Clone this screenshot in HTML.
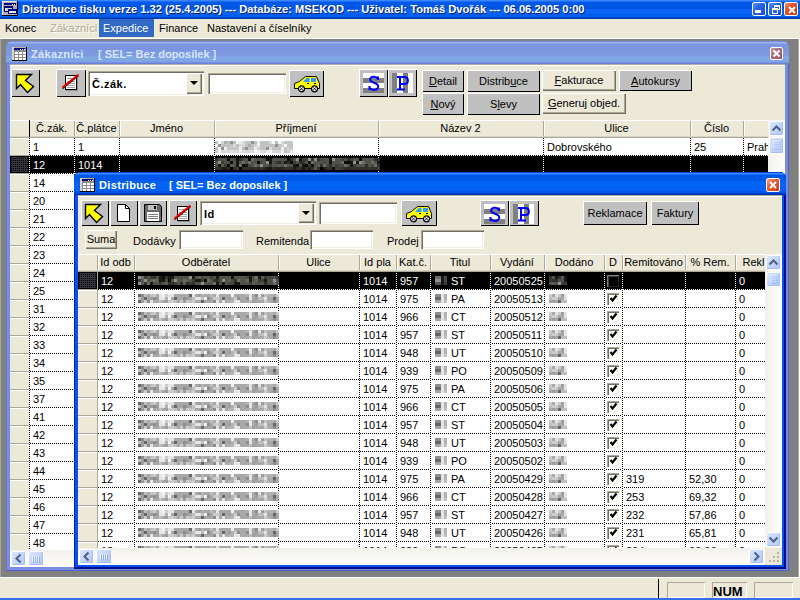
<!DOCTYPE html><html><head><meta charset="utf-8"><style>
*{margin:0;padding:0;box-sizing:border-box}
html,body{width:800px;height:600px;overflow:hidden;background:#ECE9D8;position:relative;font-family:"Liberation Sans",sans-serif;font-size:11px;color:#000}
.t{position:absolute;white-space:nowrap;line-height:13px;font-size:11px}
.b{font-weight:bold}
</style></head><body>
<div style="position:absolute;left:0px;top:0px;width:800px;height:19px;background:linear-gradient(#3A86FF 0px,#3A86FF 1px,#1C6DF8 1px,#1C6DF8 2px,#0058E8 2px,#0058E8 7px,#0052DE 7px,#0052DE 9px,#0766F8 9px,#0766F8 14px,#005EEE 14px,#005EEE 17px,#0048D0 17px,#0048D0 18px,#0038B0 18px);"></div>
<svg style="position:absolute;left:2px;top:1px" width="16" height="15"><rect x="0" y="0" width="16" height="15" fill="#ECE9D8"/><rect x="1" y="1" width="14" height="13" fill="#B0B0B0"/><rect x="15" y="0" width="1" height="15" fill="#000"/><rect x="0" y="14" width="16" height="1" fill="#000"/><rect x="2" y="2" width="12" height="2" fill="#000080"/><rect x="10" y="3" width="1" height="1" fill="#fff"/><rect x="12" y="3" width="1" height="1" fill="#fff"/><rect x="2" y="5" width="9" height="6" fill="#000080"/><rect x="3" y="7" width="7" height="3" fill="#D0D0D0"/><rect x="3" y="7" width="1" height="3" fill="#fff"/><rect x="6" y="8" width="9" height="5" fill="#000080"/><rect x="7" y="10" width="7" height="2" fill="#E8E8E8"/></svg>
<div class="t b" style="left:23px;top:4px;color:#0A1E6E;transform:scaleX(1.0127);transform-origin:0 0">Distribuce tisku verze 1.32 (25.4.2005) --- Databáze: MSEKOD --- Uživatel: Tomáš Dvořák --- 06.06.2005 0:00</div>
<div class="t b" style="left:22px;top:3px;color:#fff;transform:scaleX(1.0127);transform-origin:0 0">Distribuce tisku verze 1.32 (25.4.2005) --- Databáze: MSEKOD --- Uživatel: Tomáš Dvořák --- 06.06.2005 0:00</div>
<div style="position:absolute;left:752px;top:2px;width:14px;height:14px;background:linear-gradient(135deg,#5A95FF 0%,#2663E6 40%,#1A50D0 100%);border:1px solid #fff;border-radius:2px;"><div style="position:absolute;left:2px;top:7px;width:6px;height:3px;background:#fff"></div></div>
<div style="position:absolute;left:768px;top:2px;width:14px;height:14px;background:linear-gradient(135deg,#5A95FF 0%,#2663E6 40%,#1A50D0 100%);border:1px solid #fff;border-radius:2px;"><div style="position:absolute;left:5px;top:2px;width:6px;height:5px;border:1px solid #fff;border-top-width:2px"></div><div style="position:absolute;left:3px;top:5px;width:6px;height:6px;border:1px solid #fff;border-top-width:2px;background:#2663E6"></div></div>
<div style="position:absolute;left:784px;top:2px;width:14px;height:14px;background:linear-gradient(135deg,#F0A080 0%,#E0542C 35%,#C83A12 100%);border:1px solid #fff;border-radius:2px;"><svg width="14" height="14" style="position:absolute;left:0;top:0"><path d="M4 4L10 10M10 4L4 10" stroke="#fff" stroke-width="2"/></svg></div>
<div style="position:absolute;left:0px;top:19px;width:800px;height:19px;background:#ECE9D8;"></div>
<div class="t" style="left:5px;top:22px;">Konec</div>
<div class="t" style="left:50px;top:22px;color:#ACA899;text-shadow:1px 1px #fff;">Zákazníci</div>
<div style="position:absolute;left:99px;top:19px;width:55px;height:18px;background:#316AC5;"></div>
<div class="t" style="left:103px;top:22px;color:#fff;">Expedice</div>
<div class="t" style="left:159px;top:22px;">Finance</div>
<div class="t" style="left:207px;top:22px;">Nastavení a číselníky</div>
<div style="position:absolute;left:0px;top:38px;width:800px;height:1px;background:#fff;"></div>
<div style="position:absolute;left:0px;top:39px;width:800px;height:539px;background:#808080;box-shadow:inset 1px 0 #ACA899, inset -1px 0 #fff, inset -2px 0 #ACA899;"></div>
<div style="position:absolute;left:0px;top:577px;width:800px;height:1px;background:#fff;"></div>
<div style="position:absolute;left:0px;top:578px;width:800px;height:20px;background:#ECE9D8;"></div>
<div style="position:absolute;left:658px;top:579px;width:1px;height:19px;background:#000;"></div>
<div style="position:absolute;left:667px;top:582px;width:38px;height:16px;box-shadow:inset 1px 1px #ACA899, inset -1px -1px #fff;"></div>
<div style="position:absolute;left:712px;top:582px;width:35px;height:16px;box-shadow:inset 1px 1px #ACA899, inset -1px -1px #fff;"></div>
<div style="position:absolute;left:754px;top:582px;width:39px;height:16px;box-shadow:inset 1px 1px #ACA899, inset -1px -1px #fff;"></div>
<div class="t" style="left:713px;top:585px;font-weight:bold;font-size:13px;line-height:14px;">NUM</div>
<div style="position:absolute;left:0px;top:598px;width:800px;height:2px;background:#3A6EE8;"></div>
<div style="position:absolute;left:6px;top:41px;width:783px;height:530px;background:#7A8CE0;border-radius:6px 6px 0 0;box-shadow:inset 1px 0 #6A78D0, inset -1px 0 #5060C8, inset 0 -1px #5060C8;"></div>
<div style="position:absolute;left:6px;top:41px;width:783px;height:23px;background:linear-gradient(#7C8FE0 0px,#7C8FE0 1px,#9CB4EE 1px,#9CB4EE 2px,#8AA6E8 2px,#8AA6E8 3px,#7B95DF 3px,#7B95DF 10px,#7D9AE2 10px,#7D9AE2 15px,#80A6E6 15px,#80A6E6 21px,#7690E0 21px,#7690E0 22px,#6E80D8 22px);border-radius:6px 6px 0 0;"></div>
<svg style="position:absolute;left:12px;top:47px" width="15" height="14"><rect x="0" y="0" width="15" height="14" fill="#8C8C8C"/><rect x="0" y="0" width="15" height="1" fill="#B8B4A0"/><rect x="0" y="0" width="2" height="13" fill="#D8D4C0"/><rect x="14" y="0" width="1" height="14" fill="#000"/><rect x="0" y="13" width="15" height="1" fill="#000"/><rect x="2" y="1" width="11" height="2" fill="#000080"/><rect x="8" y="2" width="1" height="1" fill="#fff"/><rect x="10" y="2" width="1" height="1" fill="#fff"/><rect x="12" y="2" width="1" height="1" fill="#fff"/><rect x="3" y="5" width="3" height="2" fill="#fff"/><rect x="7" y="5" width="3" height="2" fill="#fff"/><rect x="11" y="5" width="3" height="2" fill="#fff"/><rect x="3" y="8" width="3" height="2" fill="#fff"/><rect x="7" y="8" width="3" height="2" fill="#fff"/><rect x="11" y="8" width="3" height="2" fill="#fff"/><rect x="3" y="11" width="3" height="2" fill="#fff"/><rect x="7" y="11" width="3" height="2" fill="#fff"/><rect x="11" y="11" width="3" height="2" fill="#fff"/></svg>
<div class="t b" style="left:31px;top:48px;color:#D8E4F8;font-size:11px;letter-spacing:0.35px">Zákazníci</div>
<div class="t b" style="left:98px;top:48px;color:#D8E4F8;font-size:11px">[ SEL= Bez doposílek ]</div>
<div style="position:absolute;left:770px;top:47px;width:13px;height:13px;background:linear-gradient(135deg,#C8A0B0 0%,#A86878 45%,#985868 100%);border:1px solid #fff;border-radius:2px;"><svg width="11" height="11" style="position:absolute;left:0;top:0"><path d="M2.5 2.5L8.5 8.5M8.5 2.5L2.5 8.5" stroke="#fff" stroke-width="2"/></svg></div>
<div style="position:absolute;left:10px;top:64px;width:775px;height:503px;background:#ECE9D8;box-shadow:inset 0 1px #B0AEA0, inset 0 2px #fff;"></div>
<div style="position:absolute;left:11px;top:69px;width:29px;height:28px;background:#C0C0C0;box-shadow:inset 1px 1px #fff, inset -1px -1px #000;"></div>
<svg style="position:absolute;left:15px;top:73px" width="22" height="22"><path d="M1.5 1.5H16.5L10.5 7.5L18.5 13.5L12.5 19.5L5.5 11.5L1.5 15.5Z" fill="#FFFF00" stroke="#000" stroke-width="1.4" stroke-linejoin="miter"/></svg>
<div style="position:absolute;left:56px;top:69px;width:30px;height:28px;background:#C0C0C0;box-shadow:inset 1px 1px #fff, inset -1px -1px #000;"></div>
<svg style="position:absolute;left:61px;top:72px" width="20" height="20"><rect x="5" y="4" width="12" height="15" fill="#909090"/><rect x="4.5" y="3.5" width="11" height="14" fill="#fff" stroke="#000" stroke-width="1"/><rect x="6" y="6" width="8" height="1" fill="#A0A0A0"/><rect x="6" y="9" width="8" height="1" fill="#A0A0A0"/><rect x="6" y="11" width="8" height="1" fill="#A0A0A0"/><rect x="6" y="13" width="8" height="1" fill="#A0A0A0"/><rect x="6" y="15" width="8" height="1" fill="#A0A0A0"/><path d="M1.5 16.5L17.5 3.5" stroke="#000" stroke-width="1.5"/><path d="M1.5 15.5L17.5 2.5" stroke="#F00000" stroke-width="2"/></svg>
<div style="position:absolute;left:88px;top:71px;width:116px;height:25px;background:#fff;box-shadow:inset 1px 1px #ACA899, inset 2px 2px #716F64, inset -1px -1px #fff, inset -2px -2px #F1EFE2;"></div>
<div style="position:absolute;left:186px;top:73px;width:16px;height:21px;background:#ECE9D8;box-shadow:inset 1px 1px #fff, inset -1px -1px #716F64, inset -2px -2px #ACA899;"><div style="position:absolute;left:4px;top:8px;width:0;height:0;border-left:4px solid transparent;border-right:4px solid transparent;border-top:4px solid #000"></div></div>
<div class="t b" style="left:92px;top:78px;letter-spacing:0.5px">Č.zák.</div>
<div style="position:absolute;left:208px;top:73px;width:78px;height:21px;background:#fff;box-shadow:inset 1px 1px #ACA899, inset 2px 2px #716F64, inset -1px -1px #fff, inset -2px -2px #F1EFE2;"></div>
<div style="position:absolute;left:289px;top:70px;width:35px;height:27px;background:#C0C0C0;box-shadow:inset 1px 1px #fff, inset -1px -1px #000;"></div>
<svg style="position:absolute;left:293px;top:75px" width="30" height="19"><path d="M12.5 1.5H23.5L26.5 8.5V13.5H1.5V8.5L6.5 6.5Z" fill="#FFFF00" stroke="#000" stroke-linejoin="round"/><path d="M10 7L13.5 3H16.5V7Z" fill="#3399FF"/><path d="M18 3H23V7H18Z" fill="#3399FF"/><rect x="14" y="8" width="2" height="1" fill="#000"/><rect x="21" y="8" width="2" height="1" fill="#000"/><circle cx="8.5" cy="13.8" r="3" fill="#fff" stroke="#000" stroke-width="1.2"/><path d="M6.7 12L10.3 15.6M10.3 12L6.7 15.6" stroke="#000" stroke-width="0.8"/><circle cx="21.5" cy="13.8" r="3" fill="#fff" stroke="#000" stroke-width="1.2"/><path d="M19.7 12L23.3 15.6M23.3 12L19.7 15.6" stroke="#000" stroke-width="0.8"/></svg>
<div style="position:absolute;left:359px;top:69px;width:29px;height:28px;background:#C0C0C0;box-shadow:inset 1px 1px #fff, inset -1px -1px #000;"></div>
<svg style="position:absolute;left:363px;top:73px" width="21" height="20"><rect x="0" y="0" width="21" height="20" fill="#fff"/><rect x="0" y="5" width="21" height="5" fill="#808080"/><rect x="0" y="15" width="21" height="5" fill="#808080"/><path d="M15 3.5V7M15 6C13.5 3.5 9 3 7.5 5C6 7.5 8.5 9 11 9.8C14 10.6 16 12 15 15C13.5 17.8 8.5 17.5 6.5 14.8M6.5 13V17" fill="none" stroke="#0000FF" stroke-width="2"/></svg>
<div style="position:absolute;left:388px;top:69px;width:29px;height:28px;background:#C0C0C0;box-shadow:inset 1px 1px #fff, inset -1px -1px #000;"></div>
<svg style="position:absolute;left:392px;top:73px" width="21" height="20"><rect x="0" y="0" width="21" height="20" fill="#fff"/><rect x="0" y="0" width="5" height="20" fill="#808080"/><rect x="11" y="0" width="5" height="20" fill="#808080"/><path d="M5 4H12.5C17 4 17 11 12.5 11H8M8 4V16.5M5 16.5H13" fill="none" stroke="#0000FF" stroke-width="2"/></svg>
<div style="position:absolute;left:422px;top:70px;width:42px;height:22px;background:#C0C0C0;box-shadow:inset 1px 1px #fff, inset -1px -1px #000;"><div class="t" style="left:0;width:42px;text-align:center;top:5px"><u>D</u>etail</div></div>
<div style="position:absolute;left:467px;top:70px;width:73px;height:22px;background:#C0C0C0;box-shadow:inset 1px 1px #fff, inset -1px -1px #000;"><div class="t" style="left:0;width:73px;text-align:center;top:5px">Distrib<u>u</u>ce</div></div>
<div style="position:absolute;left:422px;top:93px;width:42px;height:22px;background:#C0C0C0;box-shadow:inset 1px 1px #fff, inset -1px -1px #000;"><div class="t" style="left:0;width:42px;text-align:center;top:5px"><u>N</u>ový</div></div>
<div style="position:absolute;left:467px;top:93px;width:73px;height:22px;background:#C0C0C0;box-shadow:inset 1px 1px #fff, inset -1px -1px #000;"><div class="t" style="left:0;width:73px;text-align:center;top:5px">S<u>l</u>evy</div></div>
<div style="position:absolute;left:542px;top:70px;width:74px;height:21px;background:#ECE9D8;box-shadow:inset 1px 1px #fff, inset -1px -1px #716F64, inset -2px -2px #ACA899;"><div class="t" style="left:0;width:74px;text-align:center;top:4px"><u>F</u>akturace</div></div>
<div style="position:absolute;left:619px;top:70px;width:73px;height:21px;background:#C0C0C0;box-shadow:inset 1px 1px #fff, inset -1px -1px #000;"><div class="t" style="left:0;width:73px;text-align:center;top:5px"><u>A</u>utokursy</div></div>
<div style="position:absolute;left:542px;top:93px;width:84px;height:21px;background:#ECE9D8;box-shadow:inset 1px 1px #fff, inset -1px -1px #716F64, inset -2px -2px #ACA899;"><div class="t" style="left:0;width:84px;text-align:center;top:4px"><u>G</u>eneruj objed.</div></div>
<div style="position:absolute;left:10px;top:120px;width:758px;height:430px;overflow:hidden;background:#fff">
<div style="position:absolute;left:0px;top:0px;width:758px;height:18px;background:#ECE9D8;box-shadow:inset 0 1px #fff, inset 0 -1px #ACA899, inset 0 -2px #D8D4C4;"></div>
<div style="position:absolute;left:19px;top:0px;width:1px;height:17px;background:#000;"></div>
<div style="position:absolute;left:64px;top:1px;width:1px;height:15px;background:#ACA899;"></div>
<div style="position:absolute;left:65px;top:1px;width:1px;height:15px;background:#fff;"></div>
<div style="position:absolute;left:109px;top:1px;width:1px;height:15px;background:#ACA899;"></div>
<div style="position:absolute;left:110px;top:1px;width:1px;height:15px;background:#fff;"></div>
<div style="position:absolute;left:204px;top:1px;width:1px;height:15px;background:#ACA899;"></div>
<div style="position:absolute;left:205px;top:1px;width:1px;height:15px;background:#fff;"></div>
<div style="position:absolute;left:368px;top:1px;width:1px;height:15px;background:#ACA899;"></div>
<div style="position:absolute;left:369px;top:1px;width:1px;height:15px;background:#fff;"></div>
<div style="position:absolute;left:533px;top:1px;width:1px;height:15px;background:#ACA899;"></div>
<div style="position:absolute;left:534px;top:1px;width:1px;height:15px;background:#fff;"></div>
<div style="position:absolute;left:680px;top:1px;width:1px;height:15px;background:#ACA899;"></div>
<div style="position:absolute;left:681px;top:1px;width:1px;height:15px;background:#fff;"></div>
<div style="position:absolute;left:733px;top:1px;width:1px;height:15px;background:#ACA899;"></div>
<div style="position:absolute;left:734px;top:1px;width:1px;height:15px;background:#fff;"></div>
<div style="position:absolute;left:19px;top:2px;width:45px;height:13px;"><div class="t" style="left:0;top:0;width:45px;text-align:center">Č.zák.</div></div>
<div style="position:absolute;left:64px;top:2px;width:45px;height:13px;"><div class="t" style="left:0;top:0;width:45px;text-align:center">Č.plátce</div></div>
<div style="position:absolute;left:109px;top:2px;width:95px;height:13px;"><div class="t" style="left:0;top:0;width:95px;text-align:center">Jméno</div></div>
<div style="position:absolute;left:204px;top:2px;width:164px;height:13px;"><div class="t" style="left:0;top:0;width:164px;text-align:center">Příjmení</div></div>
<div style="position:absolute;left:368px;top:2px;width:165px;height:13px;"><div class="t" style="left:0;top:0;width:165px;text-align:center">Název 2</div></div>
<div style="position:absolute;left:533px;top:2px;width:147px;height:13px;"><div class="t" style="left:0;top:0;width:147px;text-align:center">Ulice</div></div>
<div style="position:absolute;left:680px;top:2px;width:53px;height:13px;"><div class="t" style="left:0;top:0;width:53px;text-align:center">Číslo</div></div>
<div style="position:absolute;left:0px;top:18px;width:19px;height:17px;background:#ECE9D8;box-shadow:inset 0 1px #fff;"></div>
<div style="position:absolute;left:0px;top:35px;width:19px;height:1px;background:#ACA899;"></div>
<div style="position:absolute;left:19px;top:18px;width:1px;height:18px;background:repeating-linear-gradient(180deg,#000 0 1px,#fff 1px 2px);"></div>
<div style="position:absolute;left:20px;top:35px;width:738px;height:1px;background:repeating-linear-gradient(90deg,#000 0 1px,#fff 1px 2px);"></div>
<div style="position:absolute;left:64px;top:18px;width:1px;height:18px;background:repeating-linear-gradient(180deg,#000 0 1px,#fff 1px 2px);"></div>
<div style="position:absolute;left:109px;top:18px;width:1px;height:18px;background:repeating-linear-gradient(180deg,#000 0 1px,#fff 1px 2px);"></div>
<div style="position:absolute;left:204px;top:18px;width:1px;height:18px;background:repeating-linear-gradient(180deg,#000 0 1px,#fff 1px 2px);"></div>
<div style="position:absolute;left:368px;top:18px;width:1px;height:18px;background:repeating-linear-gradient(180deg,#000 0 1px,#fff 1px 2px);"></div>
<div style="position:absolute;left:533px;top:18px;width:1px;height:18px;background:repeating-linear-gradient(180deg,#000 0 1px,#fff 1px 2px);"></div>
<div style="position:absolute;left:680px;top:18px;width:1px;height:18px;background:repeating-linear-gradient(180deg,#000 0 1px,#fff 1px 2px);"></div>
<div style="position:absolute;left:733px;top:18px;width:1px;height:18px;background:repeating-linear-gradient(180deg,#000 0 1px,#fff 1px 2px);"></div>
<div style="position:absolute;left:23px;top:21px;width:200px;height:13px;"><div class="t" style="left:0;top:0;color:#000">1</div></div>
<div style="position:absolute;left:68px;top:21px;width:200px;height:13px;"><div class="t" style="left:0;top:0;color:#000">1</div></div>
<svg style="position:absolute;left:205px;top:21px" width="78" height="12"><use href="#zp1_l"/></svg>
<div style="position:absolute;left:537px;top:21px;width:200px;height:13px;"><div class="t" style="left:0;top:0;color:#000">Dobrovského</div></div>
<div style="position:absolute;left:684px;top:21px;width:200px;height:13px;"><div class="t" style="left:0;top:0;color:#000">25</div></div>
<div style="position:absolute;left:737px;top:21px;width:200px;height:13px;"><div class="t" style="left:0;top:0;color:#000">Prah</div></div>
<div style="position:absolute;left:0px;top:36px;width:19px;height:17px;background:conic-gradient(#000 25%,#34343C 0) 0 0/2px 2px;box-shadow:inset 0 0 0 1px #000;"></div>
<div style="position:absolute;left:20px;top:36px;width:738px;height:17px;background:#000;"></div>
<div style="position:absolute;left:0px;top:53px;width:19px;height:1px;background:#ACA899;"></div>
<div style="position:absolute;left:19px;top:36px;width:1px;height:18px;background:repeating-linear-gradient(180deg,#000 0 1px,#fff 1px 2px);"></div>
<div style="position:absolute;left:20px;top:53px;width:738px;height:1px;background:repeating-linear-gradient(90deg,#000 0 1px,#fff 1px 2px);"></div>
<div style="position:absolute;left:64px;top:36px;width:1px;height:18px;background:repeating-linear-gradient(180deg,#000 0 1px,#fff 1px 2px);"></div>
<div style="position:absolute;left:109px;top:36px;width:1px;height:18px;background:repeating-linear-gradient(180deg,#000 0 1px,#fff 1px 2px);"></div>
<div style="position:absolute;left:204px;top:36px;width:1px;height:18px;background:repeating-linear-gradient(180deg,#000 0 1px,#fff 1px 2px);"></div>
<div style="position:absolute;left:368px;top:36px;width:1px;height:18px;background:repeating-linear-gradient(180deg,#000 0 1px,#fff 1px 2px);"></div>
<div style="position:absolute;left:533px;top:36px;width:1px;height:18px;background:repeating-linear-gradient(180deg,#000 0 1px,#fff 1px 2px);"></div>
<div style="position:absolute;left:680px;top:36px;width:1px;height:18px;background:repeating-linear-gradient(180deg,#000 0 1px,#fff 1px 2px);"></div>
<div style="position:absolute;left:733px;top:36px;width:1px;height:18px;background:repeating-linear-gradient(180deg,#000 0 1px,#fff 1px 2px);"></div>
<div style="position:absolute;left:23px;top:39px;width:200px;height:13px;"><div class="t" style="left:0;top:0;color:#fff">12</div></div>
<div style="position:absolute;left:68px;top:39px;width:200px;height:13px;"><div class="t" style="left:0;top:0;color:#fff">1014</div></div>
<svg style="position:absolute;left:205px;top:38px" width="165" height="12"><use href="#zp2_d"/></svg>
<div style="position:absolute;left:0px;top:54px;width:19px;height:17px;background:#ECE9D8;box-shadow:inset 0 1px #fff;"></div>
<div style="position:absolute;left:0px;top:71px;width:19px;height:1px;background:#ACA899;"></div>
<div style="position:absolute;left:19px;top:54px;width:1px;height:18px;background:repeating-linear-gradient(180deg,#000 0 1px,#fff 1px 2px);"></div>
<div style="position:absolute;left:20px;top:71px;width:738px;height:1px;background:repeating-linear-gradient(90deg,#000 0 1px,#fff 1px 2px);"></div>
<div style="position:absolute;left:64px;top:54px;width:1px;height:18px;background:repeating-linear-gradient(180deg,#000 0 1px,#fff 1px 2px);"></div>
<div style="position:absolute;left:109px;top:54px;width:1px;height:18px;background:repeating-linear-gradient(180deg,#000 0 1px,#fff 1px 2px);"></div>
<div style="position:absolute;left:204px;top:54px;width:1px;height:18px;background:repeating-linear-gradient(180deg,#000 0 1px,#fff 1px 2px);"></div>
<div style="position:absolute;left:368px;top:54px;width:1px;height:18px;background:repeating-linear-gradient(180deg,#000 0 1px,#fff 1px 2px);"></div>
<div style="position:absolute;left:533px;top:54px;width:1px;height:18px;background:repeating-linear-gradient(180deg,#000 0 1px,#fff 1px 2px);"></div>
<div style="position:absolute;left:680px;top:54px;width:1px;height:18px;background:repeating-linear-gradient(180deg,#000 0 1px,#fff 1px 2px);"></div>
<div style="position:absolute;left:733px;top:54px;width:1px;height:18px;background:repeating-linear-gradient(180deg,#000 0 1px,#fff 1px 2px);"></div>
<div style="position:absolute;left:23px;top:57px;width:200px;height:13px;"><div class="t" style="left:0;top:0;color:#000">14</div></div>
<div style="position:absolute;left:0px;top:72px;width:19px;height:17px;background:#ECE9D8;box-shadow:inset 0 1px #fff;"></div>
<div style="position:absolute;left:0px;top:89px;width:19px;height:1px;background:#ACA899;"></div>
<div style="position:absolute;left:19px;top:72px;width:1px;height:18px;background:repeating-linear-gradient(180deg,#000 0 1px,#fff 1px 2px);"></div>
<div style="position:absolute;left:20px;top:89px;width:738px;height:1px;background:repeating-linear-gradient(90deg,#000 0 1px,#fff 1px 2px);"></div>
<div style="position:absolute;left:64px;top:72px;width:1px;height:18px;background:repeating-linear-gradient(180deg,#000 0 1px,#fff 1px 2px);"></div>
<div style="position:absolute;left:109px;top:72px;width:1px;height:18px;background:repeating-linear-gradient(180deg,#000 0 1px,#fff 1px 2px);"></div>
<div style="position:absolute;left:204px;top:72px;width:1px;height:18px;background:repeating-linear-gradient(180deg,#000 0 1px,#fff 1px 2px);"></div>
<div style="position:absolute;left:368px;top:72px;width:1px;height:18px;background:repeating-linear-gradient(180deg,#000 0 1px,#fff 1px 2px);"></div>
<div style="position:absolute;left:533px;top:72px;width:1px;height:18px;background:repeating-linear-gradient(180deg,#000 0 1px,#fff 1px 2px);"></div>
<div style="position:absolute;left:680px;top:72px;width:1px;height:18px;background:repeating-linear-gradient(180deg,#000 0 1px,#fff 1px 2px);"></div>
<div style="position:absolute;left:733px;top:72px;width:1px;height:18px;background:repeating-linear-gradient(180deg,#000 0 1px,#fff 1px 2px);"></div>
<div style="position:absolute;left:23px;top:75px;width:200px;height:13px;"><div class="t" style="left:0;top:0;color:#000">20</div></div>
<div style="position:absolute;left:0px;top:90px;width:19px;height:17px;background:#ECE9D8;box-shadow:inset 0 1px #fff;"></div>
<div style="position:absolute;left:0px;top:107px;width:19px;height:1px;background:#ACA899;"></div>
<div style="position:absolute;left:19px;top:90px;width:1px;height:18px;background:repeating-linear-gradient(180deg,#000 0 1px,#fff 1px 2px);"></div>
<div style="position:absolute;left:20px;top:107px;width:738px;height:1px;background:repeating-linear-gradient(90deg,#000 0 1px,#fff 1px 2px);"></div>
<div style="position:absolute;left:64px;top:90px;width:1px;height:18px;background:repeating-linear-gradient(180deg,#000 0 1px,#fff 1px 2px);"></div>
<div style="position:absolute;left:109px;top:90px;width:1px;height:18px;background:repeating-linear-gradient(180deg,#000 0 1px,#fff 1px 2px);"></div>
<div style="position:absolute;left:204px;top:90px;width:1px;height:18px;background:repeating-linear-gradient(180deg,#000 0 1px,#fff 1px 2px);"></div>
<div style="position:absolute;left:368px;top:90px;width:1px;height:18px;background:repeating-linear-gradient(180deg,#000 0 1px,#fff 1px 2px);"></div>
<div style="position:absolute;left:533px;top:90px;width:1px;height:18px;background:repeating-linear-gradient(180deg,#000 0 1px,#fff 1px 2px);"></div>
<div style="position:absolute;left:680px;top:90px;width:1px;height:18px;background:repeating-linear-gradient(180deg,#000 0 1px,#fff 1px 2px);"></div>
<div style="position:absolute;left:733px;top:90px;width:1px;height:18px;background:repeating-linear-gradient(180deg,#000 0 1px,#fff 1px 2px);"></div>
<div style="position:absolute;left:23px;top:93px;width:200px;height:13px;"><div class="t" style="left:0;top:0;color:#000">21</div></div>
<div style="position:absolute;left:0px;top:108px;width:19px;height:17px;background:#ECE9D8;box-shadow:inset 0 1px #fff;"></div>
<div style="position:absolute;left:0px;top:125px;width:19px;height:1px;background:#ACA899;"></div>
<div style="position:absolute;left:19px;top:108px;width:1px;height:18px;background:repeating-linear-gradient(180deg,#000 0 1px,#fff 1px 2px);"></div>
<div style="position:absolute;left:20px;top:125px;width:738px;height:1px;background:repeating-linear-gradient(90deg,#000 0 1px,#fff 1px 2px);"></div>
<div style="position:absolute;left:64px;top:108px;width:1px;height:18px;background:repeating-linear-gradient(180deg,#000 0 1px,#fff 1px 2px);"></div>
<div style="position:absolute;left:109px;top:108px;width:1px;height:18px;background:repeating-linear-gradient(180deg,#000 0 1px,#fff 1px 2px);"></div>
<div style="position:absolute;left:204px;top:108px;width:1px;height:18px;background:repeating-linear-gradient(180deg,#000 0 1px,#fff 1px 2px);"></div>
<div style="position:absolute;left:368px;top:108px;width:1px;height:18px;background:repeating-linear-gradient(180deg,#000 0 1px,#fff 1px 2px);"></div>
<div style="position:absolute;left:533px;top:108px;width:1px;height:18px;background:repeating-linear-gradient(180deg,#000 0 1px,#fff 1px 2px);"></div>
<div style="position:absolute;left:680px;top:108px;width:1px;height:18px;background:repeating-linear-gradient(180deg,#000 0 1px,#fff 1px 2px);"></div>
<div style="position:absolute;left:733px;top:108px;width:1px;height:18px;background:repeating-linear-gradient(180deg,#000 0 1px,#fff 1px 2px);"></div>
<div style="position:absolute;left:23px;top:111px;width:200px;height:13px;"><div class="t" style="left:0;top:0;color:#000">22</div></div>
<div style="position:absolute;left:0px;top:126px;width:19px;height:17px;background:#ECE9D8;box-shadow:inset 0 1px #fff;"></div>
<div style="position:absolute;left:0px;top:143px;width:19px;height:1px;background:#ACA899;"></div>
<div style="position:absolute;left:19px;top:126px;width:1px;height:18px;background:repeating-linear-gradient(180deg,#000 0 1px,#fff 1px 2px);"></div>
<div style="position:absolute;left:20px;top:143px;width:738px;height:1px;background:repeating-linear-gradient(90deg,#000 0 1px,#fff 1px 2px);"></div>
<div style="position:absolute;left:64px;top:126px;width:1px;height:18px;background:repeating-linear-gradient(180deg,#000 0 1px,#fff 1px 2px);"></div>
<div style="position:absolute;left:109px;top:126px;width:1px;height:18px;background:repeating-linear-gradient(180deg,#000 0 1px,#fff 1px 2px);"></div>
<div style="position:absolute;left:204px;top:126px;width:1px;height:18px;background:repeating-linear-gradient(180deg,#000 0 1px,#fff 1px 2px);"></div>
<div style="position:absolute;left:368px;top:126px;width:1px;height:18px;background:repeating-linear-gradient(180deg,#000 0 1px,#fff 1px 2px);"></div>
<div style="position:absolute;left:533px;top:126px;width:1px;height:18px;background:repeating-linear-gradient(180deg,#000 0 1px,#fff 1px 2px);"></div>
<div style="position:absolute;left:680px;top:126px;width:1px;height:18px;background:repeating-linear-gradient(180deg,#000 0 1px,#fff 1px 2px);"></div>
<div style="position:absolute;left:733px;top:126px;width:1px;height:18px;background:repeating-linear-gradient(180deg,#000 0 1px,#fff 1px 2px);"></div>
<div style="position:absolute;left:23px;top:129px;width:200px;height:13px;"><div class="t" style="left:0;top:0;color:#000">23</div></div>
<div style="position:absolute;left:0px;top:144px;width:19px;height:17px;background:#ECE9D8;box-shadow:inset 0 1px #fff;"></div>
<div style="position:absolute;left:0px;top:161px;width:19px;height:1px;background:#ACA899;"></div>
<div style="position:absolute;left:19px;top:144px;width:1px;height:18px;background:repeating-linear-gradient(180deg,#000 0 1px,#fff 1px 2px);"></div>
<div style="position:absolute;left:20px;top:161px;width:738px;height:1px;background:repeating-linear-gradient(90deg,#000 0 1px,#fff 1px 2px);"></div>
<div style="position:absolute;left:64px;top:144px;width:1px;height:18px;background:repeating-linear-gradient(180deg,#000 0 1px,#fff 1px 2px);"></div>
<div style="position:absolute;left:109px;top:144px;width:1px;height:18px;background:repeating-linear-gradient(180deg,#000 0 1px,#fff 1px 2px);"></div>
<div style="position:absolute;left:204px;top:144px;width:1px;height:18px;background:repeating-linear-gradient(180deg,#000 0 1px,#fff 1px 2px);"></div>
<div style="position:absolute;left:368px;top:144px;width:1px;height:18px;background:repeating-linear-gradient(180deg,#000 0 1px,#fff 1px 2px);"></div>
<div style="position:absolute;left:533px;top:144px;width:1px;height:18px;background:repeating-linear-gradient(180deg,#000 0 1px,#fff 1px 2px);"></div>
<div style="position:absolute;left:680px;top:144px;width:1px;height:18px;background:repeating-linear-gradient(180deg,#000 0 1px,#fff 1px 2px);"></div>
<div style="position:absolute;left:733px;top:144px;width:1px;height:18px;background:repeating-linear-gradient(180deg,#000 0 1px,#fff 1px 2px);"></div>
<div style="position:absolute;left:23px;top:147px;width:200px;height:13px;"><div class="t" style="left:0;top:0;color:#000">24</div></div>
<div style="position:absolute;left:0px;top:162px;width:19px;height:17px;background:#ECE9D8;box-shadow:inset 0 1px #fff;"></div>
<div style="position:absolute;left:0px;top:179px;width:19px;height:1px;background:#ACA899;"></div>
<div style="position:absolute;left:19px;top:162px;width:1px;height:18px;background:repeating-linear-gradient(180deg,#000 0 1px,#fff 1px 2px);"></div>
<div style="position:absolute;left:20px;top:179px;width:738px;height:1px;background:repeating-linear-gradient(90deg,#000 0 1px,#fff 1px 2px);"></div>
<div style="position:absolute;left:64px;top:162px;width:1px;height:18px;background:repeating-linear-gradient(180deg,#000 0 1px,#fff 1px 2px);"></div>
<div style="position:absolute;left:109px;top:162px;width:1px;height:18px;background:repeating-linear-gradient(180deg,#000 0 1px,#fff 1px 2px);"></div>
<div style="position:absolute;left:204px;top:162px;width:1px;height:18px;background:repeating-linear-gradient(180deg,#000 0 1px,#fff 1px 2px);"></div>
<div style="position:absolute;left:368px;top:162px;width:1px;height:18px;background:repeating-linear-gradient(180deg,#000 0 1px,#fff 1px 2px);"></div>
<div style="position:absolute;left:533px;top:162px;width:1px;height:18px;background:repeating-linear-gradient(180deg,#000 0 1px,#fff 1px 2px);"></div>
<div style="position:absolute;left:680px;top:162px;width:1px;height:18px;background:repeating-linear-gradient(180deg,#000 0 1px,#fff 1px 2px);"></div>
<div style="position:absolute;left:733px;top:162px;width:1px;height:18px;background:repeating-linear-gradient(180deg,#000 0 1px,#fff 1px 2px);"></div>
<div style="position:absolute;left:23px;top:165px;width:200px;height:13px;"><div class="t" style="left:0;top:0;color:#000">25</div></div>
<div style="position:absolute;left:0px;top:180px;width:19px;height:17px;background:#ECE9D8;box-shadow:inset 0 1px #fff;"></div>
<div style="position:absolute;left:0px;top:197px;width:19px;height:1px;background:#ACA899;"></div>
<div style="position:absolute;left:19px;top:180px;width:1px;height:18px;background:repeating-linear-gradient(180deg,#000 0 1px,#fff 1px 2px);"></div>
<div style="position:absolute;left:20px;top:197px;width:738px;height:1px;background:repeating-linear-gradient(90deg,#000 0 1px,#fff 1px 2px);"></div>
<div style="position:absolute;left:64px;top:180px;width:1px;height:18px;background:repeating-linear-gradient(180deg,#000 0 1px,#fff 1px 2px);"></div>
<div style="position:absolute;left:109px;top:180px;width:1px;height:18px;background:repeating-linear-gradient(180deg,#000 0 1px,#fff 1px 2px);"></div>
<div style="position:absolute;left:204px;top:180px;width:1px;height:18px;background:repeating-linear-gradient(180deg,#000 0 1px,#fff 1px 2px);"></div>
<div style="position:absolute;left:368px;top:180px;width:1px;height:18px;background:repeating-linear-gradient(180deg,#000 0 1px,#fff 1px 2px);"></div>
<div style="position:absolute;left:533px;top:180px;width:1px;height:18px;background:repeating-linear-gradient(180deg,#000 0 1px,#fff 1px 2px);"></div>
<div style="position:absolute;left:680px;top:180px;width:1px;height:18px;background:repeating-linear-gradient(180deg,#000 0 1px,#fff 1px 2px);"></div>
<div style="position:absolute;left:733px;top:180px;width:1px;height:18px;background:repeating-linear-gradient(180deg,#000 0 1px,#fff 1px 2px);"></div>
<div style="position:absolute;left:23px;top:183px;width:200px;height:13px;"><div class="t" style="left:0;top:0;color:#000">31</div></div>
<div style="position:absolute;left:0px;top:198px;width:19px;height:17px;background:#ECE9D8;box-shadow:inset 0 1px #fff;"></div>
<div style="position:absolute;left:0px;top:215px;width:19px;height:1px;background:#ACA899;"></div>
<div style="position:absolute;left:19px;top:198px;width:1px;height:18px;background:repeating-linear-gradient(180deg,#000 0 1px,#fff 1px 2px);"></div>
<div style="position:absolute;left:20px;top:215px;width:738px;height:1px;background:repeating-linear-gradient(90deg,#000 0 1px,#fff 1px 2px);"></div>
<div style="position:absolute;left:64px;top:198px;width:1px;height:18px;background:repeating-linear-gradient(180deg,#000 0 1px,#fff 1px 2px);"></div>
<div style="position:absolute;left:109px;top:198px;width:1px;height:18px;background:repeating-linear-gradient(180deg,#000 0 1px,#fff 1px 2px);"></div>
<div style="position:absolute;left:204px;top:198px;width:1px;height:18px;background:repeating-linear-gradient(180deg,#000 0 1px,#fff 1px 2px);"></div>
<div style="position:absolute;left:368px;top:198px;width:1px;height:18px;background:repeating-linear-gradient(180deg,#000 0 1px,#fff 1px 2px);"></div>
<div style="position:absolute;left:533px;top:198px;width:1px;height:18px;background:repeating-linear-gradient(180deg,#000 0 1px,#fff 1px 2px);"></div>
<div style="position:absolute;left:680px;top:198px;width:1px;height:18px;background:repeating-linear-gradient(180deg,#000 0 1px,#fff 1px 2px);"></div>
<div style="position:absolute;left:733px;top:198px;width:1px;height:18px;background:repeating-linear-gradient(180deg,#000 0 1px,#fff 1px 2px);"></div>
<div style="position:absolute;left:23px;top:201px;width:200px;height:13px;"><div class="t" style="left:0;top:0;color:#000">32</div></div>
<div style="position:absolute;left:0px;top:216px;width:19px;height:17px;background:#ECE9D8;box-shadow:inset 0 1px #fff;"></div>
<div style="position:absolute;left:0px;top:233px;width:19px;height:1px;background:#ACA899;"></div>
<div style="position:absolute;left:19px;top:216px;width:1px;height:18px;background:repeating-linear-gradient(180deg,#000 0 1px,#fff 1px 2px);"></div>
<div style="position:absolute;left:20px;top:233px;width:738px;height:1px;background:repeating-linear-gradient(90deg,#000 0 1px,#fff 1px 2px);"></div>
<div style="position:absolute;left:64px;top:216px;width:1px;height:18px;background:repeating-linear-gradient(180deg,#000 0 1px,#fff 1px 2px);"></div>
<div style="position:absolute;left:109px;top:216px;width:1px;height:18px;background:repeating-linear-gradient(180deg,#000 0 1px,#fff 1px 2px);"></div>
<div style="position:absolute;left:204px;top:216px;width:1px;height:18px;background:repeating-linear-gradient(180deg,#000 0 1px,#fff 1px 2px);"></div>
<div style="position:absolute;left:368px;top:216px;width:1px;height:18px;background:repeating-linear-gradient(180deg,#000 0 1px,#fff 1px 2px);"></div>
<div style="position:absolute;left:533px;top:216px;width:1px;height:18px;background:repeating-linear-gradient(180deg,#000 0 1px,#fff 1px 2px);"></div>
<div style="position:absolute;left:680px;top:216px;width:1px;height:18px;background:repeating-linear-gradient(180deg,#000 0 1px,#fff 1px 2px);"></div>
<div style="position:absolute;left:733px;top:216px;width:1px;height:18px;background:repeating-linear-gradient(180deg,#000 0 1px,#fff 1px 2px);"></div>
<div style="position:absolute;left:23px;top:219px;width:200px;height:13px;"><div class="t" style="left:0;top:0;color:#000">33</div></div>
<div style="position:absolute;left:0px;top:234px;width:19px;height:17px;background:#ECE9D8;box-shadow:inset 0 1px #fff;"></div>
<div style="position:absolute;left:0px;top:251px;width:19px;height:1px;background:#ACA899;"></div>
<div style="position:absolute;left:19px;top:234px;width:1px;height:18px;background:repeating-linear-gradient(180deg,#000 0 1px,#fff 1px 2px);"></div>
<div style="position:absolute;left:20px;top:251px;width:738px;height:1px;background:repeating-linear-gradient(90deg,#000 0 1px,#fff 1px 2px);"></div>
<div style="position:absolute;left:64px;top:234px;width:1px;height:18px;background:repeating-linear-gradient(180deg,#000 0 1px,#fff 1px 2px);"></div>
<div style="position:absolute;left:109px;top:234px;width:1px;height:18px;background:repeating-linear-gradient(180deg,#000 0 1px,#fff 1px 2px);"></div>
<div style="position:absolute;left:204px;top:234px;width:1px;height:18px;background:repeating-linear-gradient(180deg,#000 0 1px,#fff 1px 2px);"></div>
<div style="position:absolute;left:368px;top:234px;width:1px;height:18px;background:repeating-linear-gradient(180deg,#000 0 1px,#fff 1px 2px);"></div>
<div style="position:absolute;left:533px;top:234px;width:1px;height:18px;background:repeating-linear-gradient(180deg,#000 0 1px,#fff 1px 2px);"></div>
<div style="position:absolute;left:680px;top:234px;width:1px;height:18px;background:repeating-linear-gradient(180deg,#000 0 1px,#fff 1px 2px);"></div>
<div style="position:absolute;left:733px;top:234px;width:1px;height:18px;background:repeating-linear-gradient(180deg,#000 0 1px,#fff 1px 2px);"></div>
<div style="position:absolute;left:23px;top:237px;width:200px;height:13px;"><div class="t" style="left:0;top:0;color:#000">34</div></div>
<div style="position:absolute;left:0px;top:252px;width:19px;height:17px;background:#ECE9D8;box-shadow:inset 0 1px #fff;"></div>
<div style="position:absolute;left:0px;top:269px;width:19px;height:1px;background:#ACA899;"></div>
<div style="position:absolute;left:19px;top:252px;width:1px;height:18px;background:repeating-linear-gradient(180deg,#000 0 1px,#fff 1px 2px);"></div>
<div style="position:absolute;left:20px;top:269px;width:738px;height:1px;background:repeating-linear-gradient(90deg,#000 0 1px,#fff 1px 2px);"></div>
<div style="position:absolute;left:64px;top:252px;width:1px;height:18px;background:repeating-linear-gradient(180deg,#000 0 1px,#fff 1px 2px);"></div>
<div style="position:absolute;left:109px;top:252px;width:1px;height:18px;background:repeating-linear-gradient(180deg,#000 0 1px,#fff 1px 2px);"></div>
<div style="position:absolute;left:204px;top:252px;width:1px;height:18px;background:repeating-linear-gradient(180deg,#000 0 1px,#fff 1px 2px);"></div>
<div style="position:absolute;left:368px;top:252px;width:1px;height:18px;background:repeating-linear-gradient(180deg,#000 0 1px,#fff 1px 2px);"></div>
<div style="position:absolute;left:533px;top:252px;width:1px;height:18px;background:repeating-linear-gradient(180deg,#000 0 1px,#fff 1px 2px);"></div>
<div style="position:absolute;left:680px;top:252px;width:1px;height:18px;background:repeating-linear-gradient(180deg,#000 0 1px,#fff 1px 2px);"></div>
<div style="position:absolute;left:733px;top:252px;width:1px;height:18px;background:repeating-linear-gradient(180deg,#000 0 1px,#fff 1px 2px);"></div>
<div style="position:absolute;left:23px;top:255px;width:200px;height:13px;"><div class="t" style="left:0;top:0;color:#000">35</div></div>
<div style="position:absolute;left:0px;top:270px;width:19px;height:17px;background:#ECE9D8;box-shadow:inset 0 1px #fff;"></div>
<div style="position:absolute;left:0px;top:287px;width:19px;height:1px;background:#ACA899;"></div>
<div style="position:absolute;left:19px;top:270px;width:1px;height:18px;background:repeating-linear-gradient(180deg,#000 0 1px,#fff 1px 2px);"></div>
<div style="position:absolute;left:20px;top:287px;width:738px;height:1px;background:repeating-linear-gradient(90deg,#000 0 1px,#fff 1px 2px);"></div>
<div style="position:absolute;left:64px;top:270px;width:1px;height:18px;background:repeating-linear-gradient(180deg,#000 0 1px,#fff 1px 2px);"></div>
<div style="position:absolute;left:109px;top:270px;width:1px;height:18px;background:repeating-linear-gradient(180deg,#000 0 1px,#fff 1px 2px);"></div>
<div style="position:absolute;left:204px;top:270px;width:1px;height:18px;background:repeating-linear-gradient(180deg,#000 0 1px,#fff 1px 2px);"></div>
<div style="position:absolute;left:368px;top:270px;width:1px;height:18px;background:repeating-linear-gradient(180deg,#000 0 1px,#fff 1px 2px);"></div>
<div style="position:absolute;left:533px;top:270px;width:1px;height:18px;background:repeating-linear-gradient(180deg,#000 0 1px,#fff 1px 2px);"></div>
<div style="position:absolute;left:680px;top:270px;width:1px;height:18px;background:repeating-linear-gradient(180deg,#000 0 1px,#fff 1px 2px);"></div>
<div style="position:absolute;left:733px;top:270px;width:1px;height:18px;background:repeating-linear-gradient(180deg,#000 0 1px,#fff 1px 2px);"></div>
<div style="position:absolute;left:23px;top:273px;width:200px;height:13px;"><div class="t" style="left:0;top:0;color:#000">37</div></div>
<div style="position:absolute;left:0px;top:288px;width:19px;height:17px;background:#ECE9D8;box-shadow:inset 0 1px #fff;"></div>
<div style="position:absolute;left:0px;top:305px;width:19px;height:1px;background:#ACA899;"></div>
<div style="position:absolute;left:19px;top:288px;width:1px;height:18px;background:repeating-linear-gradient(180deg,#000 0 1px,#fff 1px 2px);"></div>
<div style="position:absolute;left:20px;top:305px;width:738px;height:1px;background:repeating-linear-gradient(90deg,#000 0 1px,#fff 1px 2px);"></div>
<div style="position:absolute;left:64px;top:288px;width:1px;height:18px;background:repeating-linear-gradient(180deg,#000 0 1px,#fff 1px 2px);"></div>
<div style="position:absolute;left:109px;top:288px;width:1px;height:18px;background:repeating-linear-gradient(180deg,#000 0 1px,#fff 1px 2px);"></div>
<div style="position:absolute;left:204px;top:288px;width:1px;height:18px;background:repeating-linear-gradient(180deg,#000 0 1px,#fff 1px 2px);"></div>
<div style="position:absolute;left:368px;top:288px;width:1px;height:18px;background:repeating-linear-gradient(180deg,#000 0 1px,#fff 1px 2px);"></div>
<div style="position:absolute;left:533px;top:288px;width:1px;height:18px;background:repeating-linear-gradient(180deg,#000 0 1px,#fff 1px 2px);"></div>
<div style="position:absolute;left:680px;top:288px;width:1px;height:18px;background:repeating-linear-gradient(180deg,#000 0 1px,#fff 1px 2px);"></div>
<div style="position:absolute;left:733px;top:288px;width:1px;height:18px;background:repeating-linear-gradient(180deg,#000 0 1px,#fff 1px 2px);"></div>
<div style="position:absolute;left:23px;top:291px;width:200px;height:13px;"><div class="t" style="left:0;top:0;color:#000">41</div></div>
<div style="position:absolute;left:0px;top:306px;width:19px;height:17px;background:#ECE9D8;box-shadow:inset 0 1px #fff;"></div>
<div style="position:absolute;left:0px;top:323px;width:19px;height:1px;background:#ACA899;"></div>
<div style="position:absolute;left:19px;top:306px;width:1px;height:18px;background:repeating-linear-gradient(180deg,#000 0 1px,#fff 1px 2px);"></div>
<div style="position:absolute;left:20px;top:323px;width:738px;height:1px;background:repeating-linear-gradient(90deg,#000 0 1px,#fff 1px 2px);"></div>
<div style="position:absolute;left:64px;top:306px;width:1px;height:18px;background:repeating-linear-gradient(180deg,#000 0 1px,#fff 1px 2px);"></div>
<div style="position:absolute;left:109px;top:306px;width:1px;height:18px;background:repeating-linear-gradient(180deg,#000 0 1px,#fff 1px 2px);"></div>
<div style="position:absolute;left:204px;top:306px;width:1px;height:18px;background:repeating-linear-gradient(180deg,#000 0 1px,#fff 1px 2px);"></div>
<div style="position:absolute;left:368px;top:306px;width:1px;height:18px;background:repeating-linear-gradient(180deg,#000 0 1px,#fff 1px 2px);"></div>
<div style="position:absolute;left:533px;top:306px;width:1px;height:18px;background:repeating-linear-gradient(180deg,#000 0 1px,#fff 1px 2px);"></div>
<div style="position:absolute;left:680px;top:306px;width:1px;height:18px;background:repeating-linear-gradient(180deg,#000 0 1px,#fff 1px 2px);"></div>
<div style="position:absolute;left:733px;top:306px;width:1px;height:18px;background:repeating-linear-gradient(180deg,#000 0 1px,#fff 1px 2px);"></div>
<div style="position:absolute;left:23px;top:309px;width:200px;height:13px;"><div class="t" style="left:0;top:0;color:#000">42</div></div>
<div style="position:absolute;left:0px;top:324px;width:19px;height:17px;background:#ECE9D8;box-shadow:inset 0 1px #fff;"></div>
<div style="position:absolute;left:0px;top:341px;width:19px;height:1px;background:#ACA899;"></div>
<div style="position:absolute;left:19px;top:324px;width:1px;height:18px;background:repeating-linear-gradient(180deg,#000 0 1px,#fff 1px 2px);"></div>
<div style="position:absolute;left:20px;top:341px;width:738px;height:1px;background:repeating-linear-gradient(90deg,#000 0 1px,#fff 1px 2px);"></div>
<div style="position:absolute;left:64px;top:324px;width:1px;height:18px;background:repeating-linear-gradient(180deg,#000 0 1px,#fff 1px 2px);"></div>
<div style="position:absolute;left:109px;top:324px;width:1px;height:18px;background:repeating-linear-gradient(180deg,#000 0 1px,#fff 1px 2px);"></div>
<div style="position:absolute;left:204px;top:324px;width:1px;height:18px;background:repeating-linear-gradient(180deg,#000 0 1px,#fff 1px 2px);"></div>
<div style="position:absolute;left:368px;top:324px;width:1px;height:18px;background:repeating-linear-gradient(180deg,#000 0 1px,#fff 1px 2px);"></div>
<div style="position:absolute;left:533px;top:324px;width:1px;height:18px;background:repeating-linear-gradient(180deg,#000 0 1px,#fff 1px 2px);"></div>
<div style="position:absolute;left:680px;top:324px;width:1px;height:18px;background:repeating-linear-gradient(180deg,#000 0 1px,#fff 1px 2px);"></div>
<div style="position:absolute;left:733px;top:324px;width:1px;height:18px;background:repeating-linear-gradient(180deg,#000 0 1px,#fff 1px 2px);"></div>
<div style="position:absolute;left:23px;top:327px;width:200px;height:13px;"><div class="t" style="left:0;top:0;color:#000">43</div></div>
<div style="position:absolute;left:0px;top:342px;width:19px;height:17px;background:#ECE9D8;box-shadow:inset 0 1px #fff;"></div>
<div style="position:absolute;left:0px;top:359px;width:19px;height:1px;background:#ACA899;"></div>
<div style="position:absolute;left:19px;top:342px;width:1px;height:18px;background:repeating-linear-gradient(180deg,#000 0 1px,#fff 1px 2px);"></div>
<div style="position:absolute;left:20px;top:359px;width:738px;height:1px;background:repeating-linear-gradient(90deg,#000 0 1px,#fff 1px 2px);"></div>
<div style="position:absolute;left:64px;top:342px;width:1px;height:18px;background:repeating-linear-gradient(180deg,#000 0 1px,#fff 1px 2px);"></div>
<div style="position:absolute;left:109px;top:342px;width:1px;height:18px;background:repeating-linear-gradient(180deg,#000 0 1px,#fff 1px 2px);"></div>
<div style="position:absolute;left:204px;top:342px;width:1px;height:18px;background:repeating-linear-gradient(180deg,#000 0 1px,#fff 1px 2px);"></div>
<div style="position:absolute;left:368px;top:342px;width:1px;height:18px;background:repeating-linear-gradient(180deg,#000 0 1px,#fff 1px 2px);"></div>
<div style="position:absolute;left:533px;top:342px;width:1px;height:18px;background:repeating-linear-gradient(180deg,#000 0 1px,#fff 1px 2px);"></div>
<div style="position:absolute;left:680px;top:342px;width:1px;height:18px;background:repeating-linear-gradient(180deg,#000 0 1px,#fff 1px 2px);"></div>
<div style="position:absolute;left:733px;top:342px;width:1px;height:18px;background:repeating-linear-gradient(180deg,#000 0 1px,#fff 1px 2px);"></div>
<div style="position:absolute;left:23px;top:345px;width:200px;height:13px;"><div class="t" style="left:0;top:0;color:#000">44</div></div>
<div style="position:absolute;left:0px;top:360px;width:19px;height:17px;background:#ECE9D8;box-shadow:inset 0 1px #fff;"></div>
<div style="position:absolute;left:0px;top:377px;width:19px;height:1px;background:#ACA899;"></div>
<div style="position:absolute;left:19px;top:360px;width:1px;height:18px;background:repeating-linear-gradient(180deg,#000 0 1px,#fff 1px 2px);"></div>
<div style="position:absolute;left:20px;top:377px;width:738px;height:1px;background:repeating-linear-gradient(90deg,#000 0 1px,#fff 1px 2px);"></div>
<div style="position:absolute;left:64px;top:360px;width:1px;height:18px;background:repeating-linear-gradient(180deg,#000 0 1px,#fff 1px 2px);"></div>
<div style="position:absolute;left:109px;top:360px;width:1px;height:18px;background:repeating-linear-gradient(180deg,#000 0 1px,#fff 1px 2px);"></div>
<div style="position:absolute;left:204px;top:360px;width:1px;height:18px;background:repeating-linear-gradient(180deg,#000 0 1px,#fff 1px 2px);"></div>
<div style="position:absolute;left:368px;top:360px;width:1px;height:18px;background:repeating-linear-gradient(180deg,#000 0 1px,#fff 1px 2px);"></div>
<div style="position:absolute;left:533px;top:360px;width:1px;height:18px;background:repeating-linear-gradient(180deg,#000 0 1px,#fff 1px 2px);"></div>
<div style="position:absolute;left:680px;top:360px;width:1px;height:18px;background:repeating-linear-gradient(180deg,#000 0 1px,#fff 1px 2px);"></div>
<div style="position:absolute;left:733px;top:360px;width:1px;height:18px;background:repeating-linear-gradient(180deg,#000 0 1px,#fff 1px 2px);"></div>
<div style="position:absolute;left:23px;top:363px;width:200px;height:13px;"><div class="t" style="left:0;top:0;color:#000">45</div></div>
<div style="position:absolute;left:0px;top:378px;width:19px;height:17px;background:#ECE9D8;box-shadow:inset 0 1px #fff;"></div>
<div style="position:absolute;left:0px;top:395px;width:19px;height:1px;background:#ACA899;"></div>
<div style="position:absolute;left:19px;top:378px;width:1px;height:18px;background:repeating-linear-gradient(180deg,#000 0 1px,#fff 1px 2px);"></div>
<div style="position:absolute;left:20px;top:395px;width:738px;height:1px;background:repeating-linear-gradient(90deg,#000 0 1px,#fff 1px 2px);"></div>
<div style="position:absolute;left:64px;top:378px;width:1px;height:18px;background:repeating-linear-gradient(180deg,#000 0 1px,#fff 1px 2px);"></div>
<div style="position:absolute;left:109px;top:378px;width:1px;height:18px;background:repeating-linear-gradient(180deg,#000 0 1px,#fff 1px 2px);"></div>
<div style="position:absolute;left:204px;top:378px;width:1px;height:18px;background:repeating-linear-gradient(180deg,#000 0 1px,#fff 1px 2px);"></div>
<div style="position:absolute;left:368px;top:378px;width:1px;height:18px;background:repeating-linear-gradient(180deg,#000 0 1px,#fff 1px 2px);"></div>
<div style="position:absolute;left:533px;top:378px;width:1px;height:18px;background:repeating-linear-gradient(180deg,#000 0 1px,#fff 1px 2px);"></div>
<div style="position:absolute;left:680px;top:378px;width:1px;height:18px;background:repeating-linear-gradient(180deg,#000 0 1px,#fff 1px 2px);"></div>
<div style="position:absolute;left:733px;top:378px;width:1px;height:18px;background:repeating-linear-gradient(180deg,#000 0 1px,#fff 1px 2px);"></div>
<div style="position:absolute;left:23px;top:381px;width:200px;height:13px;"><div class="t" style="left:0;top:0;color:#000">46</div></div>
<div style="position:absolute;left:0px;top:396px;width:19px;height:17px;background:#ECE9D8;box-shadow:inset 0 1px #fff;"></div>
<div style="position:absolute;left:0px;top:413px;width:19px;height:1px;background:#ACA899;"></div>
<div style="position:absolute;left:19px;top:396px;width:1px;height:18px;background:repeating-linear-gradient(180deg,#000 0 1px,#fff 1px 2px);"></div>
<div style="position:absolute;left:20px;top:413px;width:738px;height:1px;background:repeating-linear-gradient(90deg,#000 0 1px,#fff 1px 2px);"></div>
<div style="position:absolute;left:64px;top:396px;width:1px;height:18px;background:repeating-linear-gradient(180deg,#000 0 1px,#fff 1px 2px);"></div>
<div style="position:absolute;left:109px;top:396px;width:1px;height:18px;background:repeating-linear-gradient(180deg,#000 0 1px,#fff 1px 2px);"></div>
<div style="position:absolute;left:204px;top:396px;width:1px;height:18px;background:repeating-linear-gradient(180deg,#000 0 1px,#fff 1px 2px);"></div>
<div style="position:absolute;left:368px;top:396px;width:1px;height:18px;background:repeating-linear-gradient(180deg,#000 0 1px,#fff 1px 2px);"></div>
<div style="position:absolute;left:533px;top:396px;width:1px;height:18px;background:repeating-linear-gradient(180deg,#000 0 1px,#fff 1px 2px);"></div>
<div style="position:absolute;left:680px;top:396px;width:1px;height:18px;background:repeating-linear-gradient(180deg,#000 0 1px,#fff 1px 2px);"></div>
<div style="position:absolute;left:733px;top:396px;width:1px;height:18px;background:repeating-linear-gradient(180deg,#000 0 1px,#fff 1px 2px);"></div>
<div style="position:absolute;left:23px;top:399px;width:200px;height:13px;"><div class="t" style="left:0;top:0;color:#000">47</div></div>
<div style="position:absolute;left:0px;top:414px;width:19px;height:17px;background:#ECE9D8;box-shadow:inset 0 1px #fff;"></div>
<div style="position:absolute;left:0px;top:431px;width:19px;height:1px;background:#ACA899;"></div>
<div style="position:absolute;left:19px;top:414px;width:1px;height:18px;background:repeating-linear-gradient(180deg,#000 0 1px,#fff 1px 2px);"></div>
<div style="position:absolute;left:20px;top:431px;width:738px;height:1px;background:repeating-linear-gradient(90deg,#000 0 1px,#fff 1px 2px);"></div>
<div style="position:absolute;left:64px;top:414px;width:1px;height:18px;background:repeating-linear-gradient(180deg,#000 0 1px,#fff 1px 2px);"></div>
<div style="position:absolute;left:109px;top:414px;width:1px;height:18px;background:repeating-linear-gradient(180deg,#000 0 1px,#fff 1px 2px);"></div>
<div style="position:absolute;left:204px;top:414px;width:1px;height:18px;background:repeating-linear-gradient(180deg,#000 0 1px,#fff 1px 2px);"></div>
<div style="position:absolute;left:368px;top:414px;width:1px;height:18px;background:repeating-linear-gradient(180deg,#000 0 1px,#fff 1px 2px);"></div>
<div style="position:absolute;left:533px;top:414px;width:1px;height:18px;background:repeating-linear-gradient(180deg,#000 0 1px,#fff 1px 2px);"></div>
<div style="position:absolute;left:680px;top:414px;width:1px;height:18px;background:repeating-linear-gradient(180deg,#000 0 1px,#fff 1px 2px);"></div>
<div style="position:absolute;left:733px;top:414px;width:1px;height:18px;background:repeating-linear-gradient(180deg,#000 0 1px,#fff 1px 2px);"></div>
<div style="position:absolute;left:23px;top:417px;width:200px;height:13px;"><div class="t" style="left:0;top:0;color:#000">48</div></div>
</div>
<div style="position:absolute;left:768px;top:120px;width:17px;height:430px;background:linear-gradient(90deg,#F3F1EC,#FEFEFB);"></div>
<div style="position:absolute;left:769px;top:121px;width:15px;height:15px;background:linear-gradient(135deg,#DCE6FD 0%,#C4D5FC 50%,#B6CAF8 100%);border:1px solid #fff;border-radius:2px;box-shadow:inset -1px -1px #A9BCEC;"><svg width="15" height="15" style="position:absolute;left:-1px;top:-1px"><path d="M3.5 9.5L7.5 5.5L11.5 9.5" fill="none" stroke="#4D6185" stroke-width="2"/></svg></div>
<div style="position:absolute;left:769px;top:137px;width:15px;height:17px;background:linear-gradient(135deg,#DCE6FD 0%,#C4D5FC 50%,#B6CAF8 100%);border:1px solid #fff;border-radius:2px;box-shadow:inset -1px -1px #A9BCEC;"><svg width="15" height="17" style="position:absolute;left:-1px;top:-1px"><rect x="4.5" y="4.5" width="6" height="1" fill="#EEF4FE"/><rect x="5.5" y="5.5" width="6" height="1" fill="#8CB0F8"/><rect x="4.5" y="6.5" width="6" height="1" fill="#EEF4FE"/><rect x="5.5" y="7.5" width="6" height="1" fill="#8CB0F8"/><rect x="4.5" y="8.5" width="6" height="1" fill="#EEF4FE"/><rect x="5.5" y="9.5" width="6" height="1" fill="#8CB0F8"/><rect x="4.5" y="10.5" width="6" height="1" fill="#EEF4FE"/><rect x="5.5" y="11.5" width="6" height="1" fill="#8CB0F8"/></svg></div>
<div style="position:absolute;left:10px;top:550px;width:758px;height:17px;background:linear-gradient(#F3F1EC,#FEFEFB);"></div>
<div style="position:absolute;left:11px;top:551px;width:15px;height:15px;background:linear-gradient(135deg,#DCE6FD 0%,#C4D5FC 50%,#B6CAF8 100%);border:1px solid #fff;border-radius:2px;box-shadow:inset -1px -1px #A9BCEC;"><svg width="15" height="15" style="position:absolute;left:-1px;top:-1px"><path d="M9.5 3.5L5.5 7.5L9.5 11.5" fill="none" stroke="#4D6185" stroke-width="2"/></svg></div>
<div style="position:absolute;left:28px;top:551px;width:16px;height:15px;background:linear-gradient(135deg,#DCE6FD 0%,#C4D5FC 50%,#B6CAF8 100%);border:1px solid #fff;border-radius:2px;box-shadow:inset -1px -1px #A9BCEC;"><svg width="16" height="15" style="position:absolute;left:-1px;top:-1px"><rect x="4.0" y="4.5" width="1" height="6" fill="#EEF4FE"/><rect x="5.0" y="5.5" width="1" height="6" fill="#8CB0F8"/><rect x="6.0" y="4.5" width="1" height="6" fill="#EEF4FE"/><rect x="7.0" y="5.5" width="1" height="6" fill="#8CB0F8"/><rect x="8.0" y="4.5" width="1" height="6" fill="#EEF4FE"/><rect x="9.0" y="5.5" width="1" height="6" fill="#8CB0F8"/><rect x="10.0" y="4.5" width="1" height="6" fill="#EEF4FE"/><rect x="11.0" y="5.5" width="1" height="6" fill="#8CB0F8"/></svg></div>
<div style="position:absolute;left:768px;top:550px;width:17px;height:17px;background:#ECE9D8;"></div>
<div style="position:absolute;left:74px;top:172px;width:712px;height:397px;background:#0A50F0;border-radius:6px 6px 0 0;box-shadow:inset 1px 0 #0020B8, inset -2px 0 #000E8C, inset 0 -2px #000E8C;"></div>
<div style="position:absolute;left:74px;top:172px;width:712px;height:23px;background:linear-gradient(#0842C8 0px,#0842C8 1px,#3B8CFF 1px,#3B8CFF 2px,#1A70FA 2px,#1A70FA 3px,#0058E8 3px,#0058E8 9px,#0262F6 9px,#0262F6 19px,#0052E2 19px,#0052E2 21px,#0040C8 21px,#0040C8 22px,#0030B0 22px);border-radius:6px 6px 0 0;"></div>
<svg style="position:absolute;left:80px;top:178px" width="15" height="14"><rect x="0" y="0" width="15" height="14" fill="#8C8C8C"/><rect x="0" y="0" width="15" height="1" fill="#B8B4A0"/><rect x="0" y="0" width="2" height="13" fill="#D8D4C0"/><rect x="14" y="0" width="1" height="14" fill="#000"/><rect x="0" y="13" width="15" height="1" fill="#000"/><rect x="2" y="1" width="11" height="2" fill="#000080"/><rect x="8" y="2" width="1" height="1" fill="#fff"/><rect x="10" y="2" width="1" height="1" fill="#fff"/><rect x="12" y="2" width="1" height="1" fill="#fff"/><rect x="3" y="5" width="3" height="2" fill="#fff"/><rect x="7" y="5" width="3" height="2" fill="#fff"/><rect x="11" y="5" width="3" height="2" fill="#fff"/><rect x="3" y="8" width="3" height="2" fill="#fff"/><rect x="7" y="8" width="3" height="2" fill="#fff"/><rect x="11" y="8" width="3" height="2" fill="#fff"/><rect x="3" y="11" width="3" height="2" fill="#fff"/><rect x="7" y="11" width="3" height="2" fill="#fff"/><rect x="11" y="11" width="3" height="2" fill="#fff"/></svg>
<div class="t b" style="left:99px;top:179px;color:#fff;font-size:11px;letter-spacing:0.35px">Distribuce</div>
<div class="t b" style="left:169px;top:179px;color:#fff;font-size:11px">[ SEL= Bez doposílek ]</div>
<div style="position:absolute;left:766px;top:178px;width:14px;height:14px;background:linear-gradient(135deg,#F4A888 0%,#E45C34 40%,#CC3C14 100%);border:1px solid #fff;border-radius:2px;"><svg width="12" height="12" style="position:absolute;left:0;top:0"><path d="M3 3L9 9M9 3L3 9" stroke="#fff" stroke-width="2"/></svg></div>
<div style="position:absolute;left:78px;top:195px;width:704px;height:370px;background:#ECE9D8;box-shadow:inset 0 1px #B0AEA0, inset 0 2px #fff;"></div>
<div style="position:absolute;left:81px;top:200px;width:28px;height:26px;background:#C0C0C0;box-shadow:inset 1px 1px #fff, inset -1px -1px #000;"></div>
<svg style="position:absolute;left:84px;top:203px" width="22" height="22"><path d="M1.5 1.5H16.5L10.5 7.5L18.5 13.5L12.5 19.5L5.5 11.5L1.5 15.5Z" fill="#FFFF00" stroke="#000" stroke-width="1.4" stroke-linejoin="miter"/></svg>
<div style="position:absolute;left:110px;top:200px;width:28px;height:26px;background:#C0C0C0;box-shadow:inset 1px 1px #fff, inset -1px -1px #000;"></div>
<svg style="position:absolute;left:114px;top:203px" width="20" height="20"><path d="M3.5 1.5H11.5L15.5 5.5V18.5H3.5Z" fill="#fff" stroke="#000"/><path d="M11.5 1.5V5.5H15.5" fill="none" stroke="#000"/></svg>
<div style="position:absolute;left:139px;top:200px;width:28px;height:26px;background:#C0C0C0;box-shadow:inset 1px 1px #fff, inset -1px -1px #000;"></div>
<svg style="position:absolute;left:143px;top:203px" width="20" height="20"><path d="M1.5 1.5H16.5L18.5 3.5V18.5H1.5Z" fill="#686868" stroke="#000"/><rect x="5" y="2" width="9" height="5" fill="#C0C0C0"/><rect x="11" y="3" width="2" height="3" fill="#000"/><rect x="4" y="9" width="12" height="9" fill="#fff"/><rect x="5" y="11" width="10" height="1" fill="#808080"/><rect x="5" y="13" width="10" height="1" fill="#808080"/><rect x="5" y="15" width="10" height="1" fill="#808080"/></svg>
<div style="position:absolute;left:169px;top:200px;width:28px;height:26px;background:#C0C0C0;box-shadow:inset 1px 1px #fff, inset -1px -1px #000;"></div>
<svg style="position:absolute;left:173px;top:203px" width="20" height="20"><rect x="5" y="4" width="12" height="15" fill="#909090"/><rect x="4.5" y="3.5" width="11" height="14" fill="#fff" stroke="#000" stroke-width="1"/><rect x="6" y="6" width="8" height="1" fill="#A0A0A0"/><rect x="6" y="9" width="8" height="1" fill="#A0A0A0"/><rect x="6" y="11" width="8" height="1" fill="#A0A0A0"/><rect x="6" y="13" width="8" height="1" fill="#A0A0A0"/><rect x="6" y="15" width="8" height="1" fill="#A0A0A0"/><path d="M1.5 16.5L17.5 3.5" stroke="#000" stroke-width="1.5"/><path d="M1.5 15.5L17.5 2.5" stroke="#F00000" stroke-width="2"/></svg>
<div style="position:absolute;left:200px;top:201px;width:116px;height:24px;background:#fff;box-shadow:inset 1px 1px #ACA899, inset 2px 2px #716F64, inset -1px -1px #fff, inset -2px -2px #F1EFE2;"></div>
<div style="position:absolute;left:298px;top:203px;width:16px;height:20px;background:#ECE9D8;box-shadow:inset 1px 1px #fff, inset -1px -1px #716F64, inset -2px -2px #ACA899;"><div style="position:absolute;left:4px;top:8px;width:0;height:0;border-left:4px solid transparent;border-right:4px solid transparent;border-top:4px solid #000"></div></div>
<div class="t b" style="left:204px;top:208px;letter-spacing:0.5px">Id</div>
<div style="position:absolute;left:319px;top:202px;width:78px;height:22px;background:#fff;box-shadow:inset 1px 1px #ACA899, inset 2px 2px #716F64, inset -1px -1px #fff, inset -2px -2px #F1EFE2;"></div>
<div style="position:absolute;left:401px;top:200px;width:36px;height:26px;background:#C0C0C0;box-shadow:inset 1px 1px #fff, inset -1px -1px #000;"></div>
<svg style="position:absolute;left:405px;top:205px" width="30" height="19"><path d="M12.5 1.5H23.5L26.5 8.5V13.5H1.5V8.5L6.5 6.5Z" fill="#FFFF00" stroke="#000" stroke-linejoin="round"/><path d="M10 7L13.5 3H16.5V7Z" fill="#3399FF"/><path d="M18 3H23V7H18Z" fill="#3399FF"/><rect x="14" y="8" width="2" height="1" fill="#000"/><rect x="21" y="8" width="2" height="1" fill="#000"/><circle cx="8.5" cy="13.8" r="3" fill="#fff" stroke="#000" stroke-width="1.2"/><path d="M6.7 12L10.3 15.6M10.3 12L6.7 15.6" stroke="#000" stroke-width="0.8"/><circle cx="21.5" cy="13.8" r="3" fill="#fff" stroke="#000" stroke-width="1.2"/><path d="M19.7 12L23.3 15.6M23.3 12L19.7 15.6" stroke="#000" stroke-width="0.8"/></svg>
<div style="position:absolute;left:480px;top:200px;width:29px;height:26px;background:#C0C0C0;box-shadow:inset 1px 1px #fff, inset -1px -1px #000;"></div>
<svg style="position:absolute;left:484px;top:204px" width="21" height="20"><rect x="0" y="0" width="21" height="20" fill="#fff"/><rect x="0" y="5" width="21" height="5" fill="#808080"/><rect x="0" y="15" width="21" height="5" fill="#808080"/><path d="M15 3.5V7M15 6C13.5 3.5 9 3 7.5 5C6 7.5 8.5 9 11 9.8C14 10.6 16 12 15 15C13.5 17.8 8.5 17.5 6.5 14.8M6.5 13V17" fill="none" stroke="#0000FF" stroke-width="2"/></svg>
<div style="position:absolute;left:509px;top:200px;width:30px;height:26px;background:#C0C0C0;box-shadow:inset 1px 1px #fff, inset -1px -1px #000;"></div>
<svg style="position:absolute;left:513px;top:204px" width="21" height="20"><rect x="0" y="0" width="21" height="20" fill="#fff"/><rect x="0" y="0" width="5" height="20" fill="#808080"/><rect x="11" y="0" width="5" height="20" fill="#808080"/><path d="M5 4H12.5C17 4 17 11 12.5 11H8M8 4V16.5M5 16.5H13" fill="none" stroke="#0000FF" stroke-width="2"/></svg>
<div style="position:absolute;left:583px;top:201px;width:64px;height:24px;background:#C0C0C0;box-shadow:inset 1px 1px #fff, inset -1px -1px #000;"><div class="t" style="left:0;width:64px;text-align:center;top:6px">Reklamace</div></div>
<div style="position:absolute;left:651px;top:201px;width:48px;height:24px;background:#C0C0C0;box-shadow:inset 1px 1px #fff, inset -1px -1px #000;"><div class="t" style="left:0;width:48px;text-align:center;top:6px">Faktury</div></div>
<div style="position:absolute;left:85px;top:230px;width:32px;height:19px;background:#ECE9D8;box-shadow:inset 1px 1px #fff, inset -1px -1px #716F64, inset -2px -2px #ACA899;"><div class="t" style="left:0;width:32px;text-align:center;top:3px">Suma</div></div>
<div class="t" style="left:133px;top:235px;">Dodávky</div>
<div style="position:absolute;left:179px;top:230px;width:64px;height:19px;background:#fff;box-shadow:inset 1px 1px #ACA899, inset 2px 2px #716F64, inset -1px -1px #fff, inset -2px -2px #F1EFE2;"></div>
<div class="t" style="left:256px;top:235px;">Remitenda</div>
<div style="position:absolute;left:310px;top:230px;width:63px;height:19px;background:#fff;box-shadow:inset 1px 1px #ACA899, inset 2px 2px #716F64, inset -1px -1px #fff, inset -2px -2px #F1EFE2;"></div>
<div class="t" style="left:387px;top:235px;">Prodej</div>
<div style="position:absolute;left:421px;top:230px;width:63px;height:19px;background:#fff;box-shadow:inset 1px 1px #ACA899, inset 2px 2px #716F64, inset -1px -1px #fff, inset -2px -2px #F1EFE2;"></div>
<div style="position:absolute;left:78px;top:254px;width:687px;height:294px;overflow:hidden;background:#fff">
<div style="position:absolute;left:0px;top:0px;width:687px;height:18px;background:#ECE9D8;box-shadow:inset 0 1px #fff, inset 0 -1px #ACA899, inset 0 -2px #D8D4C4;"></div>
<div style="position:absolute;left:19px;top:1px;width:1px;height:15px;background:#ACA899;"></div>
<div style="position:absolute;left:20px;top:1px;width:1px;height:15px;background:#fff;"></div>
<div style="position:absolute;left:56px;top:1px;width:1px;height:15px;background:#ACA899;"></div>
<div style="position:absolute;left:57px;top:1px;width:1px;height:15px;background:#fff;"></div>
<div style="position:absolute;left:200px;top:1px;width:1px;height:15px;background:#ACA899;"></div>
<div style="position:absolute;left:201px;top:1px;width:1px;height:15px;background:#fff;"></div>
<div style="position:absolute;left:281px;top:1px;width:1px;height:15px;background:#ACA899;"></div>
<div style="position:absolute;left:282px;top:1px;width:1px;height:15px;background:#fff;"></div>
<div style="position:absolute;left:318px;top:1px;width:1px;height:15px;background:#ACA899;"></div>
<div style="position:absolute;left:319px;top:1px;width:1px;height:15px;background:#fff;"></div>
<div style="position:absolute;left:352px;top:1px;width:1px;height:15px;background:#ACA899;"></div>
<div style="position:absolute;left:353px;top:1px;width:1px;height:15px;background:#fff;"></div>
<div style="position:absolute;left:412px;top:1px;width:1px;height:15px;background:#ACA899;"></div>
<div style="position:absolute;left:413px;top:1px;width:1px;height:15px;background:#fff;"></div>
<div style="position:absolute;left:466px;top:1px;width:1px;height:15px;background:#ACA899;"></div>
<div style="position:absolute;left:467px;top:1px;width:1px;height:15px;background:#fff;"></div>
<div style="position:absolute;left:526px;top:1px;width:1px;height:15px;background:#ACA899;"></div>
<div style="position:absolute;left:527px;top:1px;width:1px;height:15px;background:#fff;"></div>
<div style="position:absolute;left:544px;top:1px;width:1px;height:15px;background:#ACA899;"></div>
<div style="position:absolute;left:545px;top:1px;width:1px;height:15px;background:#fff;"></div>
<div style="position:absolute;left:607px;top:1px;width:1px;height:15px;background:#ACA899;"></div>
<div style="position:absolute;left:608px;top:1px;width:1px;height:15px;background:#fff;"></div>
<div style="position:absolute;left:657px;top:1px;width:1px;height:15px;background:#ACA899;"></div>
<div style="position:absolute;left:658px;top:1px;width:1px;height:15px;background:#fff;"></div>
<div style="position:absolute;left:19px;top:2px;width:37px;height:13px;"><div class="t" style="left:0;top:0;width:37px;text-align:center">Id odb</div></div>
<div style="position:absolute;left:56px;top:2px;width:144px;height:13px;"><div class="t" style="left:0;top:0;width:144px;text-align:center">Odběratel</div></div>
<div style="position:absolute;left:200px;top:2px;width:81px;height:13px;"><div class="t" style="left:0;top:0;width:81px;text-align:center">Ulice</div></div>
<div style="position:absolute;left:281px;top:2px;width:37px;height:13px;"><div class="t" style="left:0;top:0;width:37px;text-align:center">Id pla</div></div>
<div style="position:absolute;left:318px;top:2px;width:34px;height:13px;"><div class="t" style="left:0;top:0;width:34px;text-align:center">Kat.č.</div></div>
<div style="position:absolute;left:352px;top:2px;width:60px;height:13px;"><div class="t" style="left:0;top:0;width:60px;text-align:center">Titul</div></div>
<div style="position:absolute;left:412px;top:2px;width:54px;height:13px;"><div class="t" style="left:0;top:0;width:54px;text-align:center">Vydání</div></div>
<div style="position:absolute;left:466px;top:2px;width:60px;height:13px;"><div class="t" style="left:0;top:0;width:60px;text-align:center">Dodáno</div></div>
<div style="position:absolute;left:526px;top:2px;width:18px;height:13px;"><div class="t" style="left:0;top:0;width:18px;text-align:center">D</div></div>
<div style="position:absolute;left:544px;top:2px;width:63px;height:13px;"><div class="t" style="left:0;top:0;width:63px;text-align:center">Remitováno</div></div>
<div style="position:absolute;left:607px;top:2px;width:50px;height:13px;"><div class="t" style="left:0;top:0;width:50px;text-align:center">% Rem.</div></div>
<div style="position:absolute;left:657px;top:2px;width:40px;height:13px;"><div class="t" style="left:0;top:0;width:40px;text-align:center">Rekl.</div></div>
<div style="position:absolute;left:0px;top:18px;width:19px;height:17px;background:conic-gradient(#000 25%,#34343C 0) 0 0/2px 2px;box-shadow:inset 0 0 0 1px #000;"></div>
<div style="position:absolute;left:20px;top:18px;width:667px;height:17px;background:#000;"></div>
<div style="position:absolute;left:0px;top:35px;width:19px;height:1px;background:#ACA899;"></div>
<div style="position:absolute;left:19px;top:18px;width:1px;height:18px;background:#ACA899;"></div>
<div style="position:absolute;left:20px;top:35px;width:667px;height:1px;background:repeating-linear-gradient(90deg,#000 0 1px,#fff 1px 2px);"></div>
<div style="position:absolute;left:56px;top:18px;width:1px;height:18px;background:repeating-linear-gradient(180deg,#000 0 1px,#fff 1px 2px);"></div>
<div style="position:absolute;left:200px;top:18px;width:1px;height:18px;background:repeating-linear-gradient(180deg,#000 0 1px,#fff 1px 2px);"></div>
<div style="position:absolute;left:281px;top:18px;width:1px;height:18px;background:repeating-linear-gradient(180deg,#000 0 1px,#fff 1px 2px);"></div>
<div style="position:absolute;left:318px;top:18px;width:1px;height:18px;background:repeating-linear-gradient(180deg,#000 0 1px,#fff 1px 2px);"></div>
<div style="position:absolute;left:352px;top:18px;width:1px;height:18px;background:repeating-linear-gradient(180deg,#000 0 1px,#fff 1px 2px);"></div>
<div style="position:absolute;left:412px;top:18px;width:1px;height:18px;background:repeating-linear-gradient(180deg,#000 0 1px,#fff 1px 2px);"></div>
<div style="position:absolute;left:466px;top:18px;width:1px;height:18px;background:repeating-linear-gradient(180deg,#000 0 1px,#fff 1px 2px);"></div>
<div style="position:absolute;left:526px;top:18px;width:1px;height:18px;background:repeating-linear-gradient(180deg,#000 0 1px,#fff 1px 2px);"></div>
<div style="position:absolute;left:544px;top:18px;width:1px;height:18px;background:repeating-linear-gradient(180deg,#000 0 1px,#fff 1px 2px);"></div>
<div style="position:absolute;left:607px;top:18px;width:1px;height:18px;background:repeating-linear-gradient(180deg,#000 0 1px,#fff 1px 2px);"></div>
<div style="position:absolute;left:657px;top:18px;width:1px;height:18px;background:repeating-linear-gradient(180deg,#000 0 1px,#fff 1px 2px);"></div>
<div style="position:absolute;left:23px;top:21px;width:200px;height:13px;"><div class="t" style="left:0;top:0;color:#fff">12</div></div>
<svg style="position:absolute;left:60px;top:22px" width="141" height="9"><use href="#odb_d"/></svg>
<div style="position:absolute;left:285px;top:21px;width:200px;height:13px;"><div class="t" style="left:0;top:0;color:#fff">1014</div></div>
<div style="position:absolute;left:322px;top:21px;width:200px;height:13px;"><div class="t" style="left:0;top:0;color:#fff">957</div></div>
<svg style="position:absolute;left:357px;top:22px" width="12" height="9"><use href="#tit_d"/></svg>
<div style="position:absolute;left:373px;top:21px;width:40px;height:13px;"><div class="t" style="left:0;top:0;color:#fff">ST</div></div>
<div style="position:absolute;left:416px;top:21px;width:200px;height:13px;"><div class="t" style="left:0;top:0;color:#fff">20050525</div></div>
<svg style="position:absolute;left:471px;top:22px" width="18" height="9"><use href="#dod_d"/></svg>
<div style="position:absolute;left:529px;top:21px;width:12px;height:12px;background:#000;box-shadow:inset 1px 1px #808080, inset 2px 2px #404040, inset -1px -1px #202020;"></div>
<div style="position:absolute;left:661px;top:21px;width:200px;height:13px;"><div class="t" style="left:0;top:0;color:#fff">0</div></div>
<div style="position:absolute;left:0px;top:36px;width:19px;height:17px;background:#ECE9D8;box-shadow:inset 0 1px #fff;"></div>
<div style="position:absolute;left:0px;top:53px;width:19px;height:1px;background:#ACA899;"></div>
<div style="position:absolute;left:19px;top:36px;width:1px;height:18px;background:#ACA899;"></div>
<div style="position:absolute;left:20px;top:53px;width:667px;height:1px;background:repeating-linear-gradient(90deg,#000 0 1px,#fff 1px 2px);"></div>
<div style="position:absolute;left:56px;top:36px;width:1px;height:18px;background:repeating-linear-gradient(180deg,#000 0 1px,#fff 1px 2px);"></div>
<div style="position:absolute;left:200px;top:36px;width:1px;height:18px;background:repeating-linear-gradient(180deg,#000 0 1px,#fff 1px 2px);"></div>
<div style="position:absolute;left:281px;top:36px;width:1px;height:18px;background:repeating-linear-gradient(180deg,#000 0 1px,#fff 1px 2px);"></div>
<div style="position:absolute;left:318px;top:36px;width:1px;height:18px;background:repeating-linear-gradient(180deg,#000 0 1px,#fff 1px 2px);"></div>
<div style="position:absolute;left:352px;top:36px;width:1px;height:18px;background:repeating-linear-gradient(180deg,#000 0 1px,#fff 1px 2px);"></div>
<div style="position:absolute;left:412px;top:36px;width:1px;height:18px;background:repeating-linear-gradient(180deg,#000 0 1px,#fff 1px 2px);"></div>
<div style="position:absolute;left:466px;top:36px;width:1px;height:18px;background:repeating-linear-gradient(180deg,#000 0 1px,#fff 1px 2px);"></div>
<div style="position:absolute;left:526px;top:36px;width:1px;height:18px;background:repeating-linear-gradient(180deg,#000 0 1px,#fff 1px 2px);"></div>
<div style="position:absolute;left:544px;top:36px;width:1px;height:18px;background:repeating-linear-gradient(180deg,#000 0 1px,#fff 1px 2px);"></div>
<div style="position:absolute;left:607px;top:36px;width:1px;height:18px;background:repeating-linear-gradient(180deg,#000 0 1px,#fff 1px 2px);"></div>
<div style="position:absolute;left:657px;top:36px;width:1px;height:18px;background:repeating-linear-gradient(180deg,#000 0 1px,#fff 1px 2px);"></div>
<div style="position:absolute;left:23px;top:39px;width:200px;height:13px;"><div class="t" style="left:0;top:0;color:#000">12</div></div>
<svg style="position:absolute;left:60px;top:40px" width="141" height="9"><use href="#odb_l"/></svg>
<div style="position:absolute;left:285px;top:39px;width:200px;height:13px;"><div class="t" style="left:0;top:0;color:#000">1014</div></div>
<div style="position:absolute;left:322px;top:39px;width:200px;height:13px;"><div class="t" style="left:0;top:0;color:#000">975</div></div>
<svg style="position:absolute;left:357px;top:40px" width="12" height="9"><use href="#tit_l"/></svg>
<div style="position:absolute;left:373px;top:39px;width:40px;height:13px;"><div class="t" style="left:0;top:0;color:#000">PA</div></div>
<div style="position:absolute;left:416px;top:39px;width:200px;height:13px;"><div class="t" style="left:0;top:0;color:#000">20050513</div></div>
<svg style="position:absolute;left:471px;top:40px" width="18" height="9"><use href="#dod_l"/></svg>
<div style="position:absolute;left:529px;top:39px;width:12px;height:12px;background:#fff;box-shadow:inset 1px 1px #ACA899, inset 2px 2px #716F64, inset -1px -1px #fff, inset -2px -2px #F1EFE2;"><svg width="12" height="12" style="position:absolute;left:0;top:0"><path d="M3.5 5L5.5 7.5L9.5 2.5" fill="none" stroke="#000" stroke-width="2.2"/></svg></div>
<div style="position:absolute;left:661px;top:39px;width:200px;height:13px;"><div class="t" style="left:0;top:0;color:#000">0</div></div>
<div style="position:absolute;left:0px;top:54px;width:19px;height:17px;background:#ECE9D8;box-shadow:inset 0 1px #fff;"></div>
<div style="position:absolute;left:0px;top:71px;width:19px;height:1px;background:#ACA899;"></div>
<div style="position:absolute;left:19px;top:54px;width:1px;height:18px;background:#ACA899;"></div>
<div style="position:absolute;left:20px;top:71px;width:667px;height:1px;background:repeating-linear-gradient(90deg,#000 0 1px,#fff 1px 2px);"></div>
<div style="position:absolute;left:56px;top:54px;width:1px;height:18px;background:repeating-linear-gradient(180deg,#000 0 1px,#fff 1px 2px);"></div>
<div style="position:absolute;left:200px;top:54px;width:1px;height:18px;background:repeating-linear-gradient(180deg,#000 0 1px,#fff 1px 2px);"></div>
<div style="position:absolute;left:281px;top:54px;width:1px;height:18px;background:repeating-linear-gradient(180deg,#000 0 1px,#fff 1px 2px);"></div>
<div style="position:absolute;left:318px;top:54px;width:1px;height:18px;background:repeating-linear-gradient(180deg,#000 0 1px,#fff 1px 2px);"></div>
<div style="position:absolute;left:352px;top:54px;width:1px;height:18px;background:repeating-linear-gradient(180deg,#000 0 1px,#fff 1px 2px);"></div>
<div style="position:absolute;left:412px;top:54px;width:1px;height:18px;background:repeating-linear-gradient(180deg,#000 0 1px,#fff 1px 2px);"></div>
<div style="position:absolute;left:466px;top:54px;width:1px;height:18px;background:repeating-linear-gradient(180deg,#000 0 1px,#fff 1px 2px);"></div>
<div style="position:absolute;left:526px;top:54px;width:1px;height:18px;background:repeating-linear-gradient(180deg,#000 0 1px,#fff 1px 2px);"></div>
<div style="position:absolute;left:544px;top:54px;width:1px;height:18px;background:repeating-linear-gradient(180deg,#000 0 1px,#fff 1px 2px);"></div>
<div style="position:absolute;left:607px;top:54px;width:1px;height:18px;background:repeating-linear-gradient(180deg,#000 0 1px,#fff 1px 2px);"></div>
<div style="position:absolute;left:657px;top:54px;width:1px;height:18px;background:repeating-linear-gradient(180deg,#000 0 1px,#fff 1px 2px);"></div>
<div style="position:absolute;left:23px;top:57px;width:200px;height:13px;"><div class="t" style="left:0;top:0;color:#000">12</div></div>
<svg style="position:absolute;left:60px;top:58px" width="141" height="9"><use href="#odb_l"/></svg>
<div style="position:absolute;left:285px;top:57px;width:200px;height:13px;"><div class="t" style="left:0;top:0;color:#000">1014</div></div>
<div style="position:absolute;left:322px;top:57px;width:200px;height:13px;"><div class="t" style="left:0;top:0;color:#000">966</div></div>
<svg style="position:absolute;left:357px;top:58px" width="12" height="9"><use href="#tit_l"/></svg>
<div style="position:absolute;left:373px;top:57px;width:40px;height:13px;"><div class="t" style="left:0;top:0;color:#000">CT</div></div>
<div style="position:absolute;left:416px;top:57px;width:200px;height:13px;"><div class="t" style="left:0;top:0;color:#000">20050512</div></div>
<svg style="position:absolute;left:471px;top:58px" width="18" height="9"><use href="#dod_l"/></svg>
<div style="position:absolute;left:529px;top:57px;width:12px;height:12px;background:#fff;box-shadow:inset 1px 1px #ACA899, inset 2px 2px #716F64, inset -1px -1px #fff, inset -2px -2px #F1EFE2;"><svg width="12" height="12" style="position:absolute;left:0;top:0"><path d="M3.5 5L5.5 7.5L9.5 2.5" fill="none" stroke="#000" stroke-width="2.2"/></svg></div>
<div style="position:absolute;left:661px;top:57px;width:200px;height:13px;"><div class="t" style="left:0;top:0;color:#000">0</div></div>
<div style="position:absolute;left:0px;top:72px;width:19px;height:17px;background:#ECE9D8;box-shadow:inset 0 1px #fff;"></div>
<div style="position:absolute;left:0px;top:89px;width:19px;height:1px;background:#ACA899;"></div>
<div style="position:absolute;left:19px;top:72px;width:1px;height:18px;background:#ACA899;"></div>
<div style="position:absolute;left:20px;top:89px;width:667px;height:1px;background:repeating-linear-gradient(90deg,#000 0 1px,#fff 1px 2px);"></div>
<div style="position:absolute;left:56px;top:72px;width:1px;height:18px;background:repeating-linear-gradient(180deg,#000 0 1px,#fff 1px 2px);"></div>
<div style="position:absolute;left:200px;top:72px;width:1px;height:18px;background:repeating-linear-gradient(180deg,#000 0 1px,#fff 1px 2px);"></div>
<div style="position:absolute;left:281px;top:72px;width:1px;height:18px;background:repeating-linear-gradient(180deg,#000 0 1px,#fff 1px 2px);"></div>
<div style="position:absolute;left:318px;top:72px;width:1px;height:18px;background:repeating-linear-gradient(180deg,#000 0 1px,#fff 1px 2px);"></div>
<div style="position:absolute;left:352px;top:72px;width:1px;height:18px;background:repeating-linear-gradient(180deg,#000 0 1px,#fff 1px 2px);"></div>
<div style="position:absolute;left:412px;top:72px;width:1px;height:18px;background:repeating-linear-gradient(180deg,#000 0 1px,#fff 1px 2px);"></div>
<div style="position:absolute;left:466px;top:72px;width:1px;height:18px;background:repeating-linear-gradient(180deg,#000 0 1px,#fff 1px 2px);"></div>
<div style="position:absolute;left:526px;top:72px;width:1px;height:18px;background:repeating-linear-gradient(180deg,#000 0 1px,#fff 1px 2px);"></div>
<div style="position:absolute;left:544px;top:72px;width:1px;height:18px;background:repeating-linear-gradient(180deg,#000 0 1px,#fff 1px 2px);"></div>
<div style="position:absolute;left:607px;top:72px;width:1px;height:18px;background:repeating-linear-gradient(180deg,#000 0 1px,#fff 1px 2px);"></div>
<div style="position:absolute;left:657px;top:72px;width:1px;height:18px;background:repeating-linear-gradient(180deg,#000 0 1px,#fff 1px 2px);"></div>
<div style="position:absolute;left:23px;top:75px;width:200px;height:13px;"><div class="t" style="left:0;top:0;color:#000">12</div></div>
<svg style="position:absolute;left:60px;top:76px" width="141" height="9"><use href="#odb_l"/></svg>
<div style="position:absolute;left:285px;top:75px;width:200px;height:13px;"><div class="t" style="left:0;top:0;color:#000">1014</div></div>
<div style="position:absolute;left:322px;top:75px;width:200px;height:13px;"><div class="t" style="left:0;top:0;color:#000">957</div></div>
<svg style="position:absolute;left:357px;top:76px" width="12" height="9"><use href="#tit_l"/></svg>
<div style="position:absolute;left:373px;top:75px;width:40px;height:13px;"><div class="t" style="left:0;top:0;color:#000">ST</div></div>
<div style="position:absolute;left:416px;top:75px;width:200px;height:13px;"><div class="t" style="left:0;top:0;color:#000">20050511</div></div>
<svg style="position:absolute;left:471px;top:76px" width="18" height="9"><use href="#dod_l"/></svg>
<div style="position:absolute;left:529px;top:75px;width:12px;height:12px;background:#fff;box-shadow:inset 1px 1px #ACA899, inset 2px 2px #716F64, inset -1px -1px #fff, inset -2px -2px #F1EFE2;"><svg width="12" height="12" style="position:absolute;left:0;top:0"><path d="M3.5 5L5.5 7.5L9.5 2.5" fill="none" stroke="#000" stroke-width="2.2"/></svg></div>
<div style="position:absolute;left:661px;top:75px;width:200px;height:13px;"><div class="t" style="left:0;top:0;color:#000">0</div></div>
<div style="position:absolute;left:0px;top:90px;width:19px;height:17px;background:#ECE9D8;box-shadow:inset 0 1px #fff;"></div>
<div style="position:absolute;left:0px;top:107px;width:19px;height:1px;background:#ACA899;"></div>
<div style="position:absolute;left:19px;top:90px;width:1px;height:18px;background:#ACA899;"></div>
<div style="position:absolute;left:20px;top:107px;width:667px;height:1px;background:repeating-linear-gradient(90deg,#000 0 1px,#fff 1px 2px);"></div>
<div style="position:absolute;left:56px;top:90px;width:1px;height:18px;background:repeating-linear-gradient(180deg,#000 0 1px,#fff 1px 2px);"></div>
<div style="position:absolute;left:200px;top:90px;width:1px;height:18px;background:repeating-linear-gradient(180deg,#000 0 1px,#fff 1px 2px);"></div>
<div style="position:absolute;left:281px;top:90px;width:1px;height:18px;background:repeating-linear-gradient(180deg,#000 0 1px,#fff 1px 2px);"></div>
<div style="position:absolute;left:318px;top:90px;width:1px;height:18px;background:repeating-linear-gradient(180deg,#000 0 1px,#fff 1px 2px);"></div>
<div style="position:absolute;left:352px;top:90px;width:1px;height:18px;background:repeating-linear-gradient(180deg,#000 0 1px,#fff 1px 2px);"></div>
<div style="position:absolute;left:412px;top:90px;width:1px;height:18px;background:repeating-linear-gradient(180deg,#000 0 1px,#fff 1px 2px);"></div>
<div style="position:absolute;left:466px;top:90px;width:1px;height:18px;background:repeating-linear-gradient(180deg,#000 0 1px,#fff 1px 2px);"></div>
<div style="position:absolute;left:526px;top:90px;width:1px;height:18px;background:repeating-linear-gradient(180deg,#000 0 1px,#fff 1px 2px);"></div>
<div style="position:absolute;left:544px;top:90px;width:1px;height:18px;background:repeating-linear-gradient(180deg,#000 0 1px,#fff 1px 2px);"></div>
<div style="position:absolute;left:607px;top:90px;width:1px;height:18px;background:repeating-linear-gradient(180deg,#000 0 1px,#fff 1px 2px);"></div>
<div style="position:absolute;left:657px;top:90px;width:1px;height:18px;background:repeating-linear-gradient(180deg,#000 0 1px,#fff 1px 2px);"></div>
<div style="position:absolute;left:23px;top:93px;width:200px;height:13px;"><div class="t" style="left:0;top:0;color:#000">12</div></div>
<svg style="position:absolute;left:60px;top:94px" width="141" height="9"><use href="#odb_l"/></svg>
<div style="position:absolute;left:285px;top:93px;width:200px;height:13px;"><div class="t" style="left:0;top:0;color:#000">1014</div></div>
<div style="position:absolute;left:322px;top:93px;width:200px;height:13px;"><div class="t" style="left:0;top:0;color:#000">948</div></div>
<svg style="position:absolute;left:357px;top:94px" width="12" height="9"><use href="#tit_l"/></svg>
<div style="position:absolute;left:373px;top:93px;width:40px;height:13px;"><div class="t" style="left:0;top:0;color:#000">UT</div></div>
<div style="position:absolute;left:416px;top:93px;width:200px;height:13px;"><div class="t" style="left:0;top:0;color:#000">20050510</div></div>
<svg style="position:absolute;left:471px;top:94px" width="18" height="9"><use href="#dod_l"/></svg>
<div style="position:absolute;left:529px;top:93px;width:12px;height:12px;background:#fff;box-shadow:inset 1px 1px #ACA899, inset 2px 2px #716F64, inset -1px -1px #fff, inset -2px -2px #F1EFE2;"><svg width="12" height="12" style="position:absolute;left:0;top:0"><path d="M3.5 5L5.5 7.5L9.5 2.5" fill="none" stroke="#000" stroke-width="2.2"/></svg></div>
<div style="position:absolute;left:661px;top:93px;width:200px;height:13px;"><div class="t" style="left:0;top:0;color:#000">0</div></div>
<div style="position:absolute;left:0px;top:108px;width:19px;height:17px;background:#ECE9D8;box-shadow:inset 0 1px #fff;"></div>
<div style="position:absolute;left:0px;top:125px;width:19px;height:1px;background:#ACA899;"></div>
<div style="position:absolute;left:19px;top:108px;width:1px;height:18px;background:#ACA899;"></div>
<div style="position:absolute;left:20px;top:125px;width:667px;height:1px;background:repeating-linear-gradient(90deg,#000 0 1px,#fff 1px 2px);"></div>
<div style="position:absolute;left:56px;top:108px;width:1px;height:18px;background:repeating-linear-gradient(180deg,#000 0 1px,#fff 1px 2px);"></div>
<div style="position:absolute;left:200px;top:108px;width:1px;height:18px;background:repeating-linear-gradient(180deg,#000 0 1px,#fff 1px 2px);"></div>
<div style="position:absolute;left:281px;top:108px;width:1px;height:18px;background:repeating-linear-gradient(180deg,#000 0 1px,#fff 1px 2px);"></div>
<div style="position:absolute;left:318px;top:108px;width:1px;height:18px;background:repeating-linear-gradient(180deg,#000 0 1px,#fff 1px 2px);"></div>
<div style="position:absolute;left:352px;top:108px;width:1px;height:18px;background:repeating-linear-gradient(180deg,#000 0 1px,#fff 1px 2px);"></div>
<div style="position:absolute;left:412px;top:108px;width:1px;height:18px;background:repeating-linear-gradient(180deg,#000 0 1px,#fff 1px 2px);"></div>
<div style="position:absolute;left:466px;top:108px;width:1px;height:18px;background:repeating-linear-gradient(180deg,#000 0 1px,#fff 1px 2px);"></div>
<div style="position:absolute;left:526px;top:108px;width:1px;height:18px;background:repeating-linear-gradient(180deg,#000 0 1px,#fff 1px 2px);"></div>
<div style="position:absolute;left:544px;top:108px;width:1px;height:18px;background:repeating-linear-gradient(180deg,#000 0 1px,#fff 1px 2px);"></div>
<div style="position:absolute;left:607px;top:108px;width:1px;height:18px;background:repeating-linear-gradient(180deg,#000 0 1px,#fff 1px 2px);"></div>
<div style="position:absolute;left:657px;top:108px;width:1px;height:18px;background:repeating-linear-gradient(180deg,#000 0 1px,#fff 1px 2px);"></div>
<div style="position:absolute;left:23px;top:111px;width:200px;height:13px;"><div class="t" style="left:0;top:0;color:#000">12</div></div>
<svg style="position:absolute;left:60px;top:112px" width="141" height="9"><use href="#odb_l"/></svg>
<div style="position:absolute;left:285px;top:111px;width:200px;height:13px;"><div class="t" style="left:0;top:0;color:#000">1014</div></div>
<div style="position:absolute;left:322px;top:111px;width:200px;height:13px;"><div class="t" style="left:0;top:0;color:#000">939</div></div>
<svg style="position:absolute;left:357px;top:112px" width="12" height="9"><use href="#tit_l"/></svg>
<div style="position:absolute;left:373px;top:111px;width:40px;height:13px;"><div class="t" style="left:0;top:0;color:#000">PO</div></div>
<div style="position:absolute;left:416px;top:111px;width:200px;height:13px;"><div class="t" style="left:0;top:0;color:#000">20050509</div></div>
<svg style="position:absolute;left:471px;top:112px" width="18" height="9"><use href="#dod_l"/></svg>
<div style="position:absolute;left:529px;top:111px;width:12px;height:12px;background:#fff;box-shadow:inset 1px 1px #ACA899, inset 2px 2px #716F64, inset -1px -1px #fff, inset -2px -2px #F1EFE2;"><svg width="12" height="12" style="position:absolute;left:0;top:0"><path d="M3.5 5L5.5 7.5L9.5 2.5" fill="none" stroke="#000" stroke-width="2.2"/></svg></div>
<div style="position:absolute;left:661px;top:111px;width:200px;height:13px;"><div class="t" style="left:0;top:0;color:#000">0</div></div>
<div style="position:absolute;left:0px;top:126px;width:19px;height:17px;background:#ECE9D8;box-shadow:inset 0 1px #fff;"></div>
<div style="position:absolute;left:0px;top:143px;width:19px;height:1px;background:#ACA899;"></div>
<div style="position:absolute;left:19px;top:126px;width:1px;height:18px;background:#ACA899;"></div>
<div style="position:absolute;left:20px;top:143px;width:667px;height:1px;background:repeating-linear-gradient(90deg,#000 0 1px,#fff 1px 2px);"></div>
<div style="position:absolute;left:56px;top:126px;width:1px;height:18px;background:repeating-linear-gradient(180deg,#000 0 1px,#fff 1px 2px);"></div>
<div style="position:absolute;left:200px;top:126px;width:1px;height:18px;background:repeating-linear-gradient(180deg,#000 0 1px,#fff 1px 2px);"></div>
<div style="position:absolute;left:281px;top:126px;width:1px;height:18px;background:repeating-linear-gradient(180deg,#000 0 1px,#fff 1px 2px);"></div>
<div style="position:absolute;left:318px;top:126px;width:1px;height:18px;background:repeating-linear-gradient(180deg,#000 0 1px,#fff 1px 2px);"></div>
<div style="position:absolute;left:352px;top:126px;width:1px;height:18px;background:repeating-linear-gradient(180deg,#000 0 1px,#fff 1px 2px);"></div>
<div style="position:absolute;left:412px;top:126px;width:1px;height:18px;background:repeating-linear-gradient(180deg,#000 0 1px,#fff 1px 2px);"></div>
<div style="position:absolute;left:466px;top:126px;width:1px;height:18px;background:repeating-linear-gradient(180deg,#000 0 1px,#fff 1px 2px);"></div>
<div style="position:absolute;left:526px;top:126px;width:1px;height:18px;background:repeating-linear-gradient(180deg,#000 0 1px,#fff 1px 2px);"></div>
<div style="position:absolute;left:544px;top:126px;width:1px;height:18px;background:repeating-linear-gradient(180deg,#000 0 1px,#fff 1px 2px);"></div>
<div style="position:absolute;left:607px;top:126px;width:1px;height:18px;background:repeating-linear-gradient(180deg,#000 0 1px,#fff 1px 2px);"></div>
<div style="position:absolute;left:657px;top:126px;width:1px;height:18px;background:repeating-linear-gradient(180deg,#000 0 1px,#fff 1px 2px);"></div>
<div style="position:absolute;left:23px;top:129px;width:200px;height:13px;"><div class="t" style="left:0;top:0;color:#000">12</div></div>
<svg style="position:absolute;left:60px;top:130px" width="141" height="9"><use href="#odb_l"/></svg>
<div style="position:absolute;left:285px;top:129px;width:200px;height:13px;"><div class="t" style="left:0;top:0;color:#000">1014</div></div>
<div style="position:absolute;left:322px;top:129px;width:200px;height:13px;"><div class="t" style="left:0;top:0;color:#000">975</div></div>
<svg style="position:absolute;left:357px;top:130px" width="12" height="9"><use href="#tit_l"/></svg>
<div style="position:absolute;left:373px;top:129px;width:40px;height:13px;"><div class="t" style="left:0;top:0;color:#000">PA</div></div>
<div style="position:absolute;left:416px;top:129px;width:200px;height:13px;"><div class="t" style="left:0;top:0;color:#000">20050506</div></div>
<svg style="position:absolute;left:471px;top:130px" width="18" height="9"><use href="#dod_l"/></svg>
<div style="position:absolute;left:529px;top:129px;width:12px;height:12px;background:#fff;box-shadow:inset 1px 1px #ACA899, inset 2px 2px #716F64, inset -1px -1px #fff, inset -2px -2px #F1EFE2;"><svg width="12" height="12" style="position:absolute;left:0;top:0"><path d="M3.5 5L5.5 7.5L9.5 2.5" fill="none" stroke="#000" stroke-width="2.2"/></svg></div>
<div style="position:absolute;left:661px;top:129px;width:200px;height:13px;"><div class="t" style="left:0;top:0;color:#000">0</div></div>
<div style="position:absolute;left:0px;top:144px;width:19px;height:17px;background:#ECE9D8;box-shadow:inset 0 1px #fff;"></div>
<div style="position:absolute;left:0px;top:161px;width:19px;height:1px;background:#ACA899;"></div>
<div style="position:absolute;left:19px;top:144px;width:1px;height:18px;background:#ACA899;"></div>
<div style="position:absolute;left:20px;top:161px;width:667px;height:1px;background:repeating-linear-gradient(90deg,#000 0 1px,#fff 1px 2px);"></div>
<div style="position:absolute;left:56px;top:144px;width:1px;height:18px;background:repeating-linear-gradient(180deg,#000 0 1px,#fff 1px 2px);"></div>
<div style="position:absolute;left:200px;top:144px;width:1px;height:18px;background:repeating-linear-gradient(180deg,#000 0 1px,#fff 1px 2px);"></div>
<div style="position:absolute;left:281px;top:144px;width:1px;height:18px;background:repeating-linear-gradient(180deg,#000 0 1px,#fff 1px 2px);"></div>
<div style="position:absolute;left:318px;top:144px;width:1px;height:18px;background:repeating-linear-gradient(180deg,#000 0 1px,#fff 1px 2px);"></div>
<div style="position:absolute;left:352px;top:144px;width:1px;height:18px;background:repeating-linear-gradient(180deg,#000 0 1px,#fff 1px 2px);"></div>
<div style="position:absolute;left:412px;top:144px;width:1px;height:18px;background:repeating-linear-gradient(180deg,#000 0 1px,#fff 1px 2px);"></div>
<div style="position:absolute;left:466px;top:144px;width:1px;height:18px;background:repeating-linear-gradient(180deg,#000 0 1px,#fff 1px 2px);"></div>
<div style="position:absolute;left:526px;top:144px;width:1px;height:18px;background:repeating-linear-gradient(180deg,#000 0 1px,#fff 1px 2px);"></div>
<div style="position:absolute;left:544px;top:144px;width:1px;height:18px;background:repeating-linear-gradient(180deg,#000 0 1px,#fff 1px 2px);"></div>
<div style="position:absolute;left:607px;top:144px;width:1px;height:18px;background:repeating-linear-gradient(180deg,#000 0 1px,#fff 1px 2px);"></div>
<div style="position:absolute;left:657px;top:144px;width:1px;height:18px;background:repeating-linear-gradient(180deg,#000 0 1px,#fff 1px 2px);"></div>
<div style="position:absolute;left:23px;top:147px;width:200px;height:13px;"><div class="t" style="left:0;top:0;color:#000">12</div></div>
<svg style="position:absolute;left:60px;top:148px" width="141" height="9"><use href="#odb_l"/></svg>
<div style="position:absolute;left:285px;top:147px;width:200px;height:13px;"><div class="t" style="left:0;top:0;color:#000">1014</div></div>
<div style="position:absolute;left:322px;top:147px;width:200px;height:13px;"><div class="t" style="left:0;top:0;color:#000">966</div></div>
<svg style="position:absolute;left:357px;top:148px" width="12" height="9"><use href="#tit_l"/></svg>
<div style="position:absolute;left:373px;top:147px;width:40px;height:13px;"><div class="t" style="left:0;top:0;color:#000">CT</div></div>
<div style="position:absolute;left:416px;top:147px;width:200px;height:13px;"><div class="t" style="left:0;top:0;color:#000">20050505</div></div>
<svg style="position:absolute;left:471px;top:148px" width="18" height="9"><use href="#dod_l"/></svg>
<div style="position:absolute;left:529px;top:147px;width:12px;height:12px;background:#fff;box-shadow:inset 1px 1px #ACA899, inset 2px 2px #716F64, inset -1px -1px #fff, inset -2px -2px #F1EFE2;"><svg width="12" height="12" style="position:absolute;left:0;top:0"><path d="M3.5 5L5.5 7.5L9.5 2.5" fill="none" stroke="#000" stroke-width="2.2"/></svg></div>
<div style="position:absolute;left:661px;top:147px;width:200px;height:13px;"><div class="t" style="left:0;top:0;color:#000">0</div></div>
<div style="position:absolute;left:0px;top:162px;width:19px;height:17px;background:#ECE9D8;box-shadow:inset 0 1px #fff;"></div>
<div style="position:absolute;left:0px;top:179px;width:19px;height:1px;background:#ACA899;"></div>
<div style="position:absolute;left:19px;top:162px;width:1px;height:18px;background:#ACA899;"></div>
<div style="position:absolute;left:20px;top:179px;width:667px;height:1px;background:repeating-linear-gradient(90deg,#000 0 1px,#fff 1px 2px);"></div>
<div style="position:absolute;left:56px;top:162px;width:1px;height:18px;background:repeating-linear-gradient(180deg,#000 0 1px,#fff 1px 2px);"></div>
<div style="position:absolute;left:200px;top:162px;width:1px;height:18px;background:repeating-linear-gradient(180deg,#000 0 1px,#fff 1px 2px);"></div>
<div style="position:absolute;left:281px;top:162px;width:1px;height:18px;background:repeating-linear-gradient(180deg,#000 0 1px,#fff 1px 2px);"></div>
<div style="position:absolute;left:318px;top:162px;width:1px;height:18px;background:repeating-linear-gradient(180deg,#000 0 1px,#fff 1px 2px);"></div>
<div style="position:absolute;left:352px;top:162px;width:1px;height:18px;background:repeating-linear-gradient(180deg,#000 0 1px,#fff 1px 2px);"></div>
<div style="position:absolute;left:412px;top:162px;width:1px;height:18px;background:repeating-linear-gradient(180deg,#000 0 1px,#fff 1px 2px);"></div>
<div style="position:absolute;left:466px;top:162px;width:1px;height:18px;background:repeating-linear-gradient(180deg,#000 0 1px,#fff 1px 2px);"></div>
<div style="position:absolute;left:526px;top:162px;width:1px;height:18px;background:repeating-linear-gradient(180deg,#000 0 1px,#fff 1px 2px);"></div>
<div style="position:absolute;left:544px;top:162px;width:1px;height:18px;background:repeating-linear-gradient(180deg,#000 0 1px,#fff 1px 2px);"></div>
<div style="position:absolute;left:607px;top:162px;width:1px;height:18px;background:repeating-linear-gradient(180deg,#000 0 1px,#fff 1px 2px);"></div>
<div style="position:absolute;left:657px;top:162px;width:1px;height:18px;background:repeating-linear-gradient(180deg,#000 0 1px,#fff 1px 2px);"></div>
<div style="position:absolute;left:23px;top:165px;width:200px;height:13px;"><div class="t" style="left:0;top:0;color:#000">12</div></div>
<svg style="position:absolute;left:60px;top:166px" width="141" height="9"><use href="#odb_l"/></svg>
<div style="position:absolute;left:285px;top:165px;width:200px;height:13px;"><div class="t" style="left:0;top:0;color:#000">1014</div></div>
<div style="position:absolute;left:322px;top:165px;width:200px;height:13px;"><div class="t" style="left:0;top:0;color:#000">957</div></div>
<svg style="position:absolute;left:357px;top:166px" width="12" height="9"><use href="#tit_l"/></svg>
<div style="position:absolute;left:373px;top:165px;width:40px;height:13px;"><div class="t" style="left:0;top:0;color:#000">ST</div></div>
<div style="position:absolute;left:416px;top:165px;width:200px;height:13px;"><div class="t" style="left:0;top:0;color:#000">20050504</div></div>
<svg style="position:absolute;left:471px;top:166px" width="18" height="9"><use href="#dod_l"/></svg>
<div style="position:absolute;left:529px;top:165px;width:12px;height:12px;background:#fff;box-shadow:inset 1px 1px #ACA899, inset 2px 2px #716F64, inset -1px -1px #fff, inset -2px -2px #F1EFE2;"><svg width="12" height="12" style="position:absolute;left:0;top:0"><path d="M3.5 5L5.5 7.5L9.5 2.5" fill="none" stroke="#000" stroke-width="2.2"/></svg></div>
<div style="position:absolute;left:661px;top:165px;width:200px;height:13px;"><div class="t" style="left:0;top:0;color:#000">0</div></div>
<div style="position:absolute;left:0px;top:180px;width:19px;height:17px;background:#ECE9D8;box-shadow:inset 0 1px #fff;"></div>
<div style="position:absolute;left:0px;top:197px;width:19px;height:1px;background:#ACA899;"></div>
<div style="position:absolute;left:19px;top:180px;width:1px;height:18px;background:#ACA899;"></div>
<div style="position:absolute;left:20px;top:197px;width:667px;height:1px;background:repeating-linear-gradient(90deg,#000 0 1px,#fff 1px 2px);"></div>
<div style="position:absolute;left:56px;top:180px;width:1px;height:18px;background:repeating-linear-gradient(180deg,#000 0 1px,#fff 1px 2px);"></div>
<div style="position:absolute;left:200px;top:180px;width:1px;height:18px;background:repeating-linear-gradient(180deg,#000 0 1px,#fff 1px 2px);"></div>
<div style="position:absolute;left:281px;top:180px;width:1px;height:18px;background:repeating-linear-gradient(180deg,#000 0 1px,#fff 1px 2px);"></div>
<div style="position:absolute;left:318px;top:180px;width:1px;height:18px;background:repeating-linear-gradient(180deg,#000 0 1px,#fff 1px 2px);"></div>
<div style="position:absolute;left:352px;top:180px;width:1px;height:18px;background:repeating-linear-gradient(180deg,#000 0 1px,#fff 1px 2px);"></div>
<div style="position:absolute;left:412px;top:180px;width:1px;height:18px;background:repeating-linear-gradient(180deg,#000 0 1px,#fff 1px 2px);"></div>
<div style="position:absolute;left:466px;top:180px;width:1px;height:18px;background:repeating-linear-gradient(180deg,#000 0 1px,#fff 1px 2px);"></div>
<div style="position:absolute;left:526px;top:180px;width:1px;height:18px;background:repeating-linear-gradient(180deg,#000 0 1px,#fff 1px 2px);"></div>
<div style="position:absolute;left:544px;top:180px;width:1px;height:18px;background:repeating-linear-gradient(180deg,#000 0 1px,#fff 1px 2px);"></div>
<div style="position:absolute;left:607px;top:180px;width:1px;height:18px;background:repeating-linear-gradient(180deg,#000 0 1px,#fff 1px 2px);"></div>
<div style="position:absolute;left:657px;top:180px;width:1px;height:18px;background:repeating-linear-gradient(180deg,#000 0 1px,#fff 1px 2px);"></div>
<div style="position:absolute;left:23px;top:183px;width:200px;height:13px;"><div class="t" style="left:0;top:0;color:#000">12</div></div>
<svg style="position:absolute;left:60px;top:184px" width="141" height="9"><use href="#odb_l"/></svg>
<div style="position:absolute;left:285px;top:183px;width:200px;height:13px;"><div class="t" style="left:0;top:0;color:#000">1014</div></div>
<div style="position:absolute;left:322px;top:183px;width:200px;height:13px;"><div class="t" style="left:0;top:0;color:#000">948</div></div>
<svg style="position:absolute;left:357px;top:184px" width="12" height="9"><use href="#tit_l"/></svg>
<div style="position:absolute;left:373px;top:183px;width:40px;height:13px;"><div class="t" style="left:0;top:0;color:#000">UT</div></div>
<div style="position:absolute;left:416px;top:183px;width:200px;height:13px;"><div class="t" style="left:0;top:0;color:#000">20050503</div></div>
<svg style="position:absolute;left:471px;top:184px" width="18" height="9"><use href="#dod_l"/></svg>
<div style="position:absolute;left:529px;top:183px;width:12px;height:12px;background:#fff;box-shadow:inset 1px 1px #ACA899, inset 2px 2px #716F64, inset -1px -1px #fff, inset -2px -2px #F1EFE2;"><svg width="12" height="12" style="position:absolute;left:0;top:0"><path d="M3.5 5L5.5 7.5L9.5 2.5" fill="none" stroke="#000" stroke-width="2.2"/></svg></div>
<div style="position:absolute;left:661px;top:183px;width:200px;height:13px;"><div class="t" style="left:0;top:0;color:#000">0</div></div>
<div style="position:absolute;left:0px;top:198px;width:19px;height:17px;background:#ECE9D8;box-shadow:inset 0 1px #fff;"></div>
<div style="position:absolute;left:0px;top:215px;width:19px;height:1px;background:#ACA899;"></div>
<div style="position:absolute;left:19px;top:198px;width:1px;height:18px;background:#ACA899;"></div>
<div style="position:absolute;left:20px;top:215px;width:667px;height:1px;background:repeating-linear-gradient(90deg,#000 0 1px,#fff 1px 2px);"></div>
<div style="position:absolute;left:56px;top:198px;width:1px;height:18px;background:repeating-linear-gradient(180deg,#000 0 1px,#fff 1px 2px);"></div>
<div style="position:absolute;left:200px;top:198px;width:1px;height:18px;background:repeating-linear-gradient(180deg,#000 0 1px,#fff 1px 2px);"></div>
<div style="position:absolute;left:281px;top:198px;width:1px;height:18px;background:repeating-linear-gradient(180deg,#000 0 1px,#fff 1px 2px);"></div>
<div style="position:absolute;left:318px;top:198px;width:1px;height:18px;background:repeating-linear-gradient(180deg,#000 0 1px,#fff 1px 2px);"></div>
<div style="position:absolute;left:352px;top:198px;width:1px;height:18px;background:repeating-linear-gradient(180deg,#000 0 1px,#fff 1px 2px);"></div>
<div style="position:absolute;left:412px;top:198px;width:1px;height:18px;background:repeating-linear-gradient(180deg,#000 0 1px,#fff 1px 2px);"></div>
<div style="position:absolute;left:466px;top:198px;width:1px;height:18px;background:repeating-linear-gradient(180deg,#000 0 1px,#fff 1px 2px);"></div>
<div style="position:absolute;left:526px;top:198px;width:1px;height:18px;background:repeating-linear-gradient(180deg,#000 0 1px,#fff 1px 2px);"></div>
<div style="position:absolute;left:544px;top:198px;width:1px;height:18px;background:repeating-linear-gradient(180deg,#000 0 1px,#fff 1px 2px);"></div>
<div style="position:absolute;left:607px;top:198px;width:1px;height:18px;background:repeating-linear-gradient(180deg,#000 0 1px,#fff 1px 2px);"></div>
<div style="position:absolute;left:657px;top:198px;width:1px;height:18px;background:repeating-linear-gradient(180deg,#000 0 1px,#fff 1px 2px);"></div>
<div style="position:absolute;left:23px;top:201px;width:200px;height:13px;"><div class="t" style="left:0;top:0;color:#000">12</div></div>
<svg style="position:absolute;left:60px;top:202px" width="141" height="9"><use href="#odb_l"/></svg>
<div style="position:absolute;left:285px;top:201px;width:200px;height:13px;"><div class="t" style="left:0;top:0;color:#000">1014</div></div>
<div style="position:absolute;left:322px;top:201px;width:200px;height:13px;"><div class="t" style="left:0;top:0;color:#000">939</div></div>
<svg style="position:absolute;left:357px;top:202px" width="12" height="9"><use href="#tit_l"/></svg>
<div style="position:absolute;left:373px;top:201px;width:40px;height:13px;"><div class="t" style="left:0;top:0;color:#000">PO</div></div>
<div style="position:absolute;left:416px;top:201px;width:200px;height:13px;"><div class="t" style="left:0;top:0;color:#000">20050502</div></div>
<svg style="position:absolute;left:471px;top:202px" width="18" height="9"><use href="#dod_l"/></svg>
<div style="position:absolute;left:529px;top:201px;width:12px;height:12px;background:#fff;box-shadow:inset 1px 1px #ACA899, inset 2px 2px #716F64, inset -1px -1px #fff, inset -2px -2px #F1EFE2;"><svg width="12" height="12" style="position:absolute;left:0;top:0"><path d="M3.5 5L5.5 7.5L9.5 2.5" fill="none" stroke="#000" stroke-width="2.2"/></svg></div>
<div style="position:absolute;left:661px;top:201px;width:200px;height:13px;"><div class="t" style="left:0;top:0;color:#000">0</div></div>
<div style="position:absolute;left:0px;top:216px;width:19px;height:17px;background:#ECE9D8;box-shadow:inset 0 1px #fff;"></div>
<div style="position:absolute;left:0px;top:233px;width:19px;height:1px;background:#ACA899;"></div>
<div style="position:absolute;left:19px;top:216px;width:1px;height:18px;background:#ACA899;"></div>
<div style="position:absolute;left:20px;top:233px;width:667px;height:1px;background:repeating-linear-gradient(90deg,#000 0 1px,#fff 1px 2px);"></div>
<div style="position:absolute;left:56px;top:216px;width:1px;height:18px;background:repeating-linear-gradient(180deg,#000 0 1px,#fff 1px 2px);"></div>
<div style="position:absolute;left:200px;top:216px;width:1px;height:18px;background:repeating-linear-gradient(180deg,#000 0 1px,#fff 1px 2px);"></div>
<div style="position:absolute;left:281px;top:216px;width:1px;height:18px;background:repeating-linear-gradient(180deg,#000 0 1px,#fff 1px 2px);"></div>
<div style="position:absolute;left:318px;top:216px;width:1px;height:18px;background:repeating-linear-gradient(180deg,#000 0 1px,#fff 1px 2px);"></div>
<div style="position:absolute;left:352px;top:216px;width:1px;height:18px;background:repeating-linear-gradient(180deg,#000 0 1px,#fff 1px 2px);"></div>
<div style="position:absolute;left:412px;top:216px;width:1px;height:18px;background:repeating-linear-gradient(180deg,#000 0 1px,#fff 1px 2px);"></div>
<div style="position:absolute;left:466px;top:216px;width:1px;height:18px;background:repeating-linear-gradient(180deg,#000 0 1px,#fff 1px 2px);"></div>
<div style="position:absolute;left:526px;top:216px;width:1px;height:18px;background:repeating-linear-gradient(180deg,#000 0 1px,#fff 1px 2px);"></div>
<div style="position:absolute;left:544px;top:216px;width:1px;height:18px;background:repeating-linear-gradient(180deg,#000 0 1px,#fff 1px 2px);"></div>
<div style="position:absolute;left:607px;top:216px;width:1px;height:18px;background:repeating-linear-gradient(180deg,#000 0 1px,#fff 1px 2px);"></div>
<div style="position:absolute;left:657px;top:216px;width:1px;height:18px;background:repeating-linear-gradient(180deg,#000 0 1px,#fff 1px 2px);"></div>
<div style="position:absolute;left:23px;top:219px;width:200px;height:13px;"><div class="t" style="left:0;top:0;color:#000">12</div></div>
<svg style="position:absolute;left:60px;top:220px" width="141" height="9"><use href="#odb_l"/></svg>
<div style="position:absolute;left:285px;top:219px;width:200px;height:13px;"><div class="t" style="left:0;top:0;color:#000">1014</div></div>
<div style="position:absolute;left:322px;top:219px;width:200px;height:13px;"><div class="t" style="left:0;top:0;color:#000">975</div></div>
<svg style="position:absolute;left:357px;top:220px" width="12" height="9"><use href="#tit_l"/></svg>
<div style="position:absolute;left:373px;top:219px;width:40px;height:13px;"><div class="t" style="left:0;top:0;color:#000">PA</div></div>
<div style="position:absolute;left:416px;top:219px;width:200px;height:13px;"><div class="t" style="left:0;top:0;color:#000">20050429</div></div>
<svg style="position:absolute;left:471px;top:220px" width="18" height="9"><use href="#dod_l"/></svg>
<div style="position:absolute;left:529px;top:219px;width:12px;height:12px;background:#fff;box-shadow:inset 1px 1px #ACA899, inset 2px 2px #716F64, inset -1px -1px #fff, inset -2px -2px #F1EFE2;"><svg width="12" height="12" style="position:absolute;left:0;top:0"><path d="M3.5 5L5.5 7.5L9.5 2.5" fill="none" stroke="#000" stroke-width="2.2"/></svg></div>
<div style="position:absolute;left:548px;top:219px;width:200px;height:13px;"><div class="t" style="left:0;top:0;color:#000">319</div></div>
<div style="position:absolute;left:611px;top:219px;width:200px;height:13px;"><div class="t" style="left:0;top:0;color:#000">52,30</div></div>
<div style="position:absolute;left:661px;top:219px;width:200px;height:13px;"><div class="t" style="left:0;top:0;color:#000">0</div></div>
<div style="position:absolute;left:0px;top:234px;width:19px;height:17px;background:#ECE9D8;box-shadow:inset 0 1px #fff;"></div>
<div style="position:absolute;left:0px;top:251px;width:19px;height:1px;background:#ACA899;"></div>
<div style="position:absolute;left:19px;top:234px;width:1px;height:18px;background:#ACA899;"></div>
<div style="position:absolute;left:20px;top:251px;width:667px;height:1px;background:repeating-linear-gradient(90deg,#000 0 1px,#fff 1px 2px);"></div>
<div style="position:absolute;left:56px;top:234px;width:1px;height:18px;background:repeating-linear-gradient(180deg,#000 0 1px,#fff 1px 2px);"></div>
<div style="position:absolute;left:200px;top:234px;width:1px;height:18px;background:repeating-linear-gradient(180deg,#000 0 1px,#fff 1px 2px);"></div>
<div style="position:absolute;left:281px;top:234px;width:1px;height:18px;background:repeating-linear-gradient(180deg,#000 0 1px,#fff 1px 2px);"></div>
<div style="position:absolute;left:318px;top:234px;width:1px;height:18px;background:repeating-linear-gradient(180deg,#000 0 1px,#fff 1px 2px);"></div>
<div style="position:absolute;left:352px;top:234px;width:1px;height:18px;background:repeating-linear-gradient(180deg,#000 0 1px,#fff 1px 2px);"></div>
<div style="position:absolute;left:412px;top:234px;width:1px;height:18px;background:repeating-linear-gradient(180deg,#000 0 1px,#fff 1px 2px);"></div>
<div style="position:absolute;left:466px;top:234px;width:1px;height:18px;background:repeating-linear-gradient(180deg,#000 0 1px,#fff 1px 2px);"></div>
<div style="position:absolute;left:526px;top:234px;width:1px;height:18px;background:repeating-linear-gradient(180deg,#000 0 1px,#fff 1px 2px);"></div>
<div style="position:absolute;left:544px;top:234px;width:1px;height:18px;background:repeating-linear-gradient(180deg,#000 0 1px,#fff 1px 2px);"></div>
<div style="position:absolute;left:607px;top:234px;width:1px;height:18px;background:repeating-linear-gradient(180deg,#000 0 1px,#fff 1px 2px);"></div>
<div style="position:absolute;left:657px;top:234px;width:1px;height:18px;background:repeating-linear-gradient(180deg,#000 0 1px,#fff 1px 2px);"></div>
<div style="position:absolute;left:23px;top:237px;width:200px;height:13px;"><div class="t" style="left:0;top:0;color:#000">12</div></div>
<svg style="position:absolute;left:60px;top:238px" width="141" height="9"><use href="#odb_l"/></svg>
<div style="position:absolute;left:285px;top:237px;width:200px;height:13px;"><div class="t" style="left:0;top:0;color:#000">1014</div></div>
<div style="position:absolute;left:322px;top:237px;width:200px;height:13px;"><div class="t" style="left:0;top:0;color:#000">966</div></div>
<svg style="position:absolute;left:357px;top:238px" width="12" height="9"><use href="#tit_l"/></svg>
<div style="position:absolute;left:373px;top:237px;width:40px;height:13px;"><div class="t" style="left:0;top:0;color:#000">CT</div></div>
<div style="position:absolute;left:416px;top:237px;width:200px;height:13px;"><div class="t" style="left:0;top:0;color:#000">20050428</div></div>
<svg style="position:absolute;left:471px;top:238px" width="18" height="9"><use href="#dod_l"/></svg>
<div style="position:absolute;left:529px;top:237px;width:12px;height:12px;background:#fff;box-shadow:inset 1px 1px #ACA899, inset 2px 2px #716F64, inset -1px -1px #fff, inset -2px -2px #F1EFE2;"><svg width="12" height="12" style="position:absolute;left:0;top:0"><path d="M3.5 5L5.5 7.5L9.5 2.5" fill="none" stroke="#000" stroke-width="2.2"/></svg></div>
<div style="position:absolute;left:548px;top:237px;width:200px;height:13px;"><div class="t" style="left:0;top:0;color:#000">253</div></div>
<div style="position:absolute;left:611px;top:237px;width:200px;height:13px;"><div class="t" style="left:0;top:0;color:#000">69,32</div></div>
<div style="position:absolute;left:661px;top:237px;width:200px;height:13px;"><div class="t" style="left:0;top:0;color:#000">0</div></div>
<div style="position:absolute;left:0px;top:252px;width:19px;height:17px;background:#ECE9D8;box-shadow:inset 0 1px #fff;"></div>
<div style="position:absolute;left:0px;top:269px;width:19px;height:1px;background:#ACA899;"></div>
<div style="position:absolute;left:19px;top:252px;width:1px;height:18px;background:#ACA899;"></div>
<div style="position:absolute;left:20px;top:269px;width:667px;height:1px;background:repeating-linear-gradient(90deg,#000 0 1px,#fff 1px 2px);"></div>
<div style="position:absolute;left:56px;top:252px;width:1px;height:18px;background:repeating-linear-gradient(180deg,#000 0 1px,#fff 1px 2px);"></div>
<div style="position:absolute;left:200px;top:252px;width:1px;height:18px;background:repeating-linear-gradient(180deg,#000 0 1px,#fff 1px 2px);"></div>
<div style="position:absolute;left:281px;top:252px;width:1px;height:18px;background:repeating-linear-gradient(180deg,#000 0 1px,#fff 1px 2px);"></div>
<div style="position:absolute;left:318px;top:252px;width:1px;height:18px;background:repeating-linear-gradient(180deg,#000 0 1px,#fff 1px 2px);"></div>
<div style="position:absolute;left:352px;top:252px;width:1px;height:18px;background:repeating-linear-gradient(180deg,#000 0 1px,#fff 1px 2px);"></div>
<div style="position:absolute;left:412px;top:252px;width:1px;height:18px;background:repeating-linear-gradient(180deg,#000 0 1px,#fff 1px 2px);"></div>
<div style="position:absolute;left:466px;top:252px;width:1px;height:18px;background:repeating-linear-gradient(180deg,#000 0 1px,#fff 1px 2px);"></div>
<div style="position:absolute;left:526px;top:252px;width:1px;height:18px;background:repeating-linear-gradient(180deg,#000 0 1px,#fff 1px 2px);"></div>
<div style="position:absolute;left:544px;top:252px;width:1px;height:18px;background:repeating-linear-gradient(180deg,#000 0 1px,#fff 1px 2px);"></div>
<div style="position:absolute;left:607px;top:252px;width:1px;height:18px;background:repeating-linear-gradient(180deg,#000 0 1px,#fff 1px 2px);"></div>
<div style="position:absolute;left:657px;top:252px;width:1px;height:18px;background:repeating-linear-gradient(180deg,#000 0 1px,#fff 1px 2px);"></div>
<div style="position:absolute;left:23px;top:255px;width:200px;height:13px;"><div class="t" style="left:0;top:0;color:#000">12</div></div>
<svg style="position:absolute;left:60px;top:256px" width="141" height="9"><use href="#odb_l"/></svg>
<div style="position:absolute;left:285px;top:255px;width:200px;height:13px;"><div class="t" style="left:0;top:0;color:#000">1014</div></div>
<div style="position:absolute;left:322px;top:255px;width:200px;height:13px;"><div class="t" style="left:0;top:0;color:#000">957</div></div>
<svg style="position:absolute;left:357px;top:256px" width="12" height="9"><use href="#tit_l"/></svg>
<div style="position:absolute;left:373px;top:255px;width:40px;height:13px;"><div class="t" style="left:0;top:0;color:#000">ST</div></div>
<div style="position:absolute;left:416px;top:255px;width:200px;height:13px;"><div class="t" style="left:0;top:0;color:#000">20050427</div></div>
<svg style="position:absolute;left:471px;top:256px" width="18" height="9"><use href="#dod_l"/></svg>
<div style="position:absolute;left:529px;top:255px;width:12px;height:12px;background:#fff;box-shadow:inset 1px 1px #ACA899, inset 2px 2px #716F64, inset -1px -1px #fff, inset -2px -2px #F1EFE2;"><svg width="12" height="12" style="position:absolute;left:0;top:0"><path d="M3.5 5L5.5 7.5L9.5 2.5" fill="none" stroke="#000" stroke-width="2.2"/></svg></div>
<div style="position:absolute;left:548px;top:255px;width:200px;height:13px;"><div class="t" style="left:0;top:0;color:#000">232</div></div>
<div style="position:absolute;left:611px;top:255px;width:200px;height:13px;"><div class="t" style="left:0;top:0;color:#000">57,86</div></div>
<div style="position:absolute;left:661px;top:255px;width:200px;height:13px;"><div class="t" style="left:0;top:0;color:#000">0</div></div>
<div style="position:absolute;left:0px;top:270px;width:19px;height:17px;background:#ECE9D8;box-shadow:inset 0 1px #fff;"></div>
<div style="position:absolute;left:0px;top:287px;width:19px;height:1px;background:#ACA899;"></div>
<div style="position:absolute;left:19px;top:270px;width:1px;height:18px;background:#ACA899;"></div>
<div style="position:absolute;left:20px;top:287px;width:667px;height:1px;background:repeating-linear-gradient(90deg,#000 0 1px,#fff 1px 2px);"></div>
<div style="position:absolute;left:56px;top:270px;width:1px;height:18px;background:repeating-linear-gradient(180deg,#000 0 1px,#fff 1px 2px);"></div>
<div style="position:absolute;left:200px;top:270px;width:1px;height:18px;background:repeating-linear-gradient(180deg,#000 0 1px,#fff 1px 2px);"></div>
<div style="position:absolute;left:281px;top:270px;width:1px;height:18px;background:repeating-linear-gradient(180deg,#000 0 1px,#fff 1px 2px);"></div>
<div style="position:absolute;left:318px;top:270px;width:1px;height:18px;background:repeating-linear-gradient(180deg,#000 0 1px,#fff 1px 2px);"></div>
<div style="position:absolute;left:352px;top:270px;width:1px;height:18px;background:repeating-linear-gradient(180deg,#000 0 1px,#fff 1px 2px);"></div>
<div style="position:absolute;left:412px;top:270px;width:1px;height:18px;background:repeating-linear-gradient(180deg,#000 0 1px,#fff 1px 2px);"></div>
<div style="position:absolute;left:466px;top:270px;width:1px;height:18px;background:repeating-linear-gradient(180deg,#000 0 1px,#fff 1px 2px);"></div>
<div style="position:absolute;left:526px;top:270px;width:1px;height:18px;background:repeating-linear-gradient(180deg,#000 0 1px,#fff 1px 2px);"></div>
<div style="position:absolute;left:544px;top:270px;width:1px;height:18px;background:repeating-linear-gradient(180deg,#000 0 1px,#fff 1px 2px);"></div>
<div style="position:absolute;left:607px;top:270px;width:1px;height:18px;background:repeating-linear-gradient(180deg,#000 0 1px,#fff 1px 2px);"></div>
<div style="position:absolute;left:657px;top:270px;width:1px;height:18px;background:repeating-linear-gradient(180deg,#000 0 1px,#fff 1px 2px);"></div>
<div style="position:absolute;left:23px;top:273px;width:200px;height:13px;"><div class="t" style="left:0;top:0;color:#000">12</div></div>
<svg style="position:absolute;left:60px;top:274px" width="141" height="9"><use href="#odb_l"/></svg>
<div style="position:absolute;left:285px;top:273px;width:200px;height:13px;"><div class="t" style="left:0;top:0;color:#000">1014</div></div>
<div style="position:absolute;left:322px;top:273px;width:200px;height:13px;"><div class="t" style="left:0;top:0;color:#000">948</div></div>
<svg style="position:absolute;left:357px;top:274px" width="12" height="9"><use href="#tit_l"/></svg>
<div style="position:absolute;left:373px;top:273px;width:40px;height:13px;"><div class="t" style="left:0;top:0;color:#000">UT</div></div>
<div style="position:absolute;left:416px;top:273px;width:200px;height:13px;"><div class="t" style="left:0;top:0;color:#000">20050426</div></div>
<svg style="position:absolute;left:471px;top:274px" width="18" height="9"><use href="#dod_l"/></svg>
<div style="position:absolute;left:529px;top:273px;width:12px;height:12px;background:#fff;box-shadow:inset 1px 1px #ACA899, inset 2px 2px #716F64, inset -1px -1px #fff, inset -2px -2px #F1EFE2;"><svg width="12" height="12" style="position:absolute;left:0;top:0"><path d="M3.5 5L5.5 7.5L9.5 2.5" fill="none" stroke="#000" stroke-width="2.2"/></svg></div>
<div style="position:absolute;left:548px;top:273px;width:200px;height:13px;"><div class="t" style="left:0;top:0;color:#000">231</div></div>
<div style="position:absolute;left:611px;top:273px;width:200px;height:13px;"><div class="t" style="left:0;top:0;color:#000">65,81</div></div>
<div style="position:absolute;left:661px;top:273px;width:200px;height:13px;"><div class="t" style="left:0;top:0;color:#000">0</div></div>
<div style="position:absolute;left:0px;top:288px;width:19px;height:17px;background:#ECE9D8;box-shadow:inset 0 1px #fff;"></div>
<div style="position:absolute;left:0px;top:305px;width:19px;height:1px;background:#ACA899;"></div>
<div style="position:absolute;left:19px;top:288px;width:1px;height:18px;background:#ACA899;"></div>
<div style="position:absolute;left:20px;top:305px;width:667px;height:1px;background:repeating-linear-gradient(90deg,#000 0 1px,#fff 1px 2px);"></div>
<div style="position:absolute;left:56px;top:288px;width:1px;height:18px;background:repeating-linear-gradient(180deg,#000 0 1px,#fff 1px 2px);"></div>
<div style="position:absolute;left:200px;top:288px;width:1px;height:18px;background:repeating-linear-gradient(180deg,#000 0 1px,#fff 1px 2px);"></div>
<div style="position:absolute;left:281px;top:288px;width:1px;height:18px;background:repeating-linear-gradient(180deg,#000 0 1px,#fff 1px 2px);"></div>
<div style="position:absolute;left:318px;top:288px;width:1px;height:18px;background:repeating-linear-gradient(180deg,#000 0 1px,#fff 1px 2px);"></div>
<div style="position:absolute;left:352px;top:288px;width:1px;height:18px;background:repeating-linear-gradient(180deg,#000 0 1px,#fff 1px 2px);"></div>
<div style="position:absolute;left:412px;top:288px;width:1px;height:18px;background:repeating-linear-gradient(180deg,#000 0 1px,#fff 1px 2px);"></div>
<div style="position:absolute;left:466px;top:288px;width:1px;height:18px;background:repeating-linear-gradient(180deg,#000 0 1px,#fff 1px 2px);"></div>
<div style="position:absolute;left:526px;top:288px;width:1px;height:18px;background:repeating-linear-gradient(180deg,#000 0 1px,#fff 1px 2px);"></div>
<div style="position:absolute;left:544px;top:288px;width:1px;height:18px;background:repeating-linear-gradient(180deg,#000 0 1px,#fff 1px 2px);"></div>
<div style="position:absolute;left:607px;top:288px;width:1px;height:18px;background:repeating-linear-gradient(180deg,#000 0 1px,#fff 1px 2px);"></div>
<div style="position:absolute;left:657px;top:288px;width:1px;height:18px;background:repeating-linear-gradient(180deg,#000 0 1px,#fff 1px 2px);"></div>
<div style="position:absolute;left:23px;top:291px;width:200px;height:13px;"><div class="t" style="left:0;top:0;color:#000">12</div></div>
<svg style="position:absolute;left:60px;top:292px" width="141" height="9"><use href="#odb_l"/></svg>
<div style="position:absolute;left:285px;top:291px;width:200px;height:13px;"><div class="t" style="left:0;top:0;color:#000">1014</div></div>
<div style="position:absolute;left:322px;top:291px;width:200px;height:13px;"><div class="t" style="left:0;top:0;color:#000">939</div></div>
<svg style="position:absolute;left:357px;top:292px" width="12" height="9"><use href="#tit_l"/></svg>
<div style="position:absolute;left:373px;top:291px;width:40px;height:13px;"><div class="t" style="left:0;top:0;color:#000">PO</div></div>
<div style="position:absolute;left:416px;top:291px;width:200px;height:13px;"><div class="t" style="left:0;top:0;color:#000">20050425</div></div>
<svg style="position:absolute;left:471px;top:292px" width="18" height="9"><use href="#dod_l"/></svg>
<div style="position:absolute;left:529px;top:291px;width:12px;height:12px;background:#fff;box-shadow:inset 1px 1px #ACA899, inset 2px 2px #716F64, inset -1px -1px #fff, inset -2px -2px #F1EFE2;"><svg width="12" height="12" style="position:absolute;left:0;top:0"><path d="M3.5 5L5.5 7.5L9.5 2.5" fill="none" stroke="#000" stroke-width="2.2"/></svg></div>
<div style="position:absolute;left:548px;top:291px;width:200px;height:13px;"><div class="t" style="left:0;top:0;color:#000">204</div></div>
<div style="position:absolute;left:611px;top:291px;width:200px;height:13px;"><div class="t" style="left:0;top:0;color:#000">66,66</div></div>
<div style="position:absolute;left:661px;top:291px;width:200px;height:13px;"><div class="t" style="left:0;top:0;color:#000">0</div></div>
</div>
<div style="position:absolute;left:765px;top:254px;width:17px;height:294px;background:linear-gradient(90deg,#F3F1EC,#FEFEFB);"></div>
<div style="position:absolute;left:766px;top:255px;width:15px;height:15px;background:linear-gradient(135deg,#DCE6FD 0%,#C4D5FC 50%,#B6CAF8 100%);border:1px solid #fff;border-radius:2px;box-shadow:inset -1px -1px #A9BCEC;"><svg width="15" height="15" style="position:absolute;left:-1px;top:-1px"><path d="M3.5 9.5L7.5 5.5L11.5 9.5" fill="none" stroke="#4D6185" stroke-width="2"/></svg></div>
<div style="position:absolute;left:766px;top:272px;width:15px;height:15px;background:linear-gradient(135deg,#DCE6FD 0%,#C4D5FC 50%,#B6CAF8 100%);border:1px solid #fff;border-radius:2px;box-shadow:inset -1px -1px #A9BCEC;"><svg width="15" height="15" style="position:absolute;left:-1px;top:-1px"><rect x="4.5" y="3.5" width="6" height="1" fill="#EEF4FE"/><rect x="5.5" y="4.5" width="6" height="1" fill="#8CB0F8"/><rect x="4.5" y="5.5" width="6" height="1" fill="#EEF4FE"/><rect x="5.5" y="6.5" width="6" height="1" fill="#8CB0F8"/><rect x="4.5" y="7.5" width="6" height="1" fill="#EEF4FE"/><rect x="5.5" y="8.5" width="6" height="1" fill="#8CB0F8"/><rect x="4.5" y="9.5" width="6" height="1" fill="#EEF4FE"/><rect x="5.5" y="10.5" width="6" height="1" fill="#8CB0F8"/></svg></div>
<div style="position:absolute;left:766px;top:532px;width:15px;height:15px;background:linear-gradient(135deg,#DCE6FD 0%,#C4D5FC 50%,#B6CAF8 100%);border:1px solid #fff;border-radius:2px;box-shadow:inset -1px -1px #A9BCEC;"><svg width="15" height="15" style="position:absolute;left:-1px;top:-1px"><path d="M3.5 5.5L7.5 9.5L11.5 5.5" fill="none" stroke="#4D6185" stroke-width="2"/></svg></div>
<div style="position:absolute;left:78px;top:548px;width:687px;height:17px;background:linear-gradient(#F3F1EC,#FEFEFB);"></div>
<div style="position:absolute;left:79px;top:549px;width:15px;height:15px;background:linear-gradient(135deg,#DCE6FD 0%,#C4D5FC 50%,#B6CAF8 100%);border:1px solid #fff;border-radius:2px;box-shadow:inset -1px -1px #A9BCEC;"><svg width="15" height="15" style="position:absolute;left:-1px;top:-1px"><path d="M9.5 3.5L5.5 7.5L9.5 11.5" fill="none" stroke="#4D6185" stroke-width="2"/></svg></div>
<div style="position:absolute;left:96px;top:549px;width:16px;height:15px;background:linear-gradient(135deg,#DCE6FD 0%,#C4D5FC 50%,#B6CAF8 100%);border:1px solid #fff;border-radius:2px;box-shadow:inset -1px -1px #A9BCEC;"><svg width="16" height="15" style="position:absolute;left:-1px;top:-1px"><rect x="4.0" y="4.5" width="1" height="6" fill="#EEF4FE"/><rect x="5.0" y="5.5" width="1" height="6" fill="#8CB0F8"/><rect x="6.0" y="4.5" width="1" height="6" fill="#EEF4FE"/><rect x="7.0" y="5.5" width="1" height="6" fill="#8CB0F8"/><rect x="8.0" y="4.5" width="1" height="6" fill="#EEF4FE"/><rect x="9.0" y="5.5" width="1" height="6" fill="#8CB0F8"/><rect x="10.0" y="4.5" width="1" height="6" fill="#EEF4FE"/><rect x="11.0" y="5.5" width="1" height="6" fill="#8CB0F8"/></svg></div>
<div style="position:absolute;left:749px;top:549px;width:15px;height:15px;background:linear-gradient(135deg,#DCE6FD 0%,#C4D5FC 50%,#B6CAF8 100%);border:1px solid #fff;border-radius:2px;box-shadow:inset -1px -1px #A9BCEC;"><svg width="15" height="15" style="position:absolute;left:-1px;top:-1px"><path d="M5.5 3.5L9.5 7.5L5.5 11.5" fill="none" stroke="#4D6185" stroke-width="2"/></svg></div>
<div style="position:absolute;left:765px;top:548px;width:17px;height:17px;background:#ECE9D8;"><svg width="17" height="17" style="position:absolute;left:0;top:0"><rect x="12" y="4" width="2" height="2" fill="#B8B4A4"/><rect x="8" y="8" width="2" height="2" fill="#B8B4A4"/><rect x="12" y="8" width="2" height="2" fill="#B8B4A4"/><rect x="4" y="12" width="2" height="2" fill="#B8B4A4"/><rect x="8" y="12" width="2" height="2" fill="#B8B4A4"/><rect x="12" y="12" width="2" height="2" fill="#B8B4A4"/></svg></div><svg width="0" height="0" style="position:absolute"><defs><g id="odb_l"><rect x="0" y="0" width="3" height="3" fill="rgb(102,102,102)"/><rect x="3" y="0" width="3" height="3" fill="rgb(140,140,140)"/><rect x="6" y="0" width="3" height="3" fill="rgb(191,191,191)"/><rect x="9" y="0" width="3" height="3" fill="rgb(168,168,168)"/><rect x="12" y="0" width="3" height="3" fill="rgb(191,191,191)"/><rect x="15" y="0" width="3" height="3" fill="rgb(204,204,204)"/><rect x="18" y="0" width="3" height="3" fill="rgb(168,168,168)"/><rect x="21" y="0" width="3" height="3" fill="rgb(229,229,229)"/><rect x="24" y="0" width="3" height="3" fill="rgb(242,242,242)"/><rect x="27" y="0" width="3" height="3" fill="rgb(204,204,204)"/><rect x="30" y="0" width="3" height="3" fill="rgb(229,229,229)"/><rect x="33" y="0" width="3" height="3" fill="rgb(229,229,229)"/><rect x="36" y="0" width="3" height="3" fill="rgb(168,168,168)"/><rect x="39" y="0" width="3" height="3" fill="rgb(168,168,168)"/><rect x="42" y="0" width="3" height="3" fill="rgb(168,168,168)"/><rect x="45" y="0" width="3" height="3" fill="rgb(168,168,168)"/><rect x="48" y="0" width="3" height="3" fill="rgb(168,168,168)"/><rect x="51" y="0" width="3" height="3" fill="rgb(102,102,102)"/><rect x="54" y="0" width="3" height="3" fill="rgb(229,229,229)"/><rect x="57" y="0" width="3" height="3" fill="rgb(168,168,168)"/><rect x="60" y="0" width="3" height="3" fill="rgb(158,158,158)"/><rect x="63" y="0" width="3" height="3" fill="rgb(178,178,178)"/><rect x="66" y="0" width="3" height="3" fill="rgb(168,168,168)"/><rect x="69" y="0" width="3" height="3" fill="rgb(168,168,168)"/><rect x="72" y="0" width="3" height="3" fill="rgb(191,191,191)"/><rect x="75" y="0" width="3" height="3" fill="rgb(168,168,168)"/><rect x="78" y="0" width="3" height="3" fill="rgb(229,229,229)"/><rect x="81" y="0" width="3" height="3" fill="rgb(168,168,168)"/><rect x="84" y="0" width="3" height="3" fill="rgb(168,168,168)"/><rect x="87" y="0" width="3" height="3" fill="rgb(168,168,168)"/><rect x="90" y="0" width="3" height="3" fill="rgb(168,168,168)"/><rect x="93" y="0" width="3" height="3" fill="rgb(242,242,242)"/><rect x="96" y="0" width="3" height="3" fill="rgb(168,168,168)"/><rect x="99" y="0" width="3" height="3" fill="rgb(168,168,168)"/><rect x="102" y="0" width="3" height="3" fill="rgb(168,168,168)"/><rect x="105" y="0" width="3" height="3" fill="rgb(168,168,168)"/><rect x="108" y="0" width="3" height="3" fill="rgb(178,178,178)"/><rect x="111" y="0" width="3" height="3" fill="rgb(229,229,229)"/><rect x="114" y="0" width="3" height="3" fill="rgb(168,168,168)"/><rect x="117" y="0" width="3" height="3" fill="rgb(140,140,140)"/><rect x="120" y="0" width="3" height="3" fill="rgb(229,229,229)"/><rect x="123" y="0" width="3" height="3" fill="rgb(158,158,158)"/><rect x="126" y="0" width="3" height="3" fill="rgb(191,191,191)"/><rect x="129" y="0" width="3" height="3" fill="rgb(178,178,178)"/><rect x="132" y="0" width="3" height="3" fill="rgb(178,178,178)"/><rect x="135" y="0" width="3" height="3" fill="rgb(168,168,168)"/><rect x="138" y="0" width="3" height="3" fill="rgb(204,204,204)"/><rect x="0" y="3" width="3" height="3" fill="rgb(191,191,191)"/><rect x="3" y="3" width="3" height="3" fill="rgb(158,158,158)"/><rect x="6" y="3" width="3" height="3" fill="rgb(102,102,102)"/><rect x="9" y="3" width="3" height="3" fill="rgb(168,168,168)"/><rect x="12" y="3" width="3" height="3" fill="rgb(158,158,158)"/><rect x="15" y="3" width="3" height="3" fill="rgb(140,140,140)"/><rect x="18" y="3" width="3" height="3" fill="rgb(158,158,158)"/><rect x="21" y="3" width="3" height="3" fill="rgb(229,229,229)"/><rect x="24" y="3" width="3" height="3" fill="rgb(229,229,229)"/><rect x="27" y="3" width="3" height="3" fill="rgb(178,178,178)"/><rect x="30" y="3" width="3" height="3" fill="rgb(242,242,242)"/><rect x="33" y="3" width="3" height="3" fill="rgb(168,168,168)"/><rect x="36" y="3" width="3" height="3" fill="rgb(102,102,102)"/><rect x="39" y="3" width="3" height="3" fill="rgb(168,168,168)"/><rect x="42" y="3" width="3" height="3" fill="rgb(168,168,168)"/><rect x="45" y="3" width="3" height="3" fill="rgb(140,140,140)"/><rect x="48" y="3" width="3" height="3" fill="rgb(158,158,158)"/><rect x="51" y="3" width="3" height="3" fill="rgb(168,168,168)"/><rect x="54" y="3" width="3" height="3" fill="rgb(191,191,191)"/><rect x="57" y="3" width="3" height="3" fill="rgb(229,229,229)"/><rect x="60" y="3" width="3" height="3" fill="rgb(229,229,229)"/><rect x="63" y="3" width="3" height="3" fill="rgb(191,191,191)"/><rect x="66" y="3" width="3" height="3" fill="rgb(242,242,242)"/><rect x="69" y="3" width="3" height="3" fill="rgb(140,140,140)"/><rect x="72" y="3" width="3" height="3" fill="rgb(168,168,168)"/><rect x="75" y="3" width="3" height="3" fill="rgb(204,204,204)"/><rect x="78" y="3" width="3" height="3" fill="rgb(204,204,204)"/><rect x="81" y="3" width="3" height="3" fill="rgb(178,178,178)"/><rect x="84" y="3" width="3" height="3" fill="rgb(102,102,102)"/><rect x="87" y="3" width="3" height="3" fill="rgb(168,168,168)"/><rect x="90" y="3" width="3" height="3" fill="rgb(158,158,158)"/><rect x="93" y="3" width="3" height="3" fill="rgb(178,178,178)"/><rect x="96" y="3" width="3" height="3" fill="rgb(204,204,204)"/><rect x="99" y="3" width="3" height="3" fill="rgb(140,140,140)"/><rect x="102" y="3" width="3" height="3" fill="rgb(168,168,168)"/><rect x="105" y="3" width="3" height="3" fill="rgb(168,168,168)"/><rect x="108" y="3" width="3" height="3" fill="rgb(140,140,140)"/><rect x="111" y="3" width="3" height="3" fill="rgb(229,229,229)"/><rect x="114" y="3" width="3" height="3" fill="rgb(168,168,168)"/><rect x="117" y="3" width="3" height="3" fill="rgb(158,158,158)"/><rect x="120" y="3" width="3" height="3" fill="rgb(191,191,191)"/><rect x="123" y="3" width="3" height="3" fill="rgb(191,191,191)"/><rect x="126" y="3" width="3" height="3" fill="rgb(229,229,229)"/><rect x="129" y="3" width="3" height="3" fill="rgb(168,168,168)"/><rect x="132" y="3" width="3" height="3" fill="rgb(168,168,168)"/><rect x="135" y="3" width="3" height="3" fill="rgb(102,102,102)"/><rect x="138" y="3" width="3" height="3" fill="rgb(168,168,168)"/><rect x="0" y="6" width="3" height="3" fill="rgb(102,102,102)"/><rect x="3" y="6" width="3" height="3" fill="rgb(158,158,158)"/><rect x="6" y="6" width="3" height="3" fill="rgb(204,204,204)"/><rect x="9" y="6" width="3" height="3" fill="rgb(140,140,140)"/><rect x="12" y="6" width="3" height="3" fill="rgb(229,229,229)"/><rect x="15" y="6" width="3" height="3" fill="rgb(168,168,168)"/><rect x="18" y="6" width="3" height="3" fill="rgb(168,168,168)"/><rect x="21" y="6" width="3" height="3" fill="rgb(191,191,191)"/><rect x="24" y="6" width="3" height="3" fill="rgb(168,168,168)"/><rect x="27" y="6" width="3" height="3" fill="rgb(158,158,158)"/><rect x="30" y="6" width="3" height="3" fill="rgb(204,204,204)"/><rect x="33" y="6" width="3" height="3" fill="rgb(204,204,204)"/><rect x="36" y="6" width="3" height="3" fill="rgb(191,191,191)"/><rect x="39" y="6" width="3" height="3" fill="rgb(168,168,168)"/><rect x="42" y="6" width="3" height="3" fill="rgb(204,204,204)"/><rect x="45" y="6" width="3" height="3" fill="rgb(158,158,158)"/><rect x="48" y="6" width="3" height="3" fill="rgb(204,204,204)"/><rect x="51" y="6" width="3" height="3" fill="rgb(191,191,191)"/><rect x="54" y="6" width="3" height="3" fill="rgb(204,204,204)"/><rect x="57" y="6" width="3" height="3" fill="rgb(168,168,168)"/><rect x="60" y="6" width="3" height="3" fill="rgb(168,168,168)"/><rect x="63" y="6" width="3" height="3" fill="rgb(102,102,102)"/><rect x="66" y="6" width="3" height="3" fill="rgb(168,168,168)"/><rect x="69" y="6" width="3" height="3" fill="rgb(168,168,168)"/><rect x="72" y="6" width="3" height="3" fill="rgb(168,168,168)"/><rect x="75" y="6" width="3" height="3" fill="rgb(140,140,140)"/><rect x="78" y="6" width="3" height="3" fill="rgb(229,229,229)"/><rect x="81" y="6" width="3" height="3" fill="rgb(168,168,168)"/><rect x="84" y="6" width="3" height="3" fill="rgb(229,229,229)"/><rect x="87" y="6" width="3" height="3" fill="rgb(168,168,168)"/><rect x="90" y="6" width="3" height="3" fill="rgb(178,178,178)"/><rect x="93" y="6" width="3" height="3" fill="rgb(178,178,178)"/><rect x="96" y="6" width="3" height="3" fill="rgb(229,229,229)"/><rect x="99" y="6" width="3" height="3" fill="rgb(229,229,229)"/><rect x="102" y="6" width="3" height="3" fill="rgb(168,168,168)"/><rect x="105" y="6" width="3" height="3" fill="rgb(168,168,168)"/><rect x="108" y="6" width="3" height="3" fill="rgb(168,168,168)"/><rect x="111" y="6" width="3" height="3" fill="rgb(191,191,191)"/><rect x="114" y="6" width="3" height="3" fill="rgb(158,158,158)"/><rect x="117" y="6" width="3" height="3" fill="rgb(168,168,168)"/><rect x="120" y="6" width="3" height="3" fill="rgb(168,168,168)"/><rect x="123" y="6" width="3" height="3" fill="rgb(168,168,168)"/><rect x="126" y="6" width="3" height="3" fill="rgb(204,204,204)"/><rect x="129" y="6" width="3" height="3" fill="rgb(178,178,178)"/><rect x="132" y="6" width="3" height="3" fill="rgb(168,168,168)"/><rect x="135" y="6" width="3" height="3" fill="rgb(140,140,140)"/><rect x="138" y="6" width="3" height="3" fill="rgb(168,168,168)"/></g><g id="odb_d"><rect x="0" y="0" width="3" height="3" fill="rgb(145,145,139)"/><rect x="3" y="0" width="3" height="3" fill="rgb(109,109,103)"/><rect x="6" y="0" width="3" height="3" fill="rgb(60,60,54)"/><rect x="9" y="0" width="3" height="3" fill="rgb(82,82,76)"/><rect x="12" y="0" width="3" height="3" fill="rgb(60,60,54)"/><rect x="15" y="0" width="3" height="3" fill="rgb(48,48,42)"/><rect x="18" y="0" width="3" height="3" fill="rgb(82,82,76)"/><rect x="21" y="0" width="3" height="3" fill="rgb(24,24,18)"/><rect x="24" y="0" width="3" height="3" fill="rgb(12,12,6)"/><rect x="27" y="0" width="3" height="3" fill="rgb(48,48,42)"/><rect x="30" y="0" width="3" height="3" fill="rgb(24,24,18)"/><rect x="33" y="0" width="3" height="3" fill="rgb(24,24,18)"/><rect x="36" y="0" width="3" height="3" fill="rgb(82,82,76)"/><rect x="39" y="0" width="3" height="3" fill="rgb(82,82,76)"/><rect x="42" y="0" width="3" height="3" fill="rgb(82,82,76)"/><rect x="45" y="0" width="3" height="3" fill="rgb(82,82,76)"/><rect x="48" y="0" width="3" height="3" fill="rgb(82,82,76)"/><rect x="51" y="0" width="3" height="3" fill="rgb(145,145,139)"/><rect x="54" y="0" width="3" height="3" fill="rgb(24,24,18)"/><rect x="57" y="0" width="3" height="3" fill="rgb(82,82,76)"/><rect x="60" y="0" width="3" height="3" fill="rgb(92,92,86)"/><rect x="63" y="0" width="3" height="3" fill="rgb(72,72,66)"/><rect x="66" y="0" width="3" height="3" fill="rgb(82,82,76)"/><rect x="69" y="0" width="3" height="3" fill="rgb(82,82,76)"/><rect x="72" y="0" width="3" height="3" fill="rgb(60,60,54)"/><rect x="75" y="0" width="3" height="3" fill="rgb(82,82,76)"/><rect x="78" y="0" width="3" height="3" fill="rgb(24,24,18)"/><rect x="81" y="0" width="3" height="3" fill="rgb(82,82,76)"/><rect x="84" y="0" width="3" height="3" fill="rgb(82,82,76)"/><rect x="87" y="0" width="3" height="3" fill="rgb(82,82,76)"/><rect x="90" y="0" width="3" height="3" fill="rgb(82,82,76)"/><rect x="93" y="0" width="3" height="3" fill="rgb(12,12,6)"/><rect x="96" y="0" width="3" height="3" fill="rgb(82,82,76)"/><rect x="99" y="0" width="3" height="3" fill="rgb(82,82,76)"/><rect x="102" y="0" width="3" height="3" fill="rgb(82,82,76)"/><rect x="105" y="0" width="3" height="3" fill="rgb(82,82,76)"/><rect x="108" y="0" width="3" height="3" fill="rgb(72,72,66)"/><rect x="111" y="0" width="3" height="3" fill="rgb(24,24,18)"/><rect x="114" y="0" width="3" height="3" fill="rgb(82,82,76)"/><rect x="117" y="0" width="3" height="3" fill="rgb(109,109,103)"/><rect x="120" y="0" width="3" height="3" fill="rgb(24,24,18)"/><rect x="123" y="0" width="3" height="3" fill="rgb(92,92,86)"/><rect x="126" y="0" width="3" height="3" fill="rgb(60,60,54)"/><rect x="129" y="0" width="3" height="3" fill="rgb(72,72,66)"/><rect x="132" y="0" width="3" height="3" fill="rgb(72,72,66)"/><rect x="135" y="0" width="3" height="3" fill="rgb(82,82,76)"/><rect x="138" y="0" width="3" height="3" fill="rgb(48,48,42)"/><rect x="0" y="3" width="3" height="3" fill="rgb(60,60,54)"/><rect x="3" y="3" width="3" height="3" fill="rgb(92,92,86)"/><rect x="6" y="3" width="3" height="3" fill="rgb(145,145,139)"/><rect x="9" y="3" width="3" height="3" fill="rgb(82,82,76)"/><rect x="12" y="3" width="3" height="3" fill="rgb(92,92,86)"/><rect x="15" y="3" width="3" height="3" fill="rgb(109,109,103)"/><rect x="18" y="3" width="3" height="3" fill="rgb(92,92,86)"/><rect x="21" y="3" width="3" height="3" fill="rgb(24,24,18)"/><rect x="24" y="3" width="3" height="3" fill="rgb(24,24,18)"/><rect x="27" y="3" width="3" height="3" fill="rgb(72,72,66)"/><rect x="30" y="3" width="3" height="3" fill="rgb(12,12,6)"/><rect x="33" y="3" width="3" height="3" fill="rgb(82,82,76)"/><rect x="36" y="3" width="3" height="3" fill="rgb(145,145,139)"/><rect x="39" y="3" width="3" height="3" fill="rgb(82,82,76)"/><rect x="42" y="3" width="3" height="3" fill="rgb(82,82,76)"/><rect x="45" y="3" width="3" height="3" fill="rgb(109,109,103)"/><rect x="48" y="3" width="3" height="3" fill="rgb(92,92,86)"/><rect x="51" y="3" width="3" height="3" fill="rgb(82,82,76)"/><rect x="54" y="3" width="3" height="3" fill="rgb(60,60,54)"/><rect x="57" y="3" width="3" height="3" fill="rgb(24,24,18)"/><rect x="60" y="3" width="3" height="3" fill="rgb(24,24,18)"/><rect x="63" y="3" width="3" height="3" fill="rgb(60,60,54)"/><rect x="66" y="3" width="3" height="3" fill="rgb(12,12,6)"/><rect x="69" y="3" width="3" height="3" fill="rgb(109,109,103)"/><rect x="72" y="3" width="3" height="3" fill="rgb(82,82,76)"/><rect x="75" y="3" width="3" height="3" fill="rgb(48,48,42)"/><rect x="78" y="3" width="3" height="3" fill="rgb(48,48,42)"/><rect x="81" y="3" width="3" height="3" fill="rgb(72,72,66)"/><rect x="84" y="3" width="3" height="3" fill="rgb(145,145,139)"/><rect x="87" y="3" width="3" height="3" fill="rgb(82,82,76)"/><rect x="90" y="3" width="3" height="3" fill="rgb(92,92,86)"/><rect x="93" y="3" width="3" height="3" fill="rgb(72,72,66)"/><rect x="96" y="3" width="3" height="3" fill="rgb(48,48,42)"/><rect x="99" y="3" width="3" height="3" fill="rgb(109,109,103)"/><rect x="102" y="3" width="3" height="3" fill="rgb(82,82,76)"/><rect x="105" y="3" width="3" height="3" fill="rgb(82,82,76)"/><rect x="108" y="3" width="3" height="3" fill="rgb(109,109,103)"/><rect x="111" y="3" width="3" height="3" fill="rgb(24,24,18)"/><rect x="114" y="3" width="3" height="3" fill="rgb(82,82,76)"/><rect x="117" y="3" width="3" height="3" fill="rgb(92,92,86)"/><rect x="120" y="3" width="3" height="3" fill="rgb(60,60,54)"/><rect x="123" y="3" width="3" height="3" fill="rgb(60,60,54)"/><rect x="126" y="3" width="3" height="3" fill="rgb(24,24,18)"/><rect x="129" y="3" width="3" height="3" fill="rgb(82,82,76)"/><rect x="132" y="3" width="3" height="3" fill="rgb(82,82,76)"/><rect x="135" y="3" width="3" height="3" fill="rgb(145,145,139)"/><rect x="138" y="3" width="3" height="3" fill="rgb(82,82,76)"/><rect x="0" y="6" width="3" height="3" fill="rgb(145,145,139)"/><rect x="3" y="6" width="3" height="3" fill="rgb(92,92,86)"/><rect x="6" y="6" width="3" height="3" fill="rgb(48,48,42)"/><rect x="9" y="6" width="3" height="3" fill="rgb(109,109,103)"/><rect x="12" y="6" width="3" height="3" fill="rgb(24,24,18)"/><rect x="15" y="6" width="3" height="3" fill="rgb(82,82,76)"/><rect x="18" y="6" width="3" height="3" fill="rgb(82,82,76)"/><rect x="21" y="6" width="3" height="3" fill="rgb(60,60,54)"/><rect x="24" y="6" width="3" height="3" fill="rgb(82,82,76)"/><rect x="27" y="6" width="3" height="3" fill="rgb(92,92,86)"/><rect x="30" y="6" width="3" height="3" fill="rgb(48,48,42)"/><rect x="33" y="6" width="3" height="3" fill="rgb(48,48,42)"/><rect x="36" y="6" width="3" height="3" fill="rgb(60,60,54)"/><rect x="39" y="6" width="3" height="3" fill="rgb(82,82,76)"/><rect x="42" y="6" width="3" height="3" fill="rgb(48,48,42)"/><rect x="45" y="6" width="3" height="3" fill="rgb(92,92,86)"/><rect x="48" y="6" width="3" height="3" fill="rgb(48,48,42)"/><rect x="51" y="6" width="3" height="3" fill="rgb(60,60,54)"/><rect x="54" y="6" width="3" height="3" fill="rgb(48,48,42)"/><rect x="57" y="6" width="3" height="3" fill="rgb(82,82,76)"/><rect x="60" y="6" width="3" height="3" fill="rgb(82,82,76)"/><rect x="63" y="6" width="3" height="3" fill="rgb(145,145,139)"/><rect x="66" y="6" width="3" height="3" fill="rgb(82,82,76)"/><rect x="69" y="6" width="3" height="3" fill="rgb(82,82,76)"/><rect x="72" y="6" width="3" height="3" fill="rgb(82,82,76)"/><rect x="75" y="6" width="3" height="3" fill="rgb(109,109,103)"/><rect x="78" y="6" width="3" height="3" fill="rgb(24,24,18)"/><rect x="81" y="6" width="3" height="3" fill="rgb(82,82,76)"/><rect x="84" y="6" width="3" height="3" fill="rgb(24,24,18)"/><rect x="87" y="6" width="3" height="3" fill="rgb(82,82,76)"/><rect x="90" y="6" width="3" height="3" fill="rgb(72,72,66)"/><rect x="93" y="6" width="3" height="3" fill="rgb(72,72,66)"/><rect x="96" y="6" width="3" height="3" fill="rgb(24,24,18)"/><rect x="99" y="6" width="3" height="3" fill="rgb(24,24,18)"/><rect x="102" y="6" width="3" height="3" fill="rgb(82,82,76)"/><rect x="105" y="6" width="3" height="3" fill="rgb(82,82,76)"/><rect x="108" y="6" width="3" height="3" fill="rgb(82,82,76)"/><rect x="111" y="6" width="3" height="3" fill="rgb(60,60,54)"/><rect x="114" y="6" width="3" height="3" fill="rgb(92,92,86)"/><rect x="117" y="6" width="3" height="3" fill="rgb(82,82,76)"/><rect x="120" y="6" width="3" height="3" fill="rgb(82,82,76)"/><rect x="123" y="6" width="3" height="3" fill="rgb(82,82,76)"/><rect x="126" y="6" width="3" height="3" fill="rgb(48,48,42)"/><rect x="129" y="6" width="3" height="3" fill="rgb(72,72,66)"/><rect x="132" y="6" width="3" height="3" fill="rgb(82,82,76)"/><rect x="135" y="6" width="3" height="3" fill="rgb(109,109,103)"/><rect x="138" y="6" width="3" height="3" fill="rgb(82,82,76)"/></g><g id="zp1_l"><rect x="0" y="0" width="3" height="3" fill="rgb(194,194,194)"/><rect x="3" y="0" width="3" height="3" fill="rgb(246,246,246)"/><rect x="6" y="0" width="3" height="3" fill="rgb(210,210,210)"/><rect x="9" y="0" width="3" height="3" fill="rgb(174,174,174)"/><rect x="12" y="0" width="3" height="3" fill="rgb(194,194,194)"/><rect x="15" y="0" width="3" height="3" fill="rgb(147,147,147)"/><rect x="18" y="0" width="3" height="3" fill="rgb(194,194,194)"/><rect x="21" y="0" width="3" height="3" fill="rgb(246,246,246)"/><rect x="24" y="0" width="3" height="3" fill="rgb(237,237,237)"/><rect x="27" y="0" width="3" height="3" fill="rgb(219,219,219)"/><rect x="30" y="0" width="3" height="3" fill="rgb(194,194,194)"/><rect x="33" y="0" width="3" height="3" fill="rgb(194,194,194)"/><rect x="36" y="0" width="3" height="3" fill="rgb(147,147,147)"/><rect x="39" y="0" width="3" height="3" fill="rgb(194,194,194)"/><rect x="42" y="0" width="3" height="3" fill="rgb(237,237,237)"/><rect x="45" y="0" width="3" height="3" fill="rgb(194,194,194)"/><rect x="48" y="0" width="3" height="3" fill="rgb(194,194,194)"/><rect x="51" y="0" width="3" height="3" fill="rgb(194,194,194)"/><rect x="54" y="0" width="3" height="3" fill="rgb(219,219,219)"/><rect x="57" y="0" width="3" height="3" fill="rgb(246,246,246)"/><rect x="60" y="0" width="3" height="3" fill="rgb(194,194,194)"/><rect x="63" y="0" width="3" height="3" fill="rgb(246,246,246)"/><rect x="66" y="0" width="3" height="3" fill="rgb(219,219,219)"/><rect x="69" y="0" width="3" height="3" fill="rgb(194,194,194)"/><rect x="72" y="0" width="3" height="3" fill="rgb(201,201,201)"/><rect x="75" y="0" width="3" height="3" fill="rgb(201,201,201)"/><rect x="0" y="3" width="3" height="3" fill="rgb(246,246,246)"/><rect x="3" y="3" width="3" height="3" fill="rgb(147,147,147)"/><rect x="6" y="3" width="3" height="3" fill="rgb(194,194,194)"/><rect x="9" y="3" width="3" height="3" fill="rgb(194,194,194)"/><rect x="12" y="3" width="3" height="3" fill="rgb(194,194,194)"/><rect x="15" y="3" width="3" height="3" fill="rgb(194,194,194)"/><rect x="18" y="3" width="3" height="3" fill="rgb(219,219,219)"/><rect x="21" y="3" width="3" height="3" fill="rgb(194,194,194)"/><rect x="24" y="3" width="3" height="3" fill="rgb(219,219,219)"/><rect x="27" y="3" width="3" height="3" fill="rgb(219,219,219)"/><rect x="30" y="3" width="3" height="3" fill="rgb(194,194,194)"/><rect x="33" y="3" width="3" height="3" fill="rgb(174,174,174)"/><rect x="36" y="3" width="3" height="3" fill="rgb(194,194,194)"/><rect x="39" y="3" width="3" height="3" fill="rgb(210,210,210)"/><rect x="42" y="3" width="3" height="3" fill="rgb(237,237,237)"/><rect x="45" y="3" width="3" height="3" fill="rgb(194,194,194)"/><rect x="48" y="3" width="3" height="3" fill="rgb(194,194,194)"/><rect x="51" y="3" width="3" height="3" fill="rgb(194,194,194)"/><rect x="54" y="3" width="3" height="3" fill="rgb(194,194,194)"/><rect x="57" y="3" width="3" height="3" fill="rgb(194,194,194)"/><rect x="60" y="3" width="3" height="3" fill="rgb(147,147,147)"/><rect x="63" y="3" width="3" height="3" fill="rgb(194,194,194)"/><rect x="66" y="3" width="3" height="3" fill="rgb(210,210,210)"/><rect x="69" y="3" width="3" height="3" fill="rgb(246,246,246)"/><rect x="72" y="3" width="3" height="3" fill="rgb(194,194,194)"/><rect x="75" y="3" width="3" height="3" fill="rgb(194,194,194)"/><rect x="0" y="6" width="3" height="3" fill="rgb(194,194,194)"/><rect x="3" y="6" width="3" height="3" fill="rgb(246,246,246)"/><rect x="6" y="6" width="3" height="3" fill="rgb(147,147,147)"/><rect x="9" y="6" width="3" height="3" fill="rgb(237,237,237)"/><rect x="12" y="6" width="3" height="3" fill="rgb(194,194,194)"/><rect x="15" y="6" width="3" height="3" fill="rgb(201,201,201)"/><rect x="18" y="6" width="3" height="3" fill="rgb(194,194,194)"/><rect x="21" y="6" width="3" height="3" fill="rgb(201,201,201)"/><rect x="24" y="6" width="3" height="3" fill="rgb(237,237,237)"/><rect x="27" y="6" width="3" height="3" fill="rgb(187,187,187)"/><rect x="30" y="6" width="3" height="3" fill="rgb(147,147,147)"/><rect x="33" y="6" width="3" height="3" fill="rgb(194,194,194)"/><rect x="36" y="6" width="3" height="3" fill="rgb(194,194,194)"/><rect x="39" y="6" width="3" height="3" fill="rgb(237,237,237)"/><rect x="42" y="6" width="3" height="3" fill="rgb(210,210,210)"/><rect x="45" y="6" width="3" height="3" fill="rgb(194,194,194)"/><rect x="48" y="6" width="3" height="3" fill="rgb(194,194,194)"/><rect x="51" y="6" width="3" height="3" fill="rgb(147,147,147)"/><rect x="54" y="6" width="3" height="3" fill="rgb(219,219,219)"/><rect x="57" y="6" width="3" height="3" fill="rgb(194,194,194)"/><rect x="60" y="6" width="3" height="3" fill="rgb(194,194,194)"/><rect x="63" y="6" width="3" height="3" fill="rgb(194,194,194)"/><rect x="66" y="6" width="3" height="3" fill="rgb(237,237,237)"/><rect x="69" y="6" width="3" height="3" fill="rgb(194,194,194)"/><rect x="72" y="6" width="3" height="3" fill="rgb(210,210,210)"/><rect x="75" y="6" width="3" height="3" fill="rgb(201,201,201)"/><rect x="0" y="9" width="3" height="3" fill="rgb(206,206,206)"/><rect x="3" y="9" width="3" height="3" fill="rgb(244,244,244)"/><rect x="6" y="9" width="3" height="3" fill="rgb(214,214,214)"/><rect x="9" y="9" width="3" height="3" fill="rgb(218,218,218)"/><rect x="12" y="9" width="3" height="3" fill="rgb(214,214,214)"/><rect x="15" y="9" width="3" height="3" fill="rgb(228,228,228)"/><rect x="18" y="9" width="3" height="3" fill="rgb(218,218,218)"/><rect x="21" y="9" width="3" height="3" fill="rgb(218,218,218)"/><rect x="24" y="9" width="3" height="3" fill="rgb(237,237,237)"/><rect x="27" y="9" width="3" height="3" fill="rgb(218,218,218)"/><rect x="30" y="9" width="3" height="3" fill="rgb(218,218,218)"/><rect x="33" y="9" width="3" height="3" fill="rgb(218,218,218)"/><rect x="36" y="9" width="3" height="3" fill="rgb(218,218,218)"/><rect x="39" y="9" width="3" height="3" fill="rgb(244,244,244)"/><rect x="42" y="9" width="3" height="3" fill="rgb(237,237,237)"/><rect x="45" y="9" width="3" height="3" fill="rgb(222,222,222)"/><rect x="48" y="9" width="3" height="3" fill="rgb(218,218,218)"/><rect x="51" y="9" width="3" height="3" fill="rgb(233,233,233)"/><rect x="54" y="9" width="3" height="3" fill="rgb(244,244,244)"/><rect x="57" y="9" width="3" height="3" fill="rgb(218,218,218)"/><rect x="60" y="9" width="3" height="3" fill="rgb(214,214,214)"/><rect x="63" y="9" width="3" height="3" fill="rgb(214,214,214)"/><rect x="66" y="9" width="3" height="3" fill="rgb(237,237,237)"/><rect x="69" y="9" width="3" height="3" fill="rgb(190,190,190)"/><rect x="72" y="9" width="3" height="3" fill="rgb(206,206,206)"/><rect x="75" y="9" width="3" height="3" fill="rgb(233,233,233)"/></g><g id="zp1_d"><rect x="0" y="0" width="3" height="3" fill="rgb(57,57,51)"/><rect x="3" y="0" width="3" height="3" fill="rgb(8,8,2)"/><rect x="6" y="0" width="3" height="3" fill="rgb(42,42,36)"/><rect x="9" y="0" width="3" height="3" fill="rgb(76,76,70)"/><rect x="12" y="0" width="3" height="3" fill="rgb(57,57,51)"/><rect x="15" y="0" width="3" height="3" fill="rgb(101,101,95)"/><rect x="18" y="0" width="3" height="3" fill="rgb(57,57,51)"/><rect x="21" y="0" width="3" height="3" fill="rgb(8,8,2)"/><rect x="24" y="0" width="3" height="3" fill="rgb(16,16,10)"/><rect x="27" y="0" width="3" height="3" fill="rgb(33,33,27)"/><rect x="30" y="0" width="3" height="3" fill="rgb(57,57,51)"/><rect x="33" y="0" width="3" height="3" fill="rgb(57,57,51)"/><rect x="36" y="0" width="3" height="3" fill="rgb(101,101,95)"/><rect x="39" y="0" width="3" height="3" fill="rgb(57,57,51)"/><rect x="42" y="0" width="3" height="3" fill="rgb(16,16,10)"/><rect x="45" y="0" width="3" height="3" fill="rgb(57,57,51)"/><rect x="48" y="0" width="3" height="3" fill="rgb(57,57,51)"/><rect x="51" y="0" width="3" height="3" fill="rgb(57,57,51)"/><rect x="54" y="0" width="3" height="3" fill="rgb(33,33,27)"/><rect x="57" y="0" width="3" height="3" fill="rgb(8,8,2)"/><rect x="60" y="0" width="3" height="3" fill="rgb(57,57,51)"/><rect x="63" y="0" width="3" height="3" fill="rgb(8,8,2)"/><rect x="66" y="0" width="3" height="3" fill="rgb(33,33,27)"/><rect x="69" y="0" width="3" height="3" fill="rgb(57,57,51)"/><rect x="72" y="0" width="3" height="3" fill="rgb(50,50,44)"/><rect x="75" y="0" width="3" height="3" fill="rgb(50,50,44)"/><rect x="0" y="3" width="3" height="3" fill="rgb(8,8,2)"/><rect x="3" y="3" width="3" height="3" fill="rgb(101,101,95)"/><rect x="6" y="3" width="3" height="3" fill="rgb(57,57,51)"/><rect x="9" y="3" width="3" height="3" fill="rgb(57,57,51)"/><rect x="12" y="3" width="3" height="3" fill="rgb(57,57,51)"/><rect x="15" y="3" width="3" height="3" fill="rgb(57,57,51)"/><rect x="18" y="3" width="3" height="3" fill="rgb(33,33,27)"/><rect x="21" y="3" width="3" height="3" fill="rgb(57,57,51)"/><rect x="24" y="3" width="3" height="3" fill="rgb(33,33,27)"/><rect x="27" y="3" width="3" height="3" fill="rgb(33,33,27)"/><rect x="30" y="3" width="3" height="3" fill="rgb(57,57,51)"/><rect x="33" y="3" width="3" height="3" fill="rgb(76,76,70)"/><rect x="36" y="3" width="3" height="3" fill="rgb(57,57,51)"/><rect x="39" y="3" width="3" height="3" fill="rgb(42,42,36)"/><rect x="42" y="3" width="3" height="3" fill="rgb(16,16,10)"/><rect x="45" y="3" width="3" height="3" fill="rgb(57,57,51)"/><rect x="48" y="3" width="3" height="3" fill="rgb(57,57,51)"/><rect x="51" y="3" width="3" height="3" fill="rgb(57,57,51)"/><rect x="54" y="3" width="3" height="3" fill="rgb(57,57,51)"/><rect x="57" y="3" width="3" height="3" fill="rgb(57,57,51)"/><rect x="60" y="3" width="3" height="3" fill="rgb(101,101,95)"/><rect x="63" y="3" width="3" height="3" fill="rgb(57,57,51)"/><rect x="66" y="3" width="3" height="3" fill="rgb(42,42,36)"/><rect x="69" y="3" width="3" height="3" fill="rgb(8,8,2)"/><rect x="72" y="3" width="3" height="3" fill="rgb(57,57,51)"/><rect x="75" y="3" width="3" height="3" fill="rgb(57,57,51)"/><rect x="0" y="6" width="3" height="3" fill="rgb(57,57,51)"/><rect x="3" y="6" width="3" height="3" fill="rgb(8,8,2)"/><rect x="6" y="6" width="3" height="3" fill="rgb(101,101,95)"/><rect x="9" y="6" width="3" height="3" fill="rgb(16,16,10)"/><rect x="12" y="6" width="3" height="3" fill="rgb(57,57,51)"/><rect x="15" y="6" width="3" height="3" fill="rgb(50,50,44)"/><rect x="18" y="6" width="3" height="3" fill="rgb(57,57,51)"/><rect x="21" y="6" width="3" height="3" fill="rgb(50,50,44)"/><rect x="24" y="6" width="3" height="3" fill="rgb(16,16,10)"/><rect x="27" y="6" width="3" height="3" fill="rgb(64,64,58)"/><rect x="30" y="6" width="3" height="3" fill="rgb(101,101,95)"/><rect x="33" y="6" width="3" height="3" fill="rgb(57,57,51)"/><rect x="36" y="6" width="3" height="3" fill="rgb(57,57,51)"/><rect x="39" y="6" width="3" height="3" fill="rgb(16,16,10)"/><rect x="42" y="6" width="3" height="3" fill="rgb(42,42,36)"/><rect x="45" y="6" width="3" height="3" fill="rgb(57,57,51)"/><rect x="48" y="6" width="3" height="3" fill="rgb(57,57,51)"/><rect x="51" y="6" width="3" height="3" fill="rgb(101,101,95)"/><rect x="54" y="6" width="3" height="3" fill="rgb(33,33,27)"/><rect x="57" y="6" width="3" height="3" fill="rgb(57,57,51)"/><rect x="60" y="6" width="3" height="3" fill="rgb(57,57,51)"/><rect x="63" y="6" width="3" height="3" fill="rgb(57,57,51)"/><rect x="66" y="6" width="3" height="3" fill="rgb(16,16,10)"/><rect x="69" y="6" width="3" height="3" fill="rgb(57,57,51)"/><rect x="72" y="6" width="3" height="3" fill="rgb(42,42,36)"/><rect x="75" y="6" width="3" height="3" fill="rgb(50,50,44)"/><rect x="0" y="9" width="3" height="3" fill="rgb(45,45,39)"/><rect x="3" y="9" width="3" height="3" fill="rgb(10,10,4)"/><rect x="6" y="9" width="3" height="3" fill="rgb(38,38,32)"/><rect x="9" y="9" width="3" height="3" fill="rgb(34,34,28)"/><rect x="12" y="9" width="3" height="3" fill="rgb(38,38,32)"/><rect x="15" y="9" width="3" height="3" fill="rgb(25,25,19)"/><rect x="18" y="9" width="3" height="3" fill="rgb(34,34,28)"/><rect x="21" y="9" width="3" height="3" fill="rgb(34,34,28)"/><rect x="24" y="9" width="3" height="3" fill="rgb(16,16,10)"/><rect x="27" y="9" width="3" height="3" fill="rgb(34,34,28)"/><rect x="30" y="9" width="3" height="3" fill="rgb(34,34,28)"/><rect x="33" y="9" width="3" height="3" fill="rgb(34,34,28)"/><rect x="36" y="9" width="3" height="3" fill="rgb(34,34,28)"/><rect x="39" y="9" width="3" height="3" fill="rgb(10,10,4)"/><rect x="42" y="9" width="3" height="3" fill="rgb(16,16,10)"/><rect x="45" y="9" width="3" height="3" fill="rgb(30,30,24)"/><rect x="48" y="9" width="3" height="3" fill="rgb(34,34,28)"/><rect x="51" y="9" width="3" height="3" fill="rgb(20,20,14)"/><rect x="54" y="9" width="3" height="3" fill="rgb(10,10,4)"/><rect x="57" y="9" width="3" height="3" fill="rgb(34,34,28)"/><rect x="60" y="9" width="3" height="3" fill="rgb(38,38,32)"/><rect x="63" y="9" width="3" height="3" fill="rgb(38,38,32)"/><rect x="66" y="9" width="3" height="3" fill="rgb(16,16,10)"/><rect x="69" y="9" width="3" height="3" fill="rgb(61,61,55)"/><rect x="72" y="9" width="3" height="3" fill="rgb(45,45,39)"/><rect x="75" y="9" width="3" height="3" fill="rgb(20,20,14)"/></g><g id="zp2_l"><rect x="0" y="0" width="3" height="3" fill="rgb(204,204,204)"/><rect x="3" y="0" width="3" height="3" fill="rgb(168,168,168)"/><rect x="6" y="0" width="3" height="3" fill="rgb(168,168,168)"/><rect x="9" y="0" width="3" height="3" fill="rgb(168,168,168)"/><rect x="12" y="0" width="3" height="3" fill="rgb(242,242,242)"/><rect x="15" y="0" width="3" height="3" fill="rgb(168,168,168)"/><rect x="18" y="0" width="3" height="3" fill="rgb(178,178,178)"/><rect x="21" y="0" width="3" height="3" fill="rgb(229,229,229)"/><rect x="24" y="0" width="3" height="3" fill="rgb(204,204,204)"/><rect x="27" y="0" width="3" height="3" fill="rgb(178,178,178)"/><rect x="30" y="0" width="3" height="3" fill="rgb(168,168,168)"/><rect x="33" y="0" width="3" height="3" fill="rgb(242,242,242)"/><rect x="36" y="0" width="3" height="3" fill="rgb(140,140,140)"/><rect x="39" y="0" width="3" height="3" fill="rgb(168,168,168)"/><rect x="42" y="0" width="3" height="3" fill="rgb(168,168,168)"/><rect x="45" y="0" width="3" height="3" fill="rgb(168,168,168)"/><rect x="48" y="0" width="3" height="3" fill="rgb(168,168,168)"/><rect x="51" y="0" width="3" height="3" fill="rgb(242,242,242)"/><rect x="54" y="0" width="3" height="3" fill="rgb(229,229,229)"/><rect x="57" y="0" width="3" height="3" fill="rgb(168,168,168)"/><rect x="60" y="0" width="3" height="3" fill="rgb(168,168,168)"/><rect x="63" y="0" width="3" height="3" fill="rgb(168,168,168)"/><rect x="66" y="0" width="3" height="3" fill="rgb(168,168,168)"/><rect x="69" y="0" width="3" height="3" fill="rgb(168,168,168)"/><rect x="72" y="0" width="3" height="3" fill="rgb(242,242,242)"/><rect x="75" y="0" width="3" height="3" fill="rgb(204,204,204)"/><rect x="78" y="0" width="3" height="3" fill="rgb(168,168,168)"/><rect x="81" y="0" width="3" height="3" fill="rgb(102,102,102)"/><rect x="84" y="0" width="3" height="3" fill="rgb(242,242,242)"/><rect x="87" y="0" width="3" height="3" fill="rgb(191,191,191)"/><rect x="90" y="0" width="3" height="3" fill="rgb(191,191,191)"/><rect x="93" y="0" width="3" height="3" fill="rgb(102,102,102)"/><rect x="96" y="0" width="3" height="3" fill="rgb(204,204,204)"/><rect x="99" y="0" width="3" height="3" fill="rgb(102,102,102)"/><rect x="102" y="0" width="3" height="3" fill="rgb(204,204,204)"/><rect x="105" y="0" width="3" height="3" fill="rgb(178,178,178)"/><rect x="108" y="0" width="3" height="3" fill="rgb(168,168,168)"/><rect x="111" y="0" width="3" height="3" fill="rgb(168,168,168)"/><rect x="114" y="0" width="3" height="3" fill="rgb(229,229,229)"/><rect x="117" y="0" width="3" height="3" fill="rgb(102,102,102)"/><rect x="120" y="0" width="3" height="3" fill="rgb(168,168,168)"/><rect x="123" y="0" width="3" height="3" fill="rgb(168,168,168)"/><rect x="126" y="0" width="3" height="3" fill="rgb(191,191,191)"/><rect x="129" y="0" width="3" height="3" fill="rgb(168,168,168)"/><rect x="132" y="0" width="3" height="3" fill="rgb(204,204,204)"/><rect x="135" y="0" width="3" height="3" fill="rgb(191,191,191)"/><rect x="138" y="0" width="3" height="3" fill="rgb(168,168,168)"/><rect x="141" y="0" width="3" height="3" fill="rgb(168,168,168)"/><rect x="144" y="0" width="3" height="3" fill="rgb(242,242,242)"/><rect x="147" y="0" width="3" height="3" fill="rgb(168,168,168)"/><rect x="150" y="0" width="3" height="3" fill="rgb(168,168,168)"/><rect x="153" y="0" width="3" height="3" fill="rgb(168,168,168)"/><rect x="156" y="0" width="3" height="3" fill="rgb(168,168,168)"/><rect x="159" y="0" width="3" height="3" fill="rgb(204,204,204)"/><rect x="162" y="0" width="3" height="3" fill="rgb(204,204,204)"/><rect x="0" y="3" width="3" height="3" fill="rgb(168,168,168)"/><rect x="3" y="3" width="3" height="3" fill="rgb(102,102,102)"/><rect x="6" y="3" width="3" height="3" fill="rgb(191,191,191)"/><rect x="9" y="3" width="3" height="3" fill="rgb(168,168,168)"/><rect x="12" y="3" width="3" height="3" fill="rgb(168,168,168)"/><rect x="15" y="3" width="3" height="3" fill="rgb(242,242,242)"/><rect x="18" y="3" width="3" height="3" fill="rgb(168,168,168)"/><rect x="21" y="3" width="3" height="3" fill="rgb(229,229,229)"/><rect x="24" y="3" width="3" height="3" fill="rgb(168,168,168)"/><rect x="27" y="3" width="3" height="3" fill="rgb(140,140,140)"/><rect x="30" y="3" width="3" height="3" fill="rgb(168,168,168)"/><rect x="33" y="3" width="3" height="3" fill="rgb(140,140,140)"/><rect x="36" y="3" width="3" height="3" fill="rgb(168,168,168)"/><rect x="39" y="3" width="3" height="3" fill="rgb(168,168,168)"/><rect x="42" y="3" width="3" height="3" fill="rgb(242,242,242)"/><rect x="45" y="3" width="3" height="3" fill="rgb(178,178,178)"/><rect x="48" y="3" width="3" height="3" fill="rgb(168,168,168)"/><rect x="51" y="3" width="3" height="3" fill="rgb(102,102,102)"/><rect x="54" y="3" width="3" height="3" fill="rgb(229,229,229)"/><rect x="57" y="3" width="3" height="3" fill="rgb(168,168,168)"/><rect x="60" y="3" width="3" height="3" fill="rgb(191,191,191)"/><rect x="63" y="3" width="3" height="3" fill="rgb(204,204,204)"/><rect x="66" y="3" width="3" height="3" fill="rgb(178,178,178)"/><rect x="69" y="3" width="3" height="3" fill="rgb(229,229,229)"/><rect x="72" y="3" width="3" height="3" fill="rgb(204,204,204)"/><rect x="75" y="3" width="3" height="3" fill="rgb(242,242,242)"/><rect x="78" y="3" width="3" height="3" fill="rgb(191,191,191)"/><rect x="81" y="3" width="3" height="3" fill="rgb(168,168,168)"/><rect x="84" y="3" width="3" height="3" fill="rgb(204,204,204)"/><rect x="87" y="3" width="3" height="3" fill="rgb(204,204,204)"/><rect x="90" y="3" width="3" height="3" fill="rgb(168,168,168)"/><rect x="93" y="3" width="3" height="3" fill="rgb(229,229,229)"/><rect x="96" y="3" width="3" height="3" fill="rgb(140,140,140)"/><rect x="99" y="3" width="3" height="3" fill="rgb(168,168,168)"/><rect x="102" y="3" width="3" height="3" fill="rgb(168,168,168)"/><rect x="105" y="3" width="3" height="3" fill="rgb(168,168,168)"/><rect x="108" y="3" width="3" height="3" fill="rgb(178,178,178)"/><rect x="111" y="3" width="3" height="3" fill="rgb(168,168,168)"/><rect x="114" y="3" width="3" height="3" fill="rgb(229,229,229)"/><rect x="117" y="3" width="3" height="3" fill="rgb(168,168,168)"/><rect x="120" y="3" width="3" height="3" fill="rgb(168,168,168)"/><rect x="123" y="3" width="3" height="3" fill="rgb(168,168,168)"/><rect x="126" y="3" width="3" height="3" fill="rgb(140,140,140)"/><rect x="129" y="3" width="3" height="3" fill="rgb(242,242,242)"/><rect x="132" y="3" width="3" height="3" fill="rgb(242,242,242)"/><rect x="135" y="3" width="3" height="3" fill="rgb(229,229,229)"/><rect x="138" y="3" width="3" height="3" fill="rgb(102,102,102)"/><rect x="141" y="3" width="3" height="3" fill="rgb(229,229,229)"/><rect x="144" y="3" width="3" height="3" fill="rgb(102,102,102)"/><rect x="147" y="3" width="3" height="3" fill="rgb(140,140,140)"/><rect x="150" y="3" width="3" height="3" fill="rgb(168,168,168)"/><rect x="153" y="3" width="3" height="3" fill="rgb(168,168,168)"/><rect x="156" y="3" width="3" height="3" fill="rgb(140,140,140)"/><rect x="159" y="3" width="3" height="3" fill="rgb(168,168,168)"/><rect x="162" y="3" width="3" height="3" fill="rgb(229,229,229)"/><rect x="0" y="6" width="3" height="3" fill="rgb(168,168,168)"/><rect x="3" y="6" width="3" height="3" fill="rgb(229,229,229)"/><rect x="6" y="6" width="3" height="3" fill="rgb(158,158,158)"/><rect x="9" y="6" width="3" height="3" fill="rgb(191,191,191)"/><rect x="12" y="6" width="3" height="3" fill="rgb(242,242,242)"/><rect x="15" y="6" width="3" height="3" fill="rgb(158,158,158)"/><rect x="18" y="6" width="3" height="3" fill="rgb(168,168,168)"/><rect x="21" y="6" width="3" height="3" fill="rgb(229,229,229)"/><rect x="24" y="6" width="3" height="3" fill="rgb(140,140,140)"/><rect x="27" y="6" width="3" height="3" fill="rgb(242,242,242)"/><rect x="30" y="6" width="3" height="3" fill="rgb(229,229,229)"/><rect x="33" y="6" width="3" height="3" fill="rgb(178,178,178)"/><rect x="36" y="6" width="3" height="3" fill="rgb(168,168,168)"/><rect x="39" y="6" width="3" height="3" fill="rgb(140,140,140)"/><rect x="42" y="6" width="3" height="3" fill="rgb(168,168,168)"/><rect x="45" y="6" width="3" height="3" fill="rgb(102,102,102)"/><rect x="48" y="6" width="3" height="3" fill="rgb(168,168,168)"/><rect x="51" y="6" width="3" height="3" fill="rgb(168,168,168)"/><rect x="54" y="6" width="3" height="3" fill="rgb(191,191,191)"/><rect x="57" y="6" width="3" height="3" fill="rgb(168,168,168)"/><rect x="60" y="6" width="3" height="3" fill="rgb(168,168,168)"/><rect x="63" y="6" width="3" height="3" fill="rgb(158,158,158)"/><rect x="66" y="6" width="3" height="3" fill="rgb(168,168,168)"/><rect x="69" y="6" width="3" height="3" fill="rgb(140,140,140)"/><rect x="72" y="6" width="3" height="3" fill="rgb(168,168,168)"/><rect x="75" y="6" width="3" height="3" fill="rgb(168,168,168)"/><rect x="78" y="6" width="3" height="3" fill="rgb(229,229,229)"/><rect x="81" y="6" width="3" height="3" fill="rgb(242,242,242)"/><rect x="84" y="6" width="3" height="3" fill="rgb(168,168,168)"/><rect x="87" y="6" width="3" height="3" fill="rgb(229,229,229)"/><rect x="90" y="6" width="3" height="3" fill="rgb(242,242,242)"/><rect x="93" y="6" width="3" height="3" fill="rgb(191,191,191)"/><rect x="96" y="6" width="3" height="3" fill="rgb(242,242,242)"/><rect x="99" y="6" width="3" height="3" fill="rgb(168,168,168)"/><rect x="102" y="6" width="3" height="3" fill="rgb(158,158,158)"/><rect x="105" y="6" width="3" height="3" fill="rgb(204,204,204)"/><rect x="108" y="6" width="3" height="3" fill="rgb(140,140,140)"/><rect x="111" y="6" width="3" height="3" fill="rgb(178,178,178)"/><rect x="114" y="6" width="3" height="3" fill="rgb(204,204,204)"/><rect x="117" y="6" width="3" height="3" fill="rgb(168,168,168)"/><rect x="120" y="6" width="3" height="3" fill="rgb(191,191,191)"/><rect x="123" y="6" width="3" height="3" fill="rgb(178,178,178)"/><rect x="126" y="6" width="3" height="3" fill="rgb(178,178,178)"/><rect x="129" y="6" width="3" height="3" fill="rgb(140,140,140)"/><rect x="132" y="6" width="3" height="3" fill="rgb(168,168,168)"/><rect x="135" y="6" width="3" height="3" fill="rgb(229,229,229)"/><rect x="138" y="6" width="3" height="3" fill="rgb(191,191,191)"/><rect x="141" y="6" width="3" height="3" fill="rgb(168,168,168)"/><rect x="144" y="6" width="3" height="3" fill="rgb(168,168,168)"/><rect x="147" y="6" width="3" height="3" fill="rgb(168,168,168)"/><rect x="150" y="6" width="3" height="3" fill="rgb(204,204,204)"/><rect x="153" y="6" width="3" height="3" fill="rgb(168,168,168)"/><rect x="156" y="6" width="3" height="3" fill="rgb(178,178,178)"/><rect x="159" y="6" width="3" height="3" fill="rgb(140,140,140)"/><rect x="162" y="6" width="3" height="3" fill="rgb(204,204,204)"/><rect x="0" y="9" width="3" height="3" fill="rgb(202,202,202)"/><rect x="3" y="9" width="3" height="3" fill="rgb(202,202,202)"/><rect x="6" y="9" width="3" height="3" fill="rgb(224,224,224)"/><rect x="9" y="9" width="3" height="3" fill="rgb(224,224,224)"/><rect x="12" y="9" width="3" height="3" fill="rgb(209,209,209)"/><rect x="15" y="9" width="3" height="3" fill="rgb(247,247,247)"/><rect x="18" y="9" width="3" height="3" fill="rgb(202,202,202)"/><rect x="21" y="9" width="3" height="3" fill="rgb(191,191,191)"/><rect x="24" y="9" width="3" height="3" fill="rgb(247,247,247)"/><rect x="27" y="9" width="3" height="3" fill="rgb(202,202,202)"/><rect x="30" y="9" width="3" height="3" fill="rgb(202,202,202)"/><rect x="33" y="9" width="3" height="3" fill="rgb(202,202,202)"/><rect x="36" y="9" width="3" height="3" fill="rgb(209,209,209)"/><rect x="39" y="9" width="3" height="3" fill="rgb(202,202,202)"/><rect x="42" y="9" width="3" height="3" fill="rgb(209,209,209)"/><rect x="45" y="9" width="3" height="3" fill="rgb(196,196,196)"/><rect x="48" y="9" width="3" height="3" fill="rgb(209,209,209)"/><rect x="51" y="9" width="3" height="3" fill="rgb(224,224,224)"/><rect x="54" y="9" width="3" height="3" fill="rgb(229,229,229)"/><rect x="57" y="9" width="3" height="3" fill="rgb(202,202,202)"/><rect x="60" y="9" width="3" height="3" fill="rgb(216,216,216)"/><rect x="63" y="9" width="3" height="3" fill="rgb(216,216,216)"/><rect x="66" y="9" width="3" height="3" fill="rgb(209,209,209)"/><rect x="69" y="9" width="3" height="3" fill="rgb(202,202,202)"/><rect x="72" y="9" width="3" height="3" fill="rgb(202,202,202)"/><rect x="75" y="9" width="3" height="3" fill="rgb(202,202,202)"/><rect x="78" y="9" width="3" height="3" fill="rgb(224,224,224)"/><rect x="81" y="9" width="3" height="3" fill="rgb(202,202,202)"/><rect x="84" y="9" width="3" height="3" fill="rgb(202,202,202)"/><rect x="87" y="9" width="3" height="3" fill="rgb(229,229,229)"/><rect x="90" y="9" width="3" height="3" fill="rgb(202,202,202)"/><rect x="93" y="9" width="3" height="3" fill="rgb(224,224,224)"/><rect x="96" y="9" width="3" height="3" fill="rgb(202,202,202)"/><rect x="99" y="9" width="3" height="3" fill="rgb(163,163,163)"/><rect x="102" y="9" width="3" height="3" fill="rgb(202,202,202)"/><rect x="105" y="9" width="3" height="3" fill="rgb(247,247,247)"/><rect x="108" y="9" width="3" height="3" fill="rgb(224,224,224)"/><rect x="111" y="9" width="3" height="3" fill="rgb(202,202,202)"/><rect x="114" y="9" width="3" height="3" fill="rgb(204,204,204)"/><rect x="117" y="9" width="3" height="3" fill="rgb(239,239,239)"/><rect x="120" y="9" width="3" height="3" fill="rgb(186,186,186)"/><rect x="123" y="9" width="3" height="3" fill="rgb(186,186,186)"/><rect x="126" y="9" width="3" height="3" fill="rgb(196,196,196)"/><rect x="129" y="9" width="3" height="3" fill="rgb(202,202,202)"/><rect x="132" y="9" width="3" height="3" fill="rgb(209,209,209)"/><rect x="135" y="9" width="3" height="3" fill="rgb(204,204,204)"/><rect x="138" y="9" width="3" height="3" fill="rgb(202,202,202)"/><rect x="141" y="9" width="3" height="3" fill="rgb(202,202,202)"/><rect x="144" y="9" width="3" height="3" fill="rgb(202,202,202)"/><rect x="147" y="9" width="3" height="3" fill="rgb(202,202,202)"/><rect x="150" y="9" width="3" height="3" fill="rgb(202,202,202)"/><rect x="153" y="9" width="3" height="3" fill="rgb(196,196,196)"/><rect x="156" y="9" width="3" height="3" fill="rgb(202,202,202)"/><rect x="159" y="9" width="3" height="3" fill="rgb(202,202,202)"/><rect x="162" y="9" width="3" height="3" fill="rgb(191,191,191)"/></g><g id="zp2_d"><rect x="0" y="0" width="3" height="3" fill="rgb(48,48,42)"/><rect x="3" y="0" width="3" height="3" fill="rgb(82,82,76)"/><rect x="6" y="0" width="3" height="3" fill="rgb(82,82,76)"/><rect x="9" y="0" width="3" height="3" fill="rgb(82,82,76)"/><rect x="12" y="0" width="3" height="3" fill="rgb(12,12,6)"/><rect x="15" y="0" width="3" height="3" fill="rgb(82,82,76)"/><rect x="18" y="0" width="3" height="3" fill="rgb(72,72,66)"/><rect x="21" y="0" width="3" height="3" fill="rgb(24,24,18)"/><rect x="24" y="0" width="3" height="3" fill="rgb(48,48,42)"/><rect x="27" y="0" width="3" height="3" fill="rgb(72,72,66)"/><rect x="30" y="0" width="3" height="3" fill="rgb(82,82,76)"/><rect x="33" y="0" width="3" height="3" fill="rgb(12,12,6)"/><rect x="36" y="0" width="3" height="3" fill="rgb(109,109,103)"/><rect x="39" y="0" width="3" height="3" fill="rgb(82,82,76)"/><rect x="42" y="0" width="3" height="3" fill="rgb(82,82,76)"/><rect x="45" y="0" width="3" height="3" fill="rgb(82,82,76)"/><rect x="48" y="0" width="3" height="3" fill="rgb(82,82,76)"/><rect x="51" y="0" width="3" height="3" fill="rgb(12,12,6)"/><rect x="54" y="0" width="3" height="3" fill="rgb(24,24,18)"/><rect x="57" y="0" width="3" height="3" fill="rgb(82,82,76)"/><rect x="60" y="0" width="3" height="3" fill="rgb(82,82,76)"/><rect x="63" y="0" width="3" height="3" fill="rgb(82,82,76)"/><rect x="66" y="0" width="3" height="3" fill="rgb(82,82,76)"/><rect x="69" y="0" width="3" height="3" fill="rgb(82,82,76)"/><rect x="72" y="0" width="3" height="3" fill="rgb(12,12,6)"/><rect x="75" y="0" width="3" height="3" fill="rgb(48,48,42)"/><rect x="78" y="0" width="3" height="3" fill="rgb(82,82,76)"/><rect x="81" y="0" width="3" height="3" fill="rgb(145,145,139)"/><rect x="84" y="0" width="3" height="3" fill="rgb(12,12,6)"/><rect x="87" y="0" width="3" height="3" fill="rgb(60,60,54)"/><rect x="90" y="0" width="3" height="3" fill="rgb(60,60,54)"/><rect x="93" y="0" width="3" height="3" fill="rgb(145,145,139)"/><rect x="96" y="0" width="3" height="3" fill="rgb(48,48,42)"/><rect x="99" y="0" width="3" height="3" fill="rgb(145,145,139)"/><rect x="102" y="0" width="3" height="3" fill="rgb(48,48,42)"/><rect x="105" y="0" width="3" height="3" fill="rgb(72,72,66)"/><rect x="108" y="0" width="3" height="3" fill="rgb(82,82,76)"/><rect x="111" y="0" width="3" height="3" fill="rgb(82,82,76)"/><rect x="114" y="0" width="3" height="3" fill="rgb(24,24,18)"/><rect x="117" y="0" width="3" height="3" fill="rgb(145,145,139)"/><rect x="120" y="0" width="3" height="3" fill="rgb(82,82,76)"/><rect x="123" y="0" width="3" height="3" fill="rgb(82,82,76)"/><rect x="126" y="0" width="3" height="3" fill="rgb(60,60,54)"/><rect x="129" y="0" width="3" height="3" fill="rgb(82,82,76)"/><rect x="132" y="0" width="3" height="3" fill="rgb(48,48,42)"/><rect x="135" y="0" width="3" height="3" fill="rgb(60,60,54)"/><rect x="138" y="0" width="3" height="3" fill="rgb(82,82,76)"/><rect x="141" y="0" width="3" height="3" fill="rgb(82,82,76)"/><rect x="144" y="0" width="3" height="3" fill="rgb(12,12,6)"/><rect x="147" y="0" width="3" height="3" fill="rgb(82,82,76)"/><rect x="150" y="0" width="3" height="3" fill="rgb(82,82,76)"/><rect x="153" y="0" width="3" height="3" fill="rgb(82,82,76)"/><rect x="156" y="0" width="3" height="3" fill="rgb(82,82,76)"/><rect x="159" y="0" width="3" height="3" fill="rgb(48,48,42)"/><rect x="162" y="0" width="3" height="3" fill="rgb(48,48,42)"/><rect x="0" y="3" width="3" height="3" fill="rgb(82,82,76)"/><rect x="3" y="3" width="3" height="3" fill="rgb(145,145,139)"/><rect x="6" y="3" width="3" height="3" fill="rgb(60,60,54)"/><rect x="9" y="3" width="3" height="3" fill="rgb(82,82,76)"/><rect x="12" y="3" width="3" height="3" fill="rgb(82,82,76)"/><rect x="15" y="3" width="3" height="3" fill="rgb(12,12,6)"/><rect x="18" y="3" width="3" height="3" fill="rgb(82,82,76)"/><rect x="21" y="3" width="3" height="3" fill="rgb(24,24,18)"/><rect x="24" y="3" width="3" height="3" fill="rgb(82,82,76)"/><rect x="27" y="3" width="3" height="3" fill="rgb(109,109,103)"/><rect x="30" y="3" width="3" height="3" fill="rgb(82,82,76)"/><rect x="33" y="3" width="3" height="3" fill="rgb(109,109,103)"/><rect x="36" y="3" width="3" height="3" fill="rgb(82,82,76)"/><rect x="39" y="3" width="3" height="3" fill="rgb(82,82,76)"/><rect x="42" y="3" width="3" height="3" fill="rgb(12,12,6)"/><rect x="45" y="3" width="3" height="3" fill="rgb(72,72,66)"/><rect x="48" y="3" width="3" height="3" fill="rgb(82,82,76)"/><rect x="51" y="3" width="3" height="3" fill="rgb(145,145,139)"/><rect x="54" y="3" width="3" height="3" fill="rgb(24,24,18)"/><rect x="57" y="3" width="3" height="3" fill="rgb(82,82,76)"/><rect x="60" y="3" width="3" height="3" fill="rgb(60,60,54)"/><rect x="63" y="3" width="3" height="3" fill="rgb(48,48,42)"/><rect x="66" y="3" width="3" height="3" fill="rgb(72,72,66)"/><rect x="69" y="3" width="3" height="3" fill="rgb(24,24,18)"/><rect x="72" y="3" width="3" height="3" fill="rgb(48,48,42)"/><rect x="75" y="3" width="3" height="3" fill="rgb(12,12,6)"/><rect x="78" y="3" width="3" height="3" fill="rgb(60,60,54)"/><rect x="81" y="3" width="3" height="3" fill="rgb(82,82,76)"/><rect x="84" y="3" width="3" height="3" fill="rgb(48,48,42)"/><rect x="87" y="3" width="3" height="3" fill="rgb(48,48,42)"/><rect x="90" y="3" width="3" height="3" fill="rgb(82,82,76)"/><rect x="93" y="3" width="3" height="3" fill="rgb(24,24,18)"/><rect x="96" y="3" width="3" height="3" fill="rgb(109,109,103)"/><rect x="99" y="3" width="3" height="3" fill="rgb(82,82,76)"/><rect x="102" y="3" width="3" height="3" fill="rgb(82,82,76)"/><rect x="105" y="3" width="3" height="3" fill="rgb(82,82,76)"/><rect x="108" y="3" width="3" height="3" fill="rgb(72,72,66)"/><rect x="111" y="3" width="3" height="3" fill="rgb(82,82,76)"/><rect x="114" y="3" width="3" height="3" fill="rgb(24,24,18)"/><rect x="117" y="3" width="3" height="3" fill="rgb(82,82,76)"/><rect x="120" y="3" width="3" height="3" fill="rgb(82,82,76)"/><rect x="123" y="3" width="3" height="3" fill="rgb(82,82,76)"/><rect x="126" y="3" width="3" height="3" fill="rgb(109,109,103)"/><rect x="129" y="3" width="3" height="3" fill="rgb(12,12,6)"/><rect x="132" y="3" width="3" height="3" fill="rgb(12,12,6)"/><rect x="135" y="3" width="3" height="3" fill="rgb(24,24,18)"/><rect x="138" y="3" width="3" height="3" fill="rgb(145,145,139)"/><rect x="141" y="3" width="3" height="3" fill="rgb(24,24,18)"/><rect x="144" y="3" width="3" height="3" fill="rgb(145,145,139)"/><rect x="147" y="3" width="3" height="3" fill="rgb(109,109,103)"/><rect x="150" y="3" width="3" height="3" fill="rgb(82,82,76)"/><rect x="153" y="3" width="3" height="3" fill="rgb(82,82,76)"/><rect x="156" y="3" width="3" height="3" fill="rgb(109,109,103)"/><rect x="159" y="3" width="3" height="3" fill="rgb(82,82,76)"/><rect x="162" y="3" width="3" height="3" fill="rgb(24,24,18)"/><rect x="0" y="6" width="3" height="3" fill="rgb(82,82,76)"/><rect x="3" y="6" width="3" height="3" fill="rgb(24,24,18)"/><rect x="6" y="6" width="3" height="3" fill="rgb(92,92,86)"/><rect x="9" y="6" width="3" height="3" fill="rgb(60,60,54)"/><rect x="12" y="6" width="3" height="3" fill="rgb(12,12,6)"/><rect x="15" y="6" width="3" height="3" fill="rgb(92,92,86)"/><rect x="18" y="6" width="3" height="3" fill="rgb(82,82,76)"/><rect x="21" y="6" width="3" height="3" fill="rgb(24,24,18)"/><rect x="24" y="6" width="3" height="3" fill="rgb(109,109,103)"/><rect x="27" y="6" width="3" height="3" fill="rgb(12,12,6)"/><rect x="30" y="6" width="3" height="3" fill="rgb(24,24,18)"/><rect x="33" y="6" width="3" height="3" fill="rgb(72,72,66)"/><rect x="36" y="6" width="3" height="3" fill="rgb(82,82,76)"/><rect x="39" y="6" width="3" height="3" fill="rgb(109,109,103)"/><rect x="42" y="6" width="3" height="3" fill="rgb(82,82,76)"/><rect x="45" y="6" width="3" height="3" fill="rgb(145,145,139)"/><rect x="48" y="6" width="3" height="3" fill="rgb(82,82,76)"/><rect x="51" y="6" width="3" height="3" fill="rgb(82,82,76)"/><rect x="54" y="6" width="3" height="3" fill="rgb(60,60,54)"/><rect x="57" y="6" width="3" height="3" fill="rgb(82,82,76)"/><rect x="60" y="6" width="3" height="3" fill="rgb(82,82,76)"/><rect x="63" y="6" width="3" height="3" fill="rgb(92,92,86)"/><rect x="66" y="6" width="3" height="3" fill="rgb(82,82,76)"/><rect x="69" y="6" width="3" height="3" fill="rgb(109,109,103)"/><rect x="72" y="6" width="3" height="3" fill="rgb(82,82,76)"/><rect x="75" y="6" width="3" height="3" fill="rgb(82,82,76)"/><rect x="78" y="6" width="3" height="3" fill="rgb(24,24,18)"/><rect x="81" y="6" width="3" height="3" fill="rgb(12,12,6)"/><rect x="84" y="6" width="3" height="3" fill="rgb(82,82,76)"/><rect x="87" y="6" width="3" height="3" fill="rgb(24,24,18)"/><rect x="90" y="6" width="3" height="3" fill="rgb(12,12,6)"/><rect x="93" y="6" width="3" height="3" fill="rgb(60,60,54)"/><rect x="96" y="6" width="3" height="3" fill="rgb(12,12,6)"/><rect x="99" y="6" width="3" height="3" fill="rgb(82,82,76)"/><rect x="102" y="6" width="3" height="3" fill="rgb(92,92,86)"/><rect x="105" y="6" width="3" height="3" fill="rgb(48,48,42)"/><rect x="108" y="6" width="3" height="3" fill="rgb(109,109,103)"/><rect x="111" y="6" width="3" height="3" fill="rgb(72,72,66)"/><rect x="114" y="6" width="3" height="3" fill="rgb(48,48,42)"/><rect x="117" y="6" width="3" height="3" fill="rgb(82,82,76)"/><rect x="120" y="6" width="3" height="3" fill="rgb(60,60,54)"/><rect x="123" y="6" width="3" height="3" fill="rgb(72,72,66)"/><rect x="126" y="6" width="3" height="3" fill="rgb(72,72,66)"/><rect x="129" y="6" width="3" height="3" fill="rgb(109,109,103)"/><rect x="132" y="6" width="3" height="3" fill="rgb(82,82,76)"/><rect x="135" y="6" width="3" height="3" fill="rgb(24,24,18)"/><rect x="138" y="6" width="3" height="3" fill="rgb(60,60,54)"/><rect x="141" y="6" width="3" height="3" fill="rgb(82,82,76)"/><rect x="144" y="6" width="3" height="3" fill="rgb(82,82,76)"/><rect x="147" y="6" width="3" height="3" fill="rgb(82,82,76)"/><rect x="150" y="6" width="3" height="3" fill="rgb(48,48,42)"/><rect x="153" y="6" width="3" height="3" fill="rgb(82,82,76)"/><rect x="156" y="6" width="3" height="3" fill="rgb(72,72,66)"/><rect x="159" y="6" width="3" height="3" fill="rgb(109,109,103)"/><rect x="162" y="6" width="3" height="3" fill="rgb(48,48,42)"/><rect x="0" y="9" width="3" height="3" fill="rgb(49,49,43)"/><rect x="3" y="9" width="3" height="3" fill="rgb(49,49,43)"/><rect x="6" y="9" width="3" height="3" fill="rgb(29,29,23)"/><rect x="9" y="9" width="3" height="3" fill="rgb(29,29,23)"/><rect x="12" y="9" width="3" height="3" fill="rgb(43,43,37)"/><rect x="18" y="9" width="3" height="3" fill="rgb(49,49,43)"/><rect x="21" y="9" width="3" height="3" fill="rgb(60,60,54)"/><rect x="27" y="9" width="3" height="3" fill="rgb(49,49,43)"/><rect x="30" y="9" width="3" height="3" fill="rgb(49,49,43)"/><rect x="33" y="9" width="3" height="3" fill="rgb(49,49,43)"/><rect x="36" y="9" width="3" height="3" fill="rgb(43,43,37)"/><rect x="39" y="9" width="3" height="3" fill="rgb(49,49,43)"/><rect x="42" y="9" width="3" height="3" fill="rgb(43,43,37)"/><rect x="45" y="9" width="3" height="3" fill="rgb(55,55,49)"/><rect x="48" y="9" width="3" height="3" fill="rgb(43,43,37)"/><rect x="51" y="9" width="3" height="3" fill="rgb(29,29,23)"/><rect x="54" y="9" width="3" height="3" fill="rgb(24,24,18)"/><rect x="57" y="9" width="3" height="3" fill="rgb(49,49,43)"/><rect x="60" y="9" width="3" height="3" fill="rgb(36,36,30)"/><rect x="63" y="9" width="3" height="3" fill="rgb(36,36,30)"/><rect x="66" y="9" width="3" height="3" fill="rgb(43,43,37)"/><rect x="69" y="9" width="3" height="3" fill="rgb(49,49,43)"/><rect x="72" y="9" width="3" height="3" fill="rgb(49,49,43)"/><rect x="75" y="9" width="3" height="3" fill="rgb(49,49,43)"/><rect x="78" y="9" width="3" height="3" fill="rgb(29,29,23)"/><rect x="81" y="9" width="3" height="3" fill="rgb(49,49,43)"/><rect x="84" y="9" width="3" height="3" fill="rgb(49,49,43)"/><rect x="87" y="9" width="3" height="3" fill="rgb(24,24,18)"/><rect x="90" y="9" width="3" height="3" fill="rgb(49,49,43)"/><rect x="93" y="9" width="3" height="3" fill="rgb(29,29,23)"/><rect x="96" y="9" width="3" height="3" fill="rgb(49,49,43)"/><rect x="99" y="9" width="3" height="3" fill="rgb(87,87,81)"/><rect x="102" y="9" width="3" height="3" fill="rgb(49,49,43)"/><rect x="108" y="9" width="3" height="3" fill="rgb(29,29,23)"/><rect x="111" y="9" width="3" height="3" fill="rgb(49,49,43)"/><rect x="114" y="9" width="3" height="3" fill="rgb(48,48,42)"/><rect x="117" y="9" width="3" height="3" fill="rgb(14,14,8)"/><rect x="120" y="9" width="3" height="3" fill="rgb(65,65,59)"/><rect x="123" y="9" width="3" height="3" fill="rgb(65,65,59)"/><rect x="126" y="9" width="3" height="3" fill="rgb(55,55,49)"/><rect x="129" y="9" width="3" height="3" fill="rgb(49,49,43)"/><rect x="132" y="9" width="3" height="3" fill="rgb(43,43,37)"/><rect x="135" y="9" width="3" height="3" fill="rgb(48,48,42)"/><rect x="138" y="9" width="3" height="3" fill="rgb(49,49,43)"/><rect x="141" y="9" width="3" height="3" fill="rgb(49,49,43)"/><rect x="144" y="9" width="3" height="3" fill="rgb(49,49,43)"/><rect x="147" y="9" width="3" height="3" fill="rgb(49,49,43)"/><rect x="150" y="9" width="3" height="3" fill="rgb(49,49,43)"/><rect x="153" y="9" width="3" height="3" fill="rgb(55,55,49)"/><rect x="156" y="9" width="3" height="3" fill="rgb(49,49,43)"/><rect x="159" y="9" width="3" height="3" fill="rgb(49,49,43)"/><rect x="162" y="9" width="3" height="3" fill="rgb(60,60,54)"/></g><g id="dod_l"><rect x="0" y="0" width="3" height="3" fill="rgb(204,204,204)"/><rect x="3" y="0" width="3" height="3" fill="rgb(168,168,168)"/><rect x="6" y="0" width="3" height="3" fill="rgb(229,229,229)"/><rect x="9" y="0" width="3" height="3" fill="rgb(204,204,204)"/><rect x="12" y="0" width="3" height="3" fill="rgb(158,158,158)"/><rect x="15" y="0" width="3" height="3" fill="rgb(229,229,229)"/><rect x="0" y="3" width="3" height="3" fill="rgb(191,191,191)"/><rect x="3" y="3" width="3" height="3" fill="rgb(204,204,204)"/><rect x="6" y="3" width="3" height="3" fill="rgb(204,204,204)"/><rect x="9" y="3" width="3" height="3" fill="rgb(168,168,168)"/><rect x="12" y="3" width="3" height="3" fill="rgb(168,168,168)"/><rect x="15" y="3" width="3" height="3" fill="rgb(229,229,229)"/><rect x="0" y="6" width="3" height="3" fill="rgb(168,168,168)"/><rect x="3" y="6" width="3" height="3" fill="rgb(158,158,158)"/><rect x="6" y="6" width="3" height="3" fill="rgb(168,168,168)"/><rect x="9" y="6" width="3" height="3" fill="rgb(102,102,102)"/><rect x="12" y="6" width="3" height="3" fill="rgb(191,191,191)"/><rect x="15" y="6" width="3" height="3" fill="rgb(191,191,191)"/></g><g id="dod_d"><rect x="0" y="0" width="3" height="3" fill="rgb(48,48,42)"/><rect x="3" y="0" width="3" height="3" fill="rgb(82,82,76)"/><rect x="6" y="0" width="3" height="3" fill="rgb(24,24,18)"/><rect x="9" y="0" width="3" height="3" fill="rgb(48,48,42)"/><rect x="12" y="0" width="3" height="3" fill="rgb(92,92,86)"/><rect x="15" y="0" width="3" height="3" fill="rgb(24,24,18)"/><rect x="0" y="3" width="3" height="3" fill="rgb(60,60,54)"/><rect x="3" y="3" width="3" height="3" fill="rgb(48,48,42)"/><rect x="6" y="3" width="3" height="3" fill="rgb(48,48,42)"/><rect x="9" y="3" width="3" height="3" fill="rgb(82,82,76)"/><rect x="12" y="3" width="3" height="3" fill="rgb(82,82,76)"/><rect x="15" y="3" width="3" height="3" fill="rgb(24,24,18)"/><rect x="0" y="6" width="3" height="3" fill="rgb(82,82,76)"/><rect x="3" y="6" width="3" height="3" fill="rgb(92,92,86)"/><rect x="6" y="6" width="3" height="3" fill="rgb(82,82,76)"/><rect x="9" y="6" width="3" height="3" fill="rgb(145,145,139)"/><rect x="12" y="6" width="3" height="3" fill="rgb(60,60,54)"/><rect x="15" y="6" width="3" height="3" fill="rgb(60,60,54)"/></g><g id="tit_l"><rect x="0" y="0" width="3" height="3" fill="rgb(140,140,140)"/><rect x="3" y="0" width="3" height="3" fill="rgb(140,140,140)"/><rect x="6" y="0" width="3" height="3" fill="rgb(229,229,229)"/><rect x="9" y="0" width="3" height="3" fill="rgb(178,178,178)"/><rect x="0" y="3" width="3" height="3" fill="rgb(102,102,102)"/><rect x="3" y="3" width="3" height="3" fill="rgb(102,102,102)"/><rect x="6" y="3" width="3" height="3" fill="rgb(229,229,229)"/><rect x="9" y="3" width="3" height="3" fill="rgb(178,178,178)"/><rect x="0" y="6" width="3" height="3" fill="rgb(165,165,165)"/><rect x="3" y="6" width="3" height="3" fill="rgb(165,165,165)"/><rect x="6" y="6" width="3" height="3" fill="rgb(229,229,229)"/><rect x="9" y="6" width="3" height="3" fill="rgb(191,191,191)"/></g><g id="tit_d"><rect x="0" y="0" width="3" height="3" fill="rgb(109,109,109)"/><rect x="3" y="0" width="3" height="3" fill="rgb(109,109,109)"/><rect x="6" y="0" width="3" height="3" fill="rgb(24,24,24)"/><rect x="9" y="0" width="3" height="3" fill="rgb(72,72,72)"/><rect x="0" y="3" width="3" height="3" fill="rgb(145,145,145)"/><rect x="3" y="3" width="3" height="3" fill="rgb(145,145,145)"/><rect x="6" y="3" width="3" height="3" fill="rgb(24,24,24)"/><rect x="9" y="3" width="3" height="3" fill="rgb(72,72,72)"/><rect x="0" y="6" width="3" height="3" fill="rgb(84,84,84)"/><rect x="3" y="6" width="3" height="3" fill="rgb(84,84,84)"/><rect x="6" y="6" width="3" height="3" fill="rgb(24,24,24)"/><rect x="9" y="6" width="3" height="3" fill="rgb(60,60,60)"/></g></defs></svg></body></html>
